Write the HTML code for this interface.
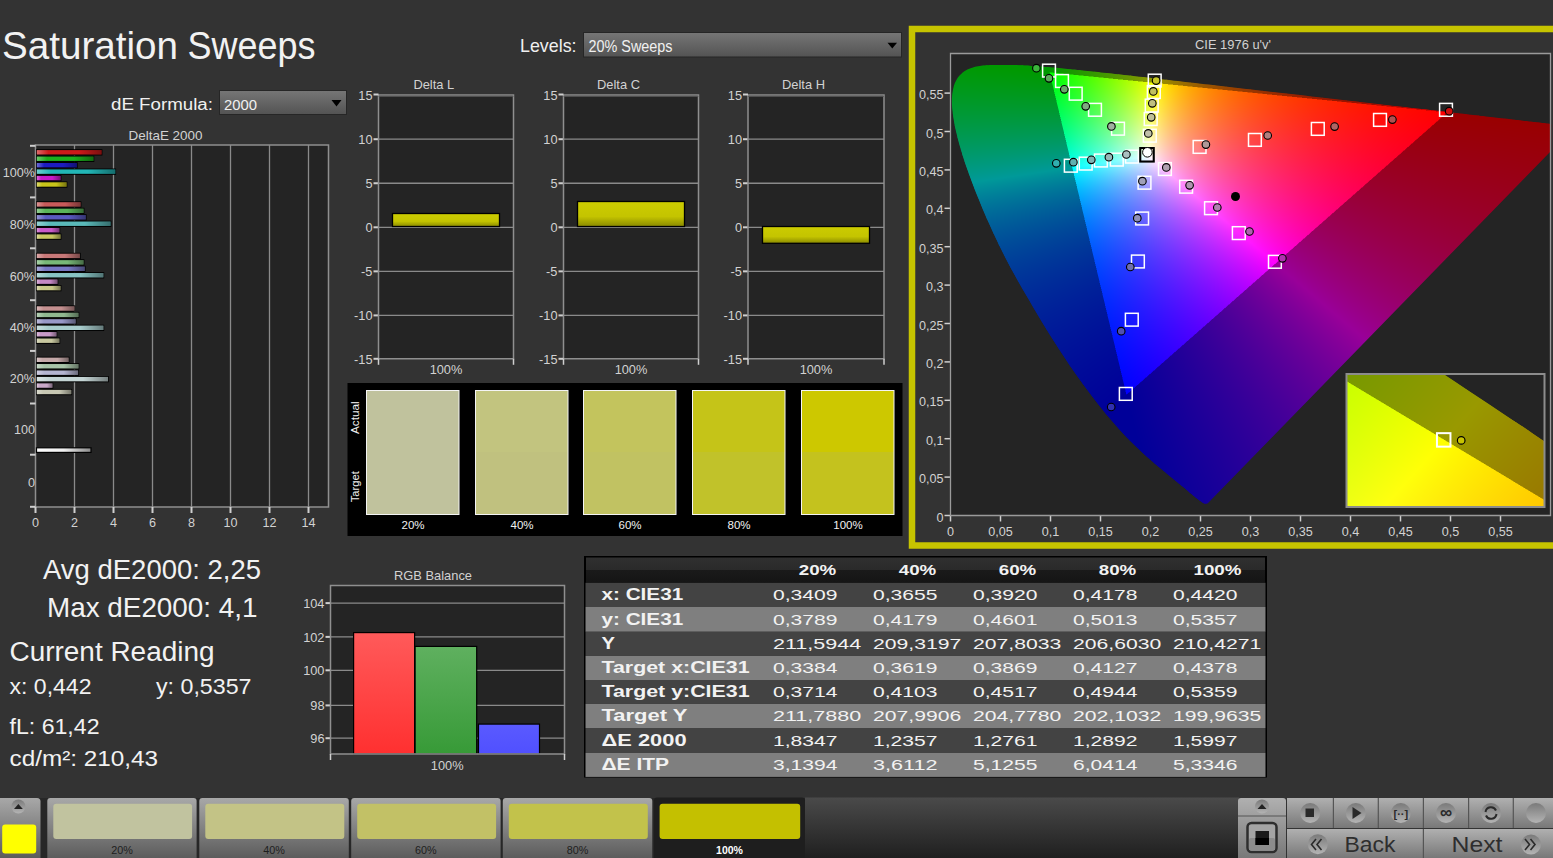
<!DOCTYPE html>
<html><head><meta charset="utf-8"><style>
html,body{margin:0;padding:0;background:#333333;width:1553px;height:858px;overflow:hidden;}
svg{position:absolute;left:0;top:0;}
text{font-family:"Liberation Sans",sans-serif;}
canvas{position:absolute;}
</style></head><body>
<svg width="1553" height="858" viewBox="0 0 1553 858"><defs>
<linearGradient id="barov" x1="0" y1="0" x2="1" y2="0"><stop offset="0" stop-color="#fff" stop-opacity="0.35"/><stop offset="0.18" stop-color="#fff" stop-opacity="0"/><stop offset="0.65" stop-color="#000" stop-opacity="0"/><stop offset="1" stop-color="#000" stop-opacity="0.4"/></linearGradient>
<linearGradient id="ddgrad" x1="0" y1="0" x2="0" y2="1"><stop offset="0" stop-color="#767676"/><stop offset="1" stop-color="#535353"/></linearGradient>
<linearGradient id="ybar" x1="0" y1="0" x2="0" y2="1"><stop offset="0" stop-color="#cccc00"/><stop offset="0.6" stop-color="#c4c400"/><stop offset="1" stop-color="#8a8a00"/></linearGradient>
<linearGradient id="rbar" x1="0" y1="0" x2="0" y2="1"><stop offset="0" stop-color="#ff5a5a"/><stop offset="1" stop-color="#ff3030"/></linearGradient>
<linearGradient id="gbar" x1="0" y1="0" x2="0" y2="1"><stop offset="0" stop-color="#5fb05f"/><stop offset="1" stop-color="#379a37"/></linearGradient>
<linearGradient id="bbar" x1="0" y1="0" x2="0" y2="1"><stop offset="0" stop-color="#5a5aff"/><stop offset="1" stop-color="#5050ff"/></linearGradient>
<linearGradient id="btn" x1="0" y1="0" x2="0" y2="1"><stop offset="0" stop-color="#a8a8a8"/><stop offset="1" stop-color="#5c5c5c"/></linearGradient>
<linearGradient id="btn2" x1="0" y1="0" x2="0" y2="1"><stop offset="0" stop-color="#b0b0b0"/><stop offset="1" stop-color="#787878"/></linearGradient>
<linearGradient id="tbar" x1="0" y1="0" x2="0" y2="1"><stop offset="0" stop-color="#4a4a4a"/><stop offset="1" stop-color="#1f1f1f"/></linearGradient>
<linearGradient id="circ" x1="0" y1="0" x2="0" y2="1"><stop offset="0" stop-color="#7a7a7a"/><stop offset="1" stop-color="#b4b4b4"/></linearGradient>
<linearGradient id="whitebar" x1="0" y1="0" x2="1" y2="0"><stop offset="0" stop-color="#ffffff"/><stop offset="0.5" stop-color="#f0f0f0"/><stop offset="1" stop-color="#8a8a8a"/></linearGradient>
<linearGradient id="thead" x1="0" y1="0" x2="0" y2="1"><stop offset="0" stop-color="#303030"/><stop offset="0.5" stop-color="#2a2a2a"/><stop offset="0.5" stop-color="#1a1a1a"/><stop offset="1" stop-color="#151515"/></linearGradient>
</defs>
<rect x="0" y="0" width="1553" height="858" fill="#333333"/>
<text x="2" y="58.7" font-size="38.5" fill="#f2f2f2" text-anchor="start" font-weight="normal" textLength="176" lengthAdjust="spacingAndGlyphs">Saturation</text>
<text x="187.5" y="58.7" font-size="38.5" fill="#f2f2f2" text-anchor="start" font-weight="normal" textLength="128" lengthAdjust="spacingAndGlyphs">Sweeps</text>
<text x="111" y="109.8" font-size="15.8" fill="#f0f0f0" text-anchor="start" font-weight="normal" textLength="102" lengthAdjust="spacingAndGlyphs">dE Formula:</text>
<rect x="219.5" y="90.5" width="127" height="24" fill="url(#ddgrad)" stroke="#262626" stroke-width="1" />
<text x="224" y="109.8" font-size="15.5" fill="#f0f0f0" text-anchor="start" font-weight="normal" textLength="33" lengthAdjust="spacingAndGlyphs">2000</text>
<polygon points="331.5,100 341.5,100 336.5,106.5" fill="#000"/>
<text x="520" y="51.7" font-size="19" fill="#f0f0f0" text-anchor="start" font-weight="normal" textLength="56.5" lengthAdjust="spacingAndGlyphs">Levels:</text>
<rect x="583.5" y="32.5" width="318" height="24.5" fill="url(#ddgrad)" stroke="#262626" stroke-width="1" />
<text x="588.5" y="51.7" font-size="15.6" fill="#f0f0f0" text-anchor="start" font-weight="normal" textLength="84" lengthAdjust="spacingAndGlyphs">20% Sweeps</text>
<polygon points="887.5,42.8 897,42.8 892.3,48.5" fill="#000"/>
<text x="128.5" y="139.9" font-size="12.6" fill="#d2d2d2" text-anchor="start" font-weight="normal" textLength="74" lengthAdjust="spacingAndGlyphs">DeltaE 2000</text>
<rect x="35.5" y="145" width="293.0" height="362" fill="#242424" />
<line x1="74.5" y1="145" x2="74.5" y2="507" stroke="#8a8a8a" stroke-width="1.3"/>
<line x1="113.5" y1="145" x2="113.5" y2="507" stroke="#8a8a8a" stroke-width="1.3"/>
<line x1="152.5" y1="145" x2="152.5" y2="507" stroke="#8a8a8a" stroke-width="1.3"/>
<line x1="191.5" y1="145" x2="191.5" y2="507" stroke="#8a8a8a" stroke-width="1.3"/>
<line x1="230.5" y1="145" x2="230.5" y2="507" stroke="#8a8a8a" stroke-width="1.3"/>
<line x1="269.5" y1="145" x2="269.5" y2="507" stroke="#8a8a8a" stroke-width="1.3"/>
<line x1="308.5" y1="145" x2="308.5" y2="507" stroke="#8a8a8a" stroke-width="1.3"/>
<path d="M35.5 145 H328.5 V507 H35.5 Z" fill="none" stroke="#8f8f8f" stroke-width="1.5"/>
<line x1="30" y1="145.8" x2="35.5" y2="145.8" stroke="#cfcfcf" stroke-width="2"/>
<line x1="30" y1="197.4" x2="35.5" y2="197.4" stroke="#cfcfcf" stroke-width="2"/>
<line x1="30" y1="248.3" x2="35.5" y2="248.3" stroke="#cfcfcf" stroke-width="2"/>
<line x1="30" y1="300.2" x2="35.5" y2="300.2" stroke="#cfcfcf" stroke-width="2"/>
<line x1="30" y1="350.9" x2="35.5" y2="350.9" stroke="#cfcfcf" stroke-width="2"/>
<line x1="30" y1="403.5" x2="35.5" y2="403.5" stroke="#cfcfcf" stroke-width="2"/>
<line x1="30" y1="454.7" x2="35.5" y2="454.7" stroke="#cfcfcf" stroke-width="2"/>
<line x1="30" y1="506.8" x2="35.5" y2="506.8" stroke="#cfcfcf" stroke-width="2"/>
<line x1="35.5" y1="507" x2="35.5" y2="513" stroke="#cfcfcf" stroke-width="2"/>
<line x1="74.5" y1="507" x2="74.5" y2="513" stroke="#cfcfcf" stroke-width="2"/>
<line x1="113.5" y1="507" x2="113.5" y2="513" stroke="#cfcfcf" stroke-width="2"/>
<line x1="152.5" y1="507" x2="152.5" y2="513" stroke="#cfcfcf" stroke-width="2"/>
<line x1="191.5" y1="507" x2="191.5" y2="513" stroke="#cfcfcf" stroke-width="2"/>
<line x1="230.5" y1="507" x2="230.5" y2="513" stroke="#cfcfcf" stroke-width="2"/>
<line x1="269.5" y1="507" x2="269.5" y2="513" stroke="#cfcfcf" stroke-width="2"/>
<line x1="308.5" y1="507" x2="308.5" y2="513" stroke="#cfcfcf" stroke-width="2"/>
<text x="35.5" y="527" font-size="12.6" fill="#d2d2d2" text-anchor="middle" font-weight="normal">0</text>
<text x="74.5" y="527" font-size="12.6" fill="#d2d2d2" text-anchor="middle" font-weight="normal">2</text>
<text x="113.5" y="527" font-size="12.6" fill="#d2d2d2" text-anchor="middle" font-weight="normal">4</text>
<text x="152.5" y="527" font-size="12.6" fill="#d2d2d2" text-anchor="middle" font-weight="normal">6</text>
<text x="191.5" y="527" font-size="12.6" fill="#d2d2d2" text-anchor="middle" font-weight="normal">8</text>
<text x="230.5" y="527" font-size="12.6" fill="#d2d2d2" text-anchor="middle" font-weight="normal">10</text>
<text x="269.5" y="527" font-size="12.6" fill="#d2d2d2" text-anchor="middle" font-weight="normal">12</text>
<text x="308.5" y="527" font-size="12.6" fill="#d2d2d2" text-anchor="middle" font-weight="normal">14</text>
<text x="35" y="176.7" font-size="12.6" fill="#d2d2d2" text-anchor="end" font-weight="normal">100%</text>
<text x="35" y="228.6" font-size="12.6" fill="#d2d2d2" text-anchor="end" font-weight="normal">80%</text>
<text x="35" y="280.5" font-size="12.6" fill="#d2d2d2" text-anchor="end" font-weight="normal">60%</text>
<text x="35" y="331.5" font-size="12.6" fill="#d2d2d2" text-anchor="end" font-weight="normal">40%</text>
<text x="35" y="383.0" font-size="12.6" fill="#d2d2d2" text-anchor="end" font-weight="normal">20%</text>
<text x="35" y="434.1" font-size="12.6" fill="#d2d2d2" text-anchor="end" font-weight="normal">100</text>
<text x="35" y="487.2" font-size="12.6" fill="#d2d2d2" text-anchor="end" font-weight="normal">0</text>
<rect x="36.1" y="149.2" width="66.29999999999998" height="6.3" fill="#000" />
<rect x="36.8" y="150.1" width="64.8" height="4.4" fill="#cc1a1a" />
<rect x="36.8" y="150.1" width="64.8" height="4.4" fill="url(#barov)" />
<rect x="36.1" y="155.64" width="58.199999999999996" height="6.3" fill="#000" />
<rect x="36.8" y="156.54" width="56.7" height="4.4" fill="#1cae1c" />
<rect x="36.8" y="156.54" width="56.7" height="4.4" fill="url(#barov)" />
<rect x="36.1" y="162.07999999999998" width="41.6" height="6.3" fill="#000" />
<rect x="36.8" y="162.98" width="40.10000000000001" height="4.4" fill="#1c1cc0" />
<rect x="36.8" y="162.98" width="40.10000000000001" height="4.4" fill="url(#barov)" />
<rect x="36.1" y="168.51999999999998" width="80.0" height="6.3" fill="#000" />
<rect x="36.8" y="169.42" width="78.5" height="4.4" fill="#22b6b6" />
<rect x="36.8" y="169.42" width="78.5" height="4.4" fill="url(#barov)" />
<rect x="36.1" y="174.95999999999998" width="25.299999999999997" height="6.3" fill="#000" />
<rect x="36.8" y="175.85999999999999" width="23.800000000000004" height="4.4" fill="#c81ac8" />
<rect x="36.8" y="175.85999999999999" width="23.800000000000004" height="4.4" fill="url(#barov)" />
<rect x="36.1" y="181.39999999999998" width="31.29999999999999" height="6.3" fill="#000" />
<rect x="36.8" y="182.29999999999998" width="29.799999999999997" height="4.4" fill="#c8c41a" />
<rect x="36.8" y="182.29999999999998" width="29.799999999999997" height="4.4" fill="url(#barov)" />
<rect x="36.1" y="201.3" width="45.29999999999999" height="6.3" fill="#000" />
<rect x="36.8" y="202.20000000000002" width="43.8" height="4.4" fill="#c85a5a" />
<rect x="36.8" y="202.20000000000002" width="43.8" height="4.4" fill="url(#barov)" />
<rect x="36.1" y="207.74" width="48.29999999999999" height="6.3" fill="#000" />
<rect x="36.8" y="208.64000000000001" width="46.8" height="4.4" fill="#5ab45a" />
<rect x="36.8" y="208.64000000000001" width="46.8" height="4.4" fill="url(#barov)" />
<rect x="36.1" y="214.18" width="50.49999999999999" height="6.3" fill="#000" />
<rect x="36.8" y="215.08" width="49.0" height="4.4" fill="#5a5ac0" />
<rect x="36.8" y="215.08" width="49.0" height="4.4" fill="url(#barov)" />
<rect x="36.1" y="220.62" width="75.29999999999998" height="6.3" fill="#000" />
<rect x="36.8" y="221.52" width="73.8" height="4.4" fill="#5ab9b9" />
<rect x="36.8" y="221.52" width="73.8" height="4.4" fill="url(#barov)" />
<rect x="36.1" y="227.06" width="24.099999999999994" height="6.3" fill="#000" />
<rect x="36.8" y="227.96" width="22.6" height="4.4" fill="#c85ac8" />
<rect x="36.8" y="227.96" width="22.6" height="4.4" fill="url(#barov)" />
<rect x="36.1" y="233.5" width="25.299999999999997" height="6.3" fill="#000" />
<rect x="36.8" y="234.4" width="23.800000000000004" height="4.4" fill="#c8c860" />
<rect x="36.8" y="234.4" width="23.800000000000004" height="4.4" fill="url(#barov)" />
<rect x="36.1" y="252.8" width="44.6" height="6.3" fill="#000" />
<rect x="36.8" y="253.70000000000002" width="43.10000000000001" height="4.4" fill="#c87878" />
<rect x="36.8" y="253.70000000000002" width="43.10000000000001" height="4.4" fill="url(#barov)" />
<rect x="36.1" y="259.24" width="48.29999999999999" height="6.3" fill="#000" />
<rect x="36.8" y="260.14" width="46.8" height="4.4" fill="#78b878" />
<rect x="36.8" y="260.14" width="46.8" height="4.4" fill="url(#barov)" />
<rect x="36.1" y="265.68" width="49.49999999999999" height="6.3" fill="#000" />
<rect x="36.8" y="266.58" width="48.0" height="4.4" fill="#7878c4" />
<rect x="36.8" y="266.58" width="48.0" height="4.4" fill="url(#barov)" />
<rect x="36.1" y="272.12" width="68.1" height="6.3" fill="#000" />
<rect x="36.8" y="273.02" width="66.60000000000001" height="4.4" fill="#88c4c4" />
<rect x="36.8" y="273.02" width="66.60000000000001" height="4.4" fill="url(#barov)" />
<rect x="36.1" y="278.56" width="22.199999999999996" height="6.3" fill="#000" />
<rect x="36.8" y="279.46" width="20.700000000000003" height="4.4" fill="#c488c4" />
<rect x="36.8" y="279.46" width="20.700000000000003" height="4.4" fill="url(#barov)" />
<rect x="36.1" y="285.0" width="25.299999999999997" height="6.3" fill="#000" />
<rect x="36.8" y="285.9" width="23.800000000000004" height="4.4" fill="#c8c888" />
<rect x="36.8" y="285.9" width="23.800000000000004" height="4.4" fill="url(#barov)" />
<rect x="36.1" y="305.4" width="39.199999999999996" height="6.3" fill="#000" />
<rect x="36.8" y="306.29999999999995" width="37.7" height="4.4" fill="#c49090" />
<rect x="36.8" y="306.29999999999995" width="37.7" height="4.4" fill="url(#barov)" />
<rect x="36.1" y="311.84" width="43.199999999999996" height="6.3" fill="#000" />
<rect x="36.8" y="312.73999999999995" width="41.7" height="4.4" fill="#90b890" />
<rect x="36.8" y="312.73999999999995" width="41.7" height="4.4" fill="url(#barov)" />
<rect x="36.1" y="318.28" width="40.4" height="6.3" fill="#000" />
<rect x="36.8" y="319.17999999999995" width="38.900000000000006" height="4.4" fill="#9898c8" />
<rect x="36.8" y="319.17999999999995" width="38.900000000000006" height="4.4" fill="url(#barov)" />
<rect x="36.1" y="324.71999999999997" width="68.1" height="6.3" fill="#000" />
<rect x="36.8" y="325.61999999999995" width="66.60000000000001" height="4.4" fill="#a8cccc" />
<rect x="36.8" y="325.61999999999995" width="66.60000000000001" height="4.4" fill="url(#barov)" />
<rect x="36.1" y="331.15999999999997" width="21.199999999999996" height="6.3" fill="#000" />
<rect x="36.8" y="332.05999999999995" width="19.700000000000003" height="4.4" fill="#c89ac8" />
<rect x="36.8" y="332.05999999999995" width="19.700000000000003" height="4.4" fill="url(#barov)" />
<rect x="36.1" y="337.59999999999997" width="24.099999999999994" height="6.3" fill="#000" />
<rect x="36.8" y="338.49999999999994" width="22.6" height="4.4" fill="#c8c8a0" />
<rect x="36.8" y="338.49999999999994" width="22.6" height="4.4" fill="url(#barov)" />
<rect x="36.1" y="356.7" width="33.29999999999999" height="6.3" fill="#000" />
<rect x="36.8" y="357.59999999999997" width="31.799999999999997" height="4.4" fill="#c4a8a8" />
<rect x="36.8" y="357.59999999999997" width="31.799999999999997" height="4.4" fill="url(#barov)" />
<rect x="36.1" y="363.14" width="43.199999999999996" height="6.3" fill="#000" />
<rect x="36.8" y="364.03999999999996" width="41.7" height="4.4" fill="#a8c4a8" />
<rect x="36.8" y="364.03999999999996" width="41.7" height="4.4" fill="url(#barov)" />
<rect x="36.1" y="369.58" width="42.79999999999999" height="6.3" fill="#000" />
<rect x="36.8" y="370.47999999999996" width="41.3" height="4.4" fill="#b4b4d0" />
<rect x="36.8" y="370.47999999999996" width="41.3" height="4.4" fill="url(#barov)" />
<rect x="36.1" y="376.02" width="72.69999999999999" height="6.3" fill="#000" />
<rect x="36.8" y="376.91999999999996" width="71.2" height="4.4" fill="#c4d4d4" />
<rect x="36.8" y="376.91999999999996" width="71.2" height="4.4" fill="url(#barov)" />
<rect x="36.1" y="382.46" width="17.199999999999996" height="6.3" fill="#000" />
<rect x="36.8" y="383.35999999999996" width="15.700000000000003" height="4.4" fill="#c8a8c8" />
<rect x="36.8" y="383.35999999999996" width="15.700000000000003" height="4.4" fill="url(#barov)" />
<rect x="36.1" y="388.9" width="35.99999999999999" height="6.3" fill="#000" />
<rect x="36.8" y="389.79999999999995" width="34.5" height="4.4" fill="#c8c8b4" />
<rect x="36.8" y="389.79999999999995" width="34.5" height="4.4" fill="url(#barov)" />
<rect x="36.5" y="447.8" width="54.5" height="4.6" fill="url(#whitebar)" stroke="#000" stroke-width="1.2" />
<text x="433.8" y="88.9" font-size="12.9" fill="#d2d2d2" text-anchor="middle" font-weight="normal">Delta L</text>
<rect x="378.5" y="94.5" width="135.0" height="264.3" fill="#242424" />
<line x1="378.5" y1="139.2" x2="513.5" y2="139.2" stroke="#8a8a8a" stroke-width="1.3"/>
<line x1="373.5" y1="139.2" x2="378.5" y2="139.2" stroke="#cfcfcf" stroke-width="2"/>
<line x1="378.5" y1="183.25" x2="513.5" y2="183.25" stroke="#8a8a8a" stroke-width="1.3"/>
<line x1="373.5" y1="183.25" x2="378.5" y2="183.25" stroke="#cfcfcf" stroke-width="2"/>
<line x1="378.5" y1="227.3" x2="513.5" y2="227.3" stroke="#8a8a8a" stroke-width="1.3"/>
<line x1="373.5" y1="227.3" x2="378.5" y2="227.3" stroke="#cfcfcf" stroke-width="2"/>
<line x1="378.5" y1="271.35" x2="513.5" y2="271.35" stroke="#8a8a8a" stroke-width="1.3"/>
<line x1="373.5" y1="271.35" x2="378.5" y2="271.35" stroke="#cfcfcf" stroke-width="2"/>
<line x1="378.5" y1="315.40000000000003" x2="513.5" y2="315.40000000000003" stroke="#8a8a8a" stroke-width="1.3"/>
<line x1="373.5" y1="315.40000000000003" x2="378.5" y2="315.40000000000003" stroke="#cfcfcf" stroke-width="2"/>
<path d="M378.5 95.0 H513.5 V358.8 H378.5 Z" fill="none" stroke="#8f8f8f" stroke-width="1.5"/>
<line x1="378.5" y1="96.3" x2="513.5" y2="96.3" stroke="#5a5a5a" stroke-width="1"/>
<line x1="373.5" y1="94.5" x2="378.5" y2="94.5" stroke="#cfcfcf" stroke-width="2"/>
<line x1="373.5" y1="358.8" x2="378.5" y2="358.8" stroke="#cfcfcf" stroke-width="2"/>
<line x1="378.5" y1="358.8" x2="378.5" y2="364.8" stroke="#cfcfcf" stroke-width="1.5"/>
<line x1="513.5" y1="358.8" x2="513.5" y2="364.8" stroke="#cfcfcf" stroke-width="1.5"/>
<text x="372.5" y="99.75" font-size="12.8" fill="#d2d2d2" text-anchor="end" font-weight="normal">15</text>
<text x="372.5" y="143.79999999999998" font-size="12.8" fill="#d2d2d2" text-anchor="end" font-weight="normal">10</text>
<text x="372.5" y="187.85" font-size="12.8" fill="#d2d2d2" text-anchor="end" font-weight="normal">5</text>
<text x="372.5" y="231.9" font-size="12.8" fill="#d2d2d2" text-anchor="end" font-weight="normal">0</text>
<text x="372.5" y="275.95000000000005" font-size="12.8" fill="#d2d2d2" text-anchor="end" font-weight="normal">-5</text>
<text x="372.5" y="320.00000000000006" font-size="12.8" fill="#d2d2d2" text-anchor="end" font-weight="normal">-10</text>
<text x="372.5" y="364.05000000000007" font-size="12.8" fill="#d2d2d2" text-anchor="end" font-weight="normal">-15</text>
<text x="446.0" y="374" font-size="12.8" fill="#d2d2d2" text-anchor="middle" font-weight="normal">100%</text>
<rect x="392.5" y="213.5" width="107.0" height="13.0" fill="url(#ybar)" stroke="#000" stroke-width="1.3" />
<text x="618.5" y="88.9" font-size="12.9" fill="#d2d2d2" text-anchor="middle" font-weight="normal">Delta C</text>
<rect x="563.5" y="94.5" width="135.0" height="264.3" fill="#242424" />
<line x1="563.5" y1="139.2" x2="698.5" y2="139.2" stroke="#8a8a8a" stroke-width="1.3"/>
<line x1="558.5" y1="139.2" x2="563.5" y2="139.2" stroke="#cfcfcf" stroke-width="2"/>
<line x1="563.5" y1="183.25" x2="698.5" y2="183.25" stroke="#8a8a8a" stroke-width="1.3"/>
<line x1="558.5" y1="183.25" x2="563.5" y2="183.25" stroke="#cfcfcf" stroke-width="2"/>
<line x1="563.5" y1="227.3" x2="698.5" y2="227.3" stroke="#8a8a8a" stroke-width="1.3"/>
<line x1="558.5" y1="227.3" x2="563.5" y2="227.3" stroke="#cfcfcf" stroke-width="2"/>
<line x1="563.5" y1="271.35" x2="698.5" y2="271.35" stroke="#8a8a8a" stroke-width="1.3"/>
<line x1="558.5" y1="271.35" x2="563.5" y2="271.35" stroke="#cfcfcf" stroke-width="2"/>
<line x1="563.5" y1="315.40000000000003" x2="698.5" y2="315.40000000000003" stroke="#8a8a8a" stroke-width="1.3"/>
<line x1="558.5" y1="315.40000000000003" x2="563.5" y2="315.40000000000003" stroke="#cfcfcf" stroke-width="2"/>
<path d="M563.5 95.0 H698.5 V358.8 H563.5 Z" fill="none" stroke="#8f8f8f" stroke-width="1.5"/>
<line x1="563.5" y1="96.3" x2="698.5" y2="96.3" stroke="#5a5a5a" stroke-width="1"/>
<line x1="558.5" y1="94.5" x2="563.5" y2="94.5" stroke="#cfcfcf" stroke-width="2"/>
<line x1="558.5" y1="358.8" x2="563.5" y2="358.8" stroke="#cfcfcf" stroke-width="2"/>
<line x1="563.5" y1="358.8" x2="563.5" y2="364.8" stroke="#cfcfcf" stroke-width="1.5"/>
<line x1="698.5" y1="358.8" x2="698.5" y2="364.8" stroke="#cfcfcf" stroke-width="1.5"/>
<text x="557.5" y="99.75" font-size="12.8" fill="#d2d2d2" text-anchor="end" font-weight="normal">15</text>
<text x="557.5" y="143.79999999999998" font-size="12.8" fill="#d2d2d2" text-anchor="end" font-weight="normal">10</text>
<text x="557.5" y="187.85" font-size="12.8" fill="#d2d2d2" text-anchor="end" font-weight="normal">5</text>
<text x="557.5" y="231.9" font-size="12.8" fill="#d2d2d2" text-anchor="end" font-weight="normal">0</text>
<text x="557.5" y="275.95000000000005" font-size="12.8" fill="#d2d2d2" text-anchor="end" font-weight="normal">-5</text>
<text x="557.5" y="320.00000000000006" font-size="12.8" fill="#d2d2d2" text-anchor="end" font-weight="normal">-10</text>
<text x="557.5" y="364.05000000000007" font-size="12.8" fill="#d2d2d2" text-anchor="end" font-weight="normal">-15</text>
<text x="631.0" y="374" font-size="12.8" fill="#d2d2d2" text-anchor="middle" font-weight="normal">100%</text>
<rect x="577.5" y="201.5" width="107.0" height="25.0" fill="url(#ybar)" stroke="#000" stroke-width="1.3" />
<text x="803.5" y="88.9" font-size="12.9" fill="#d2d2d2" text-anchor="middle" font-weight="normal">Delta H</text>
<rect x="748" y="94.5" width="136" height="264.3" fill="#242424" />
<line x1="748" y1="139.2" x2="884" y2="139.2" stroke="#8a8a8a" stroke-width="1.3"/>
<line x1="743" y1="139.2" x2="748" y2="139.2" stroke="#cfcfcf" stroke-width="2"/>
<line x1="748" y1="183.25" x2="884" y2="183.25" stroke="#8a8a8a" stroke-width="1.3"/>
<line x1="743" y1="183.25" x2="748" y2="183.25" stroke="#cfcfcf" stroke-width="2"/>
<line x1="748" y1="227.3" x2="884" y2="227.3" stroke="#8a8a8a" stroke-width="1.3"/>
<line x1="743" y1="227.3" x2="748" y2="227.3" stroke="#cfcfcf" stroke-width="2"/>
<line x1="748" y1="271.35" x2="884" y2="271.35" stroke="#8a8a8a" stroke-width="1.3"/>
<line x1="743" y1="271.35" x2="748" y2="271.35" stroke="#cfcfcf" stroke-width="2"/>
<line x1="748" y1="315.40000000000003" x2="884" y2="315.40000000000003" stroke="#8a8a8a" stroke-width="1.3"/>
<line x1="743" y1="315.40000000000003" x2="748" y2="315.40000000000003" stroke="#cfcfcf" stroke-width="2"/>
<path d="M748 95.0 H884 V358.8 H748 Z" fill="none" stroke="#8f8f8f" stroke-width="1.5"/>
<line x1="748" y1="96.3" x2="884" y2="96.3" stroke="#5a5a5a" stroke-width="1"/>
<line x1="743" y1="94.5" x2="748" y2="94.5" stroke="#cfcfcf" stroke-width="2"/>
<line x1="743" y1="358.8" x2="748" y2="358.8" stroke="#cfcfcf" stroke-width="2"/>
<line x1="748" y1="358.8" x2="748" y2="364.8" stroke="#cfcfcf" stroke-width="1.5"/>
<line x1="884" y1="358.8" x2="884" y2="364.8" stroke="#cfcfcf" stroke-width="1.5"/>
<text x="742" y="99.75" font-size="12.8" fill="#d2d2d2" text-anchor="end" font-weight="normal">15</text>
<text x="742" y="143.79999999999998" font-size="12.8" fill="#d2d2d2" text-anchor="end" font-weight="normal">10</text>
<text x="742" y="187.85" font-size="12.8" fill="#d2d2d2" text-anchor="end" font-weight="normal">5</text>
<text x="742" y="231.9" font-size="12.8" fill="#d2d2d2" text-anchor="end" font-weight="normal">0</text>
<text x="742" y="275.95000000000005" font-size="12.8" fill="#d2d2d2" text-anchor="end" font-weight="normal">-5</text>
<text x="742" y="320.00000000000006" font-size="12.8" fill="#d2d2d2" text-anchor="end" font-weight="normal">-10</text>
<text x="742" y="364.05000000000007" font-size="12.8" fill="#d2d2d2" text-anchor="end" font-weight="normal">-15</text>
<text x="816.0" y="374" font-size="12.8" fill="#d2d2d2" text-anchor="middle" font-weight="normal">100%</text>
<rect x="762.5" y="226.5" width="107.0" height="16.80000000000001" fill="url(#ybar)" stroke="#000" stroke-width="1.3" />
<rect x="347.5" y="383" width="555" height="153" fill="#000000" />
<text transform="rotate(-90 359.5 417.7)" x="359.5" y="417.7" font-size="11.8" fill="#f0f0f0" text-anchor="middle" font-weight="normal" textLength="32.8" lengthAdjust="spacingAndGlyphs">Actual</text>
<text transform="rotate(-90 359.5 486.7)" x="359.5" y="486.7" font-size="11.8" fill="#f0f0f0" text-anchor="middle" font-weight="normal" textLength="31" lengthAdjust="spacingAndGlyphs">Target</text>
<rect x="366.5" y="390.5" width="92.5" height="124" fill="#c0c29d" />
<rect x="366.5" y="390.5" width="92.5" height="61.5" fill="#c0c29d" />
<rect x="366.5" y="390.5" width="92.5" height="124" fill="none" stroke="#f4f4f4" stroke-width="1" />
<text x="413.0" y="529" font-size="11.5" fill="#f0f0f0" text-anchor="middle" font-weight="normal">20%</text>
<rect x="475.5" y="390.5" width="92.5" height="124" fill="#c0c17f" />
<rect x="475.5" y="390.5" width="92.5" height="61.5" fill="#c2c47f" />
<rect x="475.5" y="390.5" width="92.5" height="124" fill="none" stroke="#f4f4f4" stroke-width="1" />
<text x="522.0" y="529" font-size="11.5" fill="#f0f0f0" text-anchor="middle" font-weight="normal">40%</text>
<rect x="583.5" y="390.5" width="92.5" height="124" fill="#c1c262" />
<rect x="583.5" y="390.5" width="92.5" height="61.5" fill="#c3c45d" />
<rect x="583.5" y="390.5" width="92.5" height="124" fill="none" stroke="#f4f4f4" stroke-width="1" />
<text x="630.0" y="529" font-size="11.5" fill="#f0f0f0" text-anchor="middle" font-weight="normal">60%</text>
<rect x="692.5" y="390.5" width="92.5" height="124" fill="#c1c22a" />
<rect x="692.5" y="390.5" width="92.5" height="61.5" fill="#c5c418" />
<rect x="692.5" y="390.5" width="92.5" height="124" fill="none" stroke="#f4f4f4" stroke-width="1" />
<text x="739.0" y="529" font-size="11.5" fill="#f0f0f0" text-anchor="middle" font-weight="normal">80%</text>
<rect x="801.5" y="390.5" width="92.5" height="124" fill="#c4c21e" />
<rect x="801.5" y="390.5" width="92.5" height="61.5" fill="#cdc800" />
<rect x="801.5" y="390.5" width="92.5" height="124" fill="none" stroke="#f4f4f4" stroke-width="1" />
<text x="848.0" y="529" font-size="11.5" fill="#f0f0f0" text-anchor="middle" font-weight="normal">100%</text>
<rect x="912" y="29" width="660" height="516.5" fill="none" stroke="#c6c400" stroke-width="6.5" />
<text x="1233" y="48.5" font-size="12.6" fill="#d2d2d2" text-anchor="middle" font-weight="normal" textLength="76" lengthAdjust="spacingAndGlyphs">CIE 1976 u'v'</text>
<rect x="950.5" y="53.5" width="600.0" height="462.0" fill="#242424" />
<line x1="950.5" y1="515.5" x2="950.5" y2="521.5" stroke="#cfcfcf" stroke-width="1.5"/>
<text x="950.5" y="536" font-size="12.6" fill="#d2d2d2" text-anchor="middle" font-weight="normal">0</text>
<line x1="1000.5" y1="515.5" x2="1000.5" y2="521.5" stroke="#cfcfcf" stroke-width="1.5"/>
<text x="1000.5" y="536" font-size="12.6" fill="#d2d2d2" text-anchor="middle" font-weight="normal">0,05</text>
<line x1="1050.5" y1="515.5" x2="1050.5" y2="521.5" stroke="#cfcfcf" stroke-width="1.5"/>
<text x="1050.5" y="536" font-size="12.6" fill="#d2d2d2" text-anchor="middle" font-weight="normal">0,1</text>
<line x1="1100.5" y1="515.5" x2="1100.5" y2="521.5" stroke="#cfcfcf" stroke-width="1.5"/>
<text x="1100.5" y="536" font-size="12.6" fill="#d2d2d2" text-anchor="middle" font-weight="normal">0,15</text>
<line x1="1150.5" y1="515.5" x2="1150.5" y2="521.5" stroke="#cfcfcf" stroke-width="1.5"/>
<text x="1150.5" y="536" font-size="12.6" fill="#d2d2d2" text-anchor="middle" font-weight="normal">0,2</text>
<line x1="1200.5" y1="515.5" x2="1200.5" y2="521.5" stroke="#cfcfcf" stroke-width="1.5"/>
<text x="1200.5" y="536" font-size="12.6" fill="#d2d2d2" text-anchor="middle" font-weight="normal">0,25</text>
<line x1="1250.5" y1="515.5" x2="1250.5" y2="521.5" stroke="#cfcfcf" stroke-width="1.5"/>
<text x="1250.5" y="536" font-size="12.6" fill="#d2d2d2" text-anchor="middle" font-weight="normal">0,3</text>
<line x1="1300.5" y1="515.5" x2="1300.5" y2="521.5" stroke="#cfcfcf" stroke-width="1.5"/>
<text x="1300.5" y="536" font-size="12.6" fill="#d2d2d2" text-anchor="middle" font-weight="normal">0,35</text>
<line x1="1350.5" y1="515.5" x2="1350.5" y2="521.5" stroke="#cfcfcf" stroke-width="1.5"/>
<text x="1350.5" y="536" font-size="12.6" fill="#d2d2d2" text-anchor="middle" font-weight="normal">0,4</text>
<line x1="1400.5" y1="515.5" x2="1400.5" y2="521.5" stroke="#cfcfcf" stroke-width="1.5"/>
<text x="1400.5" y="536" font-size="12.6" fill="#d2d2d2" text-anchor="middle" font-weight="normal">0,45</text>
<line x1="1450.5" y1="515.5" x2="1450.5" y2="521.5" stroke="#cfcfcf" stroke-width="1.5"/>
<text x="1450.5" y="536" font-size="12.6" fill="#d2d2d2" text-anchor="middle" font-weight="normal">0,5</text>
<line x1="1500.5" y1="515.5" x2="1500.5" y2="521.5" stroke="#cfcfcf" stroke-width="1.5"/>
<text x="1500.5" y="536" font-size="12.6" fill="#d2d2d2" text-anchor="middle" font-weight="normal">0,55</text>
<line x1="944.5" y1="515.5" x2="950.5" y2="515.5" stroke="#cfcfcf" stroke-width="1.5"/>
<text x="943.5" y="521.5" font-size="12.6" fill="#d2d2d2" text-anchor="end" font-weight="normal">0</text>
<line x1="944.5" y1="477.1" x2="950.5" y2="477.1" stroke="#cfcfcf" stroke-width="1.5"/>
<text x="943.5" y="483.1" font-size="12.6" fill="#d2d2d2" text-anchor="end" font-weight="normal">0,05</text>
<line x1="944.5" y1="438.7" x2="950.5" y2="438.7" stroke="#cfcfcf" stroke-width="1.5"/>
<text x="943.5" y="444.7" font-size="12.6" fill="#d2d2d2" text-anchor="end" font-weight="normal">0,1</text>
<line x1="944.5" y1="400.29999999999995" x2="950.5" y2="400.29999999999995" stroke="#cfcfcf" stroke-width="1.5"/>
<text x="943.5" y="406.29999999999995" font-size="12.6" fill="#d2d2d2" text-anchor="end" font-weight="normal">0,15</text>
<line x1="944.5" y1="361.9" x2="950.5" y2="361.9" stroke="#cfcfcf" stroke-width="1.5"/>
<text x="943.5" y="367.9" font-size="12.6" fill="#d2d2d2" text-anchor="end" font-weight="normal">0,2</text>
<line x1="944.5" y1="323.5" x2="950.5" y2="323.5" stroke="#cfcfcf" stroke-width="1.5"/>
<text x="943.5" y="329.5" font-size="12.6" fill="#d2d2d2" text-anchor="end" font-weight="normal">0,25</text>
<line x1="944.5" y1="285.09999999999997" x2="950.5" y2="285.09999999999997" stroke="#cfcfcf" stroke-width="1.5"/>
<text x="943.5" y="291.09999999999997" font-size="12.6" fill="#d2d2d2" text-anchor="end" font-weight="normal">0,3</text>
<line x1="944.5" y1="246.7" x2="950.5" y2="246.7" stroke="#cfcfcf" stroke-width="1.5"/>
<text x="943.5" y="252.7" font-size="12.6" fill="#d2d2d2" text-anchor="end" font-weight="normal">0,35</text>
<line x1="944.5" y1="208.29999999999995" x2="950.5" y2="208.29999999999995" stroke="#cfcfcf" stroke-width="1.5"/>
<text x="943.5" y="214.29999999999995" font-size="12.6" fill="#d2d2d2" text-anchor="end" font-weight="normal">0,4</text>
<line x1="944.5" y1="169.89999999999998" x2="950.5" y2="169.89999999999998" stroke="#cfcfcf" stroke-width="1.5"/>
<text x="943.5" y="175.89999999999998" font-size="12.6" fill="#d2d2d2" text-anchor="end" font-weight="normal">0,45</text>
<line x1="944.5" y1="131.5" x2="950.5" y2="131.5" stroke="#cfcfcf" stroke-width="1.5"/>
<text x="943.5" y="137.5" font-size="12.6" fill="#d2d2d2" text-anchor="end" font-weight="normal">0,5</text>
<line x1="944.5" y1="93.09999999999997" x2="950.5" y2="93.09999999999997" stroke="#cfcfcf" stroke-width="1.5"/>
<text x="943.5" y="99.09999999999997" font-size="12.6" fill="#d2d2d2" text-anchor="end" font-weight="normal">0,55</text>
<text x="43" y="578.7" font-size="27.5" fill="#f2f2f2" text-anchor="start" font-weight="normal" textLength="218" lengthAdjust="spacingAndGlyphs">Avg dE2000: 2,25</text>
<text x="47" y="616.6" font-size="27.5" fill="#f2f2f2" text-anchor="start" font-weight="normal" textLength="210.5" lengthAdjust="spacingAndGlyphs">Max dE2000: 4,1</text>
<text x="9.5" y="660.9" font-size="26.8" fill="#f2f2f2" text-anchor="start" font-weight="normal" textLength="205" lengthAdjust="spacingAndGlyphs">Current Reading</text>
<text x="9.5" y="693.8" font-size="21.2" fill="#f2f2f2" text-anchor="start" font-weight="normal" textLength="82" lengthAdjust="spacingAndGlyphs">x: 0,442</text>
<text x="156" y="693.8" font-size="21.2" fill="#f2f2f2" text-anchor="start" font-weight="normal" textLength="95.5" lengthAdjust="spacingAndGlyphs">y: 0,5357</text>
<text x="9.5" y="733.7" font-size="21.2" fill="#f2f2f2" text-anchor="start" font-weight="normal" textLength="90" lengthAdjust="spacingAndGlyphs">fL: 61,42</text>
<text x="9.5" y="765.7" font-size="21.2" fill="#f2f2f2" text-anchor="start" font-weight="normal" textLength="148.5" lengthAdjust="spacingAndGlyphs">cd/m²: 210,43</text>
<text x="433" y="579.5" font-size="12.6" fill="#d2d2d2" text-anchor="middle" font-weight="normal" textLength="78" lengthAdjust="spacingAndGlyphs">RGB Balance</text>
<rect x="330.5" y="585.5" width="234.0" height="168.5" fill="#242424" />
<line x1="330.5" y1="603.1" x2="564.5" y2="603.1" stroke="#8a8a8a" stroke-width="1.3"/>
<line x1="325.5" y1="603.1" x2="330.5" y2="603.1" stroke="#cfcfcf" stroke-width="2"/>
<text x="324.5" y="607.7" font-size="12.8" fill="#d2d2d2" text-anchor="end" font-weight="normal">104</text>
<line x1="330.5" y1="636.9" x2="564.5" y2="636.9" stroke="#8a8a8a" stroke-width="1.3"/>
<line x1="325.5" y1="636.9" x2="330.5" y2="636.9" stroke="#cfcfcf" stroke-width="2"/>
<text x="324.5" y="641.5" font-size="12.8" fill="#d2d2d2" text-anchor="end" font-weight="normal">102</text>
<line x1="330.5" y1="670.3" x2="564.5" y2="670.3" stroke="#8a8a8a" stroke-width="1.3"/>
<line x1="325.5" y1="670.3" x2="330.5" y2="670.3" stroke="#cfcfcf" stroke-width="2"/>
<text x="324.5" y="674.9" font-size="12.8" fill="#d2d2d2" text-anchor="end" font-weight="normal">100</text>
<line x1="330.5" y1="705.4" x2="564.5" y2="705.4" stroke="#8a8a8a" stroke-width="1.3"/>
<line x1="325.5" y1="705.4" x2="330.5" y2="705.4" stroke="#cfcfcf" stroke-width="2"/>
<text x="324.5" y="710.0" font-size="12.8" fill="#d2d2d2" text-anchor="end" font-weight="normal">98</text>
<line x1="330.5" y1="738.2" x2="564.5" y2="738.2" stroke="#8a8a8a" stroke-width="1.3"/>
<line x1="325.5" y1="738.2" x2="330.5" y2="738.2" stroke="#cfcfcf" stroke-width="2"/>
<text x="324.5" y="742.8000000000001" font-size="12.8" fill="#d2d2d2" text-anchor="end" font-weight="normal">96</text>
<rect x="353.6" y="632.6" width="61" height="121.39999999999998" fill="url(#rbar)" stroke="#000" stroke-width="1.2" />
<rect x="415.1" y="646.4" width="61.6" height="107.60000000000002" fill="url(#gbar)" stroke="#000" stroke-width="1.2" />
<rect x="478.5" y="724.1" width="61" height="29.899999999999977" fill="url(#bbar)" stroke="#000" stroke-width="1.2" />
<path d="M330.5 585.5 H564.5 V754 H330.5 Z" fill="none" stroke="#8f8f8f" stroke-width="1.5"/>
<line x1="330.5" y1="754" x2="330.5" y2="760" stroke="#cfcfcf" stroke-width="1.5"/>
<line x1="564.5" y1="754" x2="564.5" y2="760" stroke="#cfcfcf" stroke-width="1.5"/>
<text x="447.2" y="769.5" font-size="12.8" fill="#d2d2d2" text-anchor="middle" font-weight="normal">100%</text>
<rect x="584" y="556" width="683" height="221.5" fill="#000" />
<rect x="586" y="557.5" width="679" height="25.200000000000045" fill="url(#thead)" />
<rect x="585.5" y="582.8" width="680" height="24.200000000000045" fill="#434343" />
<text x="601.5" y="600.4" font-size="15.8" fill="#f2f2f2" text-anchor="start" font-weight="bold" textLength="81.7" lengthAdjust="spacingAndGlyphs">x: CIE31</text>
<text x="773" y="600.4" font-size="15.3" fill="#f2f2f2" text-anchor="start" font-weight="normal" textLength="64.5" lengthAdjust="spacingAndGlyphs">0,3409</text>
<text x="873" y="600.4" font-size="15.3" fill="#f2f2f2" text-anchor="start" font-weight="normal" textLength="64.5" lengthAdjust="spacingAndGlyphs">0,3655</text>
<text x="973" y="600.4" font-size="15.3" fill="#f2f2f2" text-anchor="start" font-weight="normal" textLength="64.5" lengthAdjust="spacingAndGlyphs">0,3920</text>
<text x="1073" y="600.4" font-size="15.3" fill="#f2f2f2" text-anchor="start" font-weight="normal" textLength="64.5" lengthAdjust="spacingAndGlyphs">0,4178</text>
<text x="1173" y="600.4" font-size="15.3" fill="#f2f2f2" text-anchor="start" font-weight="normal" textLength="64.5" lengthAdjust="spacingAndGlyphs">0,4420</text>
<rect x="585.5" y="607.0" width="680" height="24.799999999999955" fill="#7f7f7f" />
<text x="601.5" y="624.9" font-size="15.8" fill="#f2f2f2" text-anchor="start" font-weight="bold" textLength="81.7" lengthAdjust="spacingAndGlyphs">y: CIE31</text>
<text x="773" y="624.9" font-size="15.3" fill="#f2f2f2" text-anchor="start" font-weight="normal" textLength="64.5" lengthAdjust="spacingAndGlyphs">0,3789</text>
<text x="873" y="624.9" font-size="15.3" fill="#f2f2f2" text-anchor="start" font-weight="normal" textLength="64.5" lengthAdjust="spacingAndGlyphs">0,4179</text>
<text x="973" y="624.9" font-size="15.3" fill="#f2f2f2" text-anchor="start" font-weight="normal" textLength="64.5" lengthAdjust="spacingAndGlyphs">0,4601</text>
<text x="1073" y="624.9" font-size="15.3" fill="#f2f2f2" text-anchor="start" font-weight="normal" textLength="64.5" lengthAdjust="spacingAndGlyphs">0,5013</text>
<text x="1173" y="624.9" font-size="15.3" fill="#f2f2f2" text-anchor="start" font-weight="normal" textLength="64.5" lengthAdjust="spacingAndGlyphs">0,5357</text>
<rect x="585.5" y="631.8" width="680" height="24.100000000000023" fill="#434343" />
<text x="601.5" y="649.3499999999999" font-size="15.8" fill="#f2f2f2" text-anchor="start" font-weight="bold" textLength="13.5" lengthAdjust="spacingAndGlyphs">Y</text>
<text x="773" y="649.3499999999999" font-size="15.3" fill="#f2f2f2" text-anchor="start" font-weight="normal" textLength="88.3" lengthAdjust="spacingAndGlyphs">211,5944</text>
<text x="873" y="649.3499999999999" font-size="15.3" fill="#f2f2f2" text-anchor="start" font-weight="normal" textLength="88.3" lengthAdjust="spacingAndGlyphs">209,3197</text>
<text x="973" y="649.3499999999999" font-size="15.3" fill="#f2f2f2" text-anchor="start" font-weight="normal" textLength="88.3" lengthAdjust="spacingAndGlyphs">207,8033</text>
<text x="1073" y="649.3499999999999" font-size="15.3" fill="#f2f2f2" text-anchor="start" font-weight="normal" textLength="88.3" lengthAdjust="spacingAndGlyphs">206,6030</text>
<text x="1173" y="649.3499999999999" font-size="15.3" fill="#f2f2f2" text-anchor="start" font-weight="normal" textLength="88.3" lengthAdjust="spacingAndGlyphs">210,4271</text>
<rect x="585.5" y="655.9" width="680" height="24.100000000000023" fill="#7f7f7f" />
<text x="601.5" y="673.45" font-size="15.8" fill="#f2f2f2" text-anchor="start" font-weight="bold" textLength="148.1" lengthAdjust="spacingAndGlyphs">Target x:CIE31</text>
<text x="773" y="673.45" font-size="15.3" fill="#f2f2f2" text-anchor="start" font-weight="normal" textLength="64.5" lengthAdjust="spacingAndGlyphs">0,3384</text>
<text x="873" y="673.45" font-size="15.3" fill="#f2f2f2" text-anchor="start" font-weight="normal" textLength="64.5" lengthAdjust="spacingAndGlyphs">0,3619</text>
<text x="973" y="673.45" font-size="15.3" fill="#f2f2f2" text-anchor="start" font-weight="normal" textLength="64.5" lengthAdjust="spacingAndGlyphs">0,3869</text>
<text x="1073" y="673.45" font-size="15.3" fill="#f2f2f2" text-anchor="start" font-weight="normal" textLength="64.5" lengthAdjust="spacingAndGlyphs">0,4127</text>
<text x="1173" y="673.45" font-size="15.3" fill="#f2f2f2" text-anchor="start" font-weight="normal" textLength="64.5" lengthAdjust="spacingAndGlyphs">0,4378</text>
<rect x="585.5" y="680.0" width="680" height="23.899999999999977" fill="#434343" />
<text x="601.5" y="697.45" font-size="15.8" fill="#f2f2f2" text-anchor="start" font-weight="bold" textLength="148.1" lengthAdjust="spacingAndGlyphs">Target y:CIE31</text>
<text x="773" y="697.45" font-size="15.3" fill="#f2f2f2" text-anchor="start" font-weight="normal" textLength="64.5" lengthAdjust="spacingAndGlyphs">0,3714</text>
<text x="873" y="697.45" font-size="15.3" fill="#f2f2f2" text-anchor="start" font-weight="normal" textLength="64.5" lengthAdjust="spacingAndGlyphs">0,4103</text>
<text x="973" y="697.45" font-size="15.3" fill="#f2f2f2" text-anchor="start" font-weight="normal" textLength="64.5" lengthAdjust="spacingAndGlyphs">0,4517</text>
<text x="1073" y="697.45" font-size="15.3" fill="#f2f2f2" text-anchor="start" font-weight="normal" textLength="64.5" lengthAdjust="spacingAndGlyphs">0,4944</text>
<text x="1173" y="697.45" font-size="15.3" fill="#f2f2f2" text-anchor="start" font-weight="normal" textLength="64.5" lengthAdjust="spacingAndGlyphs">0,5359</text>
<rect x="585.5" y="703.9" width="680" height="24.100000000000023" fill="#7f7f7f" />
<text x="601.5" y="721.45" font-size="15.8" fill="#f2f2f2" text-anchor="start" font-weight="bold" textLength="85.9" lengthAdjust="spacingAndGlyphs">Target Y</text>
<text x="773" y="721.45" font-size="15.3" fill="#f2f2f2" text-anchor="start" font-weight="normal" textLength="88.3" lengthAdjust="spacingAndGlyphs">211,7880</text>
<text x="873" y="721.45" font-size="15.3" fill="#f2f2f2" text-anchor="start" font-weight="normal" textLength="88.3" lengthAdjust="spacingAndGlyphs">207,9906</text>
<text x="973" y="721.45" font-size="15.3" fill="#f2f2f2" text-anchor="start" font-weight="normal" textLength="88.3" lengthAdjust="spacingAndGlyphs">204,7780</text>
<text x="1073" y="721.45" font-size="15.3" fill="#f2f2f2" text-anchor="start" font-weight="normal" textLength="88.3" lengthAdjust="spacingAndGlyphs">202,1032</text>
<text x="1173" y="721.45" font-size="15.3" fill="#f2f2f2" text-anchor="start" font-weight="normal" textLength="88.3" lengthAdjust="spacingAndGlyphs">199,9635</text>
<rect x="585.5" y="728.0" width="680" height="24.799999999999955" fill="#434343" />
<text x="601.5" y="745.9" font-size="15.8" fill="#f2f2f2" text-anchor="start" font-weight="bold" textLength="85.10000000000001" lengthAdjust="spacingAndGlyphs">ΔE 2000</text>
<text x="773" y="745.9" font-size="15.3" fill="#f2f2f2" text-anchor="start" font-weight="normal" textLength="64.5" lengthAdjust="spacingAndGlyphs">1,8347</text>
<text x="873" y="745.9" font-size="15.3" fill="#f2f2f2" text-anchor="start" font-weight="normal" textLength="64.5" lengthAdjust="spacingAndGlyphs">1,2357</text>
<text x="973" y="745.9" font-size="15.3" fill="#f2f2f2" text-anchor="start" font-weight="normal" textLength="64.5" lengthAdjust="spacingAndGlyphs">1,2761</text>
<text x="1073" y="745.9" font-size="15.3" fill="#f2f2f2" text-anchor="start" font-weight="normal" textLength="64.5" lengthAdjust="spacingAndGlyphs">1,2892</text>
<text x="1173" y="745.9" font-size="15.3" fill="#f2f2f2" text-anchor="start" font-weight="normal" textLength="64.5" lengthAdjust="spacingAndGlyphs">1,5997</text>
<rect x="585.5" y="752.8" width="680" height="24.100000000000023" fill="#7f7f7f" />
<text x="601.5" y="770.3499999999999" font-size="15.8" fill="#f2f2f2" text-anchor="start" font-weight="bold" textLength="67.60000000000001" lengthAdjust="spacingAndGlyphs">ΔE ITP</text>
<text x="773" y="770.3499999999999" font-size="15.3" fill="#f2f2f2" text-anchor="start" font-weight="normal" textLength="64.5" lengthAdjust="spacingAndGlyphs">3,1394</text>
<text x="873" y="770.3499999999999" font-size="15.3" fill="#f2f2f2" text-anchor="start" font-weight="normal" textLength="64.5" lengthAdjust="spacingAndGlyphs">3,6112</text>
<text x="973" y="770.3499999999999" font-size="15.3" fill="#f2f2f2" text-anchor="start" font-weight="normal" textLength="64.5" lengthAdjust="spacingAndGlyphs">5,1255</text>
<text x="1073" y="770.3499999999999" font-size="15.3" fill="#f2f2f2" text-anchor="start" font-weight="normal" textLength="64.5" lengthAdjust="spacingAndGlyphs">6,0414</text>
<text x="1173" y="770.3499999999999" font-size="15.3" fill="#f2f2f2" text-anchor="start" font-weight="normal" textLength="64.5" lengthAdjust="spacingAndGlyphs">5,3346</text>
<text x="817.5" y="575" font-size="15" fill="#f2f2f2" text-anchor="middle" font-weight="bold" textLength="37.5" lengthAdjust="spacingAndGlyphs">20%</text>
<text x="917.5" y="575" font-size="15" fill="#f2f2f2" text-anchor="middle" font-weight="bold" textLength="37.5" lengthAdjust="spacingAndGlyphs">40%</text>
<text x="1017.5" y="575" font-size="15" fill="#f2f2f2" text-anchor="middle" font-weight="bold" textLength="37.5" lengthAdjust="spacingAndGlyphs">60%</text>
<text x="1117.5" y="575" font-size="15" fill="#f2f2f2" text-anchor="middle" font-weight="bold" textLength="37.5" lengthAdjust="spacingAndGlyphs">80%</text>
<text x="1217.5" y="575" font-size="15" fill="#f2f2f2" text-anchor="middle" font-weight="bold" textLength="48" lengthAdjust="spacingAndGlyphs">100%</text>
<rect x="0" y="798" width="805" height="60" fill="#272727" />
<rect x="805" y="797.5" width="434" height="61" fill="url(#tbar)" />
<path d="M0 798 H37 Q40.5 798 40.5 801.5 V858 H0 Z" fill="url(#btn)"/>
<circle cx="18.4" cy="806.5" r="7" fill="url(#circ)"/>
<polygon points="14,809 22.8,809 18.4,804" fill="#222"/>
<rect x="2.2" y="824.6" width="34" height="29" rx="3" fill="#ffff00"/>
<path d="M50.3 798 H193.6 Q196.6 798 196.6 801 V858 H47.3 V801 Q47.3 798 50.3 798 Z" fill="url(#btn)"/>
<rect x="53.3" y="803.8" width="138.8" height="35.2" rx="3" fill="#c1c39f"/>
<text x="121.94999999999999" y="853.5" font-size="10.8" fill="#1e1e1e" text-anchor="middle" font-weight="normal">20%</text>
<path d="M202.3 798 H345.8 Q348.8 798 348.8 801 V858 H199.3 V801 Q199.3 798 202.3 798 Z" fill="url(#btn)"/>
<rect x="205.3" y="803.8" width="139.0" height="35.2" rx="3" fill="#c3c386"/>
<text x="274.05" y="853.5" font-size="10.8" fill="#1e1e1e" text-anchor="middle" font-weight="normal">40%</text>
<path d="M354.2 798 H497.6 Q500.6 798 500.6 801 V858 H351.2 V801 Q351.2 798 354.2 798 Z" fill="url(#btn)"/>
<rect x="357.2" y="803.8" width="138.90000000000003" height="35.2" rx="3" fill="#c2c166"/>
<text x="425.9" y="853.5" font-size="10.8" fill="#1e1e1e" text-anchor="middle" font-weight="normal">60%</text>
<path d="M505.8 798 H649.3 Q652.3 798 652.3 801 V858 H502.8 V801 Q502.8 798 505.8 798 Z" fill="url(#btn)"/>
<rect x="508.8" y="803.8" width="138.99999999999994" height="35.2" rx="3" fill="#c2c24b"/>
<text x="577.55" y="853.5" font-size="10.8" fill="#1e1e1e" text-anchor="middle" font-weight="normal">80%</text>
<path d="M657 797.5 H802 Q805 797.5 805 800.5 V858 H654 V800.5 Q654 797.5 657 797.5 Z" fill="#1e1e1e"/>
<rect x="659.6" y="803.8" width="140.6" height="35.2" rx="3" fill="#c4c000"/>
<text x="729.5" y="853.5" font-size="10.5" fill="#ffffff" text-anchor="middle" font-weight="bold">100%</text>
<path d="M1241 798 H1283 Q1286 798 1286 801 V858 H1238 V801 Q1238 798 1241 798 Z" fill="url(#btn2)"/>
<line x1="1238" y1="816" x2="1286" y2="816" stroke="#555" stroke-width="1"/>
<circle cx="1262" cy="806.5" r="7" fill="url(#circ)"/>
<polygon points="1257.5,809 1266.5,809 1262,804" fill="#222"/>
<rect x="1247.5" y="823" width="29" height="29" rx="4" fill="#a4a4a4" stroke="#2e2e2e" stroke-width="2.5"/>
<rect x="1249" y="838" width="26" height="12.5" rx="2" fill="#8c8c8c"/>
<rect x="1255.5" y="831" width="13.5" height="14" fill="#1a1a1a"/>
<rect x="1255.5" y="838" width="13.5" height="7" fill="#000"/>
<rect x="1287" y="798" width="266" height="30" fill="url(#btn2)"/>
<line x1="1333.4" y1="798" x2="1333.4" y2="828" stroke="#555" stroke-width="1.2"/>
<line x1="1378.3" y1="798" x2="1378.3" y2="828" stroke="#555" stroke-width="1.2"/>
<line x1="1423.4" y1="798" x2="1423.4" y2="828" stroke="#555" stroke-width="1.2"/>
<line x1="1468.6" y1="798" x2="1468.6" y2="828" stroke="#555" stroke-width="1.2"/>
<line x1="1513.3" y1="798" x2="1513.3" y2="828" stroke="#555" stroke-width="1.2"/>
<circle cx="1310.2" cy="813" r="10" fill="url(#circ)"/>
<circle cx="1355.8" cy="813" r="10" fill="url(#circ)"/>
<circle cx="1400.8" cy="813" r="10" fill="url(#circ)"/>
<circle cx="1446" cy="813" r="10" fill="url(#circ)"/>
<circle cx="1491" cy="813" r="10" fill="url(#circ)"/>
<circle cx="1536" cy="813" r="10" fill="url(#circ)"/>
<rect x="1305.5" y="808.5" width="8.5" height="8.5" fill="#2a2a2a"/>
<polygon points="1352.5,807 1352.5,819 1361.5,813" fill="#2a2a2a"/>
<text x="1400.8" y="817.5" font-size="11" fill="#2a2a2a" text-anchor="middle" font-weight="bold">[··]</text>
<text x="1446" y="818" font-size="17" fill="#2a2a2a" text-anchor="middle" font-weight="bold">∞</text>
<path d="M1485.5 812 A5.5 5.5 0 0 1 1496 810.5 M1496.5 814 A5.5 5.5 0 0 1 1486 815.5" fill="none" stroke="#2a2a2a" stroke-width="2"/>
<rect x="1287" y="829" width="266" height="29" fill="url(#btn2)"/>
<line x1="1423.4" y1="829" x2="1423.4" y2="858" stroke="#555" stroke-width="1.2"/>
<circle cx="1317.8" cy="844.2" r="10" fill="url(#circ)"/>
<circle cx="1531" cy="844.5" r="10" fill="url(#circ)"/>
<path d="M1316 839 L1311.5 844.5 L1316 850 M1321.5 839 L1317 844.5 L1321.5 850" fill="none" stroke="#2a2a2a" stroke-width="1.6"/>
<path d="M1530.5 839 L1535 844.5 L1530.5 850 M1525 839 L1529.5 844.5 L1525 850" fill="none" stroke="#2a2a2a" stroke-width="1.6"/>
<text x="1344.5" y="851.8" font-size="22.5" fill="#2e2e2e" text-anchor="start" font-weight="normal" textLength="51" lengthAdjust="spacingAndGlyphs">Back</text>
<text x="1451.5" y="851.8" font-size="22.5" fill="#2e2e2e" text-anchor="start" font-weight="normal" textLength="51" lengthAdjust="spacingAndGlyphs">Next</text>
<clipPath id="locclip"><path d="M1207.3 502.8 L1207.3 502.8 L1207.3 502.8 L1207.3 502.8 L1207.2 502.7 L1207.2 502.7 L1207.2 502.7 L1207.2 502.8 L1207.1 502.8 L1207.1 502.8 L1207.1 502.8 L1207.1 502.8 L1207.0 502.9 L1207.0 502.9 L1207.0 503.0 L1207.0 503.0 L1206.9 503.0 L1206.9 503.0 L1206.8 503.0 L1206.8 503.0 L1206.8 503.0 L1206.7 503.0 L1206.7 503.0 L1206.6 503.0 L1206.6 503.0 L1206.5 503.0 L1206.5 503.1 L1206.4 503.1 L1206.4 503.1 L1206.4 503.2 L1206.3 503.2 L1206.3 503.2 L1206.2 503.3 L1206.1 503.3 L1206.1 503.3 L1206.0 503.3 L1206.0 503.3 L1205.9 503.3 L1205.8 503.3 L1205.8 503.3 L1205.7 503.3 L1205.6 503.3 L1205.6 503.3 L1205.5 503.3 L1205.4 503.3 L1205.3 503.3 L1205.2 503.3 L1205.1 503.3 L1205.0 503.3 L1204.9 503.3 L1204.9 503.3 L1204.8 503.3 L1204.7 503.3 L1204.6 503.3 L1204.5 503.3 L1204.3 503.3 L1204.2 503.3 L1204.0 503.2 L1203.9 503.2 L1203.7 503.1 L1203.6 503.0 L1203.4 502.9 L1203.2 502.8 L1203.0 502.7 L1202.7 502.5 L1202.4 502.4 L1202.2 502.2 L1201.9 502.0 L1201.5 501.8 L1201.2 501.6 L1200.9 501.3 L1200.5 501.1 L1200.1 500.8 L1199.7 500.5 L1199.4 500.2 L1198.9 499.9 L1198.5 499.6 L1198.1 499.3 L1197.6 498.9 L1197.1 498.5 L1196.6 498.1 L1196.1 497.7 L1195.5 497.2 L1194.9 496.7 L1194.3 496.3 L1193.6 495.7 L1193.0 495.2 L1192.3 494.6 L1191.6 494.0 L1190.8 493.4 L1190.1 492.8 L1189.3 492.2 L1188.6 491.5 L1187.8 490.8 L1186.9 490.1 L1186.1 489.4 L1185.2 488.6 L1184.3 487.8 L1183.4 487.1 L1182.4 486.3 L1181.4 485.5 L1180.4 484.7 L1179.4 483.8 L1178.3 482.9 L1177.1 482.0 L1175.9 481.0 L1174.7 480.0 L1173.4 478.9 L1172.1 477.9 L1170.8 476.8 L1169.4 475.7 L1168.0 474.5 L1166.6 473.3 L1165.1 472.1 L1163.6 470.9 L1162.1 469.6 L1160.5 468.3 L1158.9 467.0 L1157.3 465.6 L1155.6 464.2 L1153.8 462.7 L1152.0 461.1 L1150.2 459.5 L1148.3 457.9 L1146.4 456.2 L1144.5 454.4 L1142.4 452.6 L1140.4 450.6 L1138.2 448.6 L1136.1 446.5 L1133.9 444.5 L1131.7 442.3 L1129.5 440.1 L1127.2 437.8 L1124.7 435.3 L1122.2 432.5 L1119.5 429.5 L1116.6 426.3 L1113.8 423.0 L1110.8 419.6 L1107.7 416.0 L1104.6 412.2 L1101.4 408.2 L1098.0 404.0 L1094.6 399.5 L1091.1 394.9 L1087.6 390.3 L1084.0 385.4 L1080.4 380.5 L1076.7 375.4 L1072.9 370.0 L1069.1 364.4 L1065.2 358.5 L1061.2 352.5 L1057.3 346.4 L1053.3 340.3 L1049.3 334.0 L1045.3 327.5 L1041.3 321.0 L1037.3 314.3 L1033.3 307.5 L1029.3 300.6 L1025.3 293.7 L1021.3 286.9 L1017.4 280.0 L1013.5 273.1 L1009.8 266.2 L1006.1 259.2 L1002.6 252.3 L999.2 245.4 L995.9 238.5 L992.7 231.7 L989.7 225.0 L986.7 218.4 L983.9 211.9 L981.2 205.5 L978.7 199.3 L976.2 193.2 L973.9 187.2 L971.6 181.3 L969.5 175.6 L967.5 170.0 L965.6 164.7 L963.9 159.5 L962.4 154.7 L961.0 150.0 L959.6 145.4 L958.4 140.9 L957.3 136.7 L956.3 132.6 L955.4 128.7 L954.6 125.0 L954.0 121.5 L953.4 118.1 L953.0 114.9 L952.6 111.8 L952.3 108.9 L952.0 106.0 L951.9 103.3 L951.9 100.8 L951.9 98.4 L952.1 96.0 L952.3 93.8 L952.6 91.7 L953.0 89.6 L953.4 87.7 L953.9 85.8 L954.5 84.1 L955.1 82.5 L955.9 80.9 L956.7 79.5 L957.6 78.1 L958.5 76.8 L959.5 75.6 L960.6 74.4 L961.7 73.4 L962.8 72.4 L964.0 71.5 L965.2 70.7 L966.5 70.0 L967.9 69.3 L969.3 68.7 L970.7 68.2 L972.2 67.7 L973.6 67.2 L975.1 66.8 L976.6 66.5 L978.2 66.2 L979.8 66.0 L981.5 65.8 L983.2 65.6 L984.8 65.5 L986.5 65.3 L988.2 65.2 L989.9 65.1 L991.7 65.0 L993.4 65.0 L995.2 64.9 L997.0 64.9 L998.8 64.9 L1000.6 64.9 L1002.3 64.9 L1004.1 64.9 L1005.9 64.9 L1007.6 64.9 L1009.4 64.9 L1011.2 65.0 L1013.0 65.0 L1014.8 65.1 L1016.7 65.1 L1018.5 65.2 L1020.3 65.3 L1022.2 65.3 L1024.0 65.4 L1025.9 65.5 L1027.8 65.6 L1029.7 65.7 L1031.7 65.9 L1033.6 66.0 L1035.6 66.1 L1037.6 66.3 L1039.6 66.4 L1041.6 66.6 L1043.7 66.7 L1045.8 66.9 L1047.9 67.1 L1050.0 67.3 L1052.1 67.4 L1054.3 67.6 L1056.5 67.8 L1058.7 68.0 L1060.9 68.3 L1063.2 68.5 L1065.5 68.7 L1067.8 68.9 L1070.2 69.2 L1072.5 69.4 L1075.0 69.6 L1077.4 69.9 L1079.9 70.1 L1082.4 70.4 L1084.9 70.7 L1087.5 70.9 L1090.1 71.2 L1092.7 71.5 L1095.4 71.8 L1098.1 72.1 L1100.8 72.4 L1103.6 72.7 L1106.4 73.0 L1109.3 73.3 L1112.1 73.6 L1115.0 73.9 L1118.0 74.3 L1121.0 74.6 L1124.0 75.0 L1127.1 75.3 L1130.2 75.6 L1133.3 76.0 L1136.5 76.4 L1139.8 76.7 L1143.0 77.1 L1146.4 77.5 L1149.7 77.8 L1153.1 78.2 L1156.5 78.6 L1160.0 79.0 L1163.5 79.4 L1167.1 79.8 L1170.7 80.2 L1174.3 80.7 L1178.0 81.1 L1181.7 81.5 L1185.4 81.9 L1189.2 82.4 L1193.1 82.8 L1196.9 83.3 L1200.9 83.7 L1204.8 84.2 L1208.8 84.6 L1212.8 85.1 L1216.9 85.5 L1221.0 86.0 L1225.2 86.5 L1229.4 87.0 L1233.6 87.5 L1237.9 88.0 L1242.1 88.5 L1246.5 88.9 L1250.8 89.4 L1255.2 89.9 L1259.6 90.4 L1264.1 91.0 L1268.5 91.5 L1273.0 92.0 L1277.5 92.5 L1282.0 93.0 L1286.6 93.5 L1291.1 94.1 L1295.7 94.6 L1300.3 95.1 L1304.9 95.6 L1309.5 96.2 L1314.0 96.7 L1318.6 97.2 L1323.1 97.7 L1327.5 98.3 L1332.0 98.8 L1336.4 99.3 L1340.8 99.8 L1345.2 100.3 L1349.6 100.8 L1354.0 101.3 L1358.4 101.8 L1362.7 102.3 L1367.1 102.8 L1371.5 103.3 L1375.8 103.8 L1380.0 104.3 L1384.3 104.8 L1388.4 105.2 L1392.5 105.7 L1396.6 106.2 L1400.6 106.6 L1404.5 107.1 L1408.4 107.5 L1412.2 107.9 L1415.9 108.4 L1419.7 108.8 L1423.3 109.2 L1426.9 109.6 L1430.5 110.0 L1434.0 110.4 L1437.4 110.8 L1440.7 111.2 L1444.0 111.6 L1447.3 112.0 L1450.4 112.3 L1453.5 112.7 L1456.6 113.0 L1459.5 113.4 L1462.4 113.7 L1465.2 114.1 L1468.0 114.4 L1470.8 114.7 L1473.4 115.0 L1476.0 115.3 L1478.6 115.6 L1481.0 115.9 L1483.4 116.1 L1485.8 116.4 L1488.1 116.7 L1490.4 116.9 L1492.7 117.2 L1494.8 117.4 L1497.0 117.7 L1499.0 117.9 L1501.1 118.2 L1503.1 118.4 L1505.1 118.6 L1507.0 118.8 L1508.9 119.1 L1510.8 119.3 L1512.6 119.5 L1514.5 119.7 L1516.3 119.9 L1518.0 120.1 L1519.7 120.3 L1521.4 120.5 L1523.0 120.7 L1524.6 120.9 L1526.2 121.0 L1527.7 121.2 L1529.2 121.4 L1530.7 121.6 L1532.1 121.7 L1533.5 121.9 L1534.9 122.1 L1536.2 122.2 L1537.5 122.3 L1538.7 122.5 L1539.9 122.6 L1541.1 122.7 L1542.2 122.9 L1543.4 123.0 L1544.4 123.1 L1545.5 123.2 L1546.5 123.4 L1547.4 123.5 L1548.4 123.6 L1549.3 123.7 L1550.1 123.8 L1551.0 123.9 L1551.8 124.0 L1552.6 124.1 L1553.4 124.2 L1554.2 124.2 L1554.9 124.3 L1555.6 124.4 L1556.3 124.5 L1556.9 124.6 L1557.6 124.6 L1558.1 124.7 L1558.7 124.8 L1559.2 124.8 L1559.7 124.9 L1560.3 124.9 L1560.8 125.0 L1561.4 125.1 L1562.0 125.1 L1562.7 125.2 L1563.4 125.3 L1564.1 125.4 L1564.8 125.5 L1565.4 125.5 L1566.1 125.6 L1566.7 125.7 L1567.2 125.7 L1567.7 125.8 L1568.2 125.9 L1568.6 125.9 L1569.1 126.0 L1569.5 126.0 L1569.9 126.1 L1570.4 126.1 L1570.9 126.2 L1571.4 126.2 L1571.9 126.3 L1572.4 126.3 L1572.8 126.4 L1573.3 126.4 L1573.6 126.5 L1573.9 126.5 Z"/></clipPath>
<g clip-path="url(#locclip)">
<rect x="974.5" y="53.5" width="12.6" height="12.6" fill="#009900"/>
<rect x="986.5" y="53.5" width="12.6" height="12.6" fill="#009900"/>
<rect x="998.5" y="53.5" width="12.6" height="12.6" fill="#009900"/>
<rect x="1010.5" y="53.5" width="12.6" height="12.6" fill="#009900"/>
<rect x="1022.5" y="53.5" width="12.6" height="12.6" fill="#009900"/>
<rect x="950.5" y="65.5" width="12.6" height="12.6" fill="#009909"/>
<rect x="962.5" y="65.5" width="12.6" height="12.6" fill="#009908"/>
<rect x="974.5" y="65.5" width="12.6" height="12.6" fill="#009907"/>
<rect x="986.5" y="65.5" width="12.6" height="12.6" fill="#009905"/>
<rect x="998.5" y="65.5" width="12.6" height="12.6" fill="#009904"/>
<rect x="1010.5" y="65.5" width="12.6" height="12.6" fill="#009903"/>
<rect x="1022.5" y="65.5" width="12.6" height="12.6" fill="#009902"/>
<rect x="1034.5" y="65.5" width="12.6" height="12.6" fill="#009901"/>
<rect x="1046.5" y="65.5" width="12.6" height="12.6" fill="#049900"/>
<rect x="1058.5" y="65.5" width="12.6" height="12.6" fill="#119900"/>
<rect x="1070.5" y="65.5" width="12.6" height="12.6" fill="#209900"/>
<rect x="1082.5" y="65.5" width="12.6" height="12.6" fill="#2f9900"/>
<rect x="1094.5" y="65.5" width="12.6" height="12.6" fill="#3f9900"/>
<rect x="1106.5" y="65.5" width="12.6" height="12.6" fill="#509900"/>
<rect x="1118.5" y="65.5" width="12.6" height="12.6" fill="#629900"/>
<rect x="1130.5" y="65.5" width="12.6" height="12.6" fill="#769900"/>
<rect x="1142.5" y="65.5" width="12.6" height="12.6" fill="#8b9900"/>
<rect x="950.5" y="77.5" width="12.6" height="12.6" fill="#009915"/>
<rect x="962.5" y="77.5" width="12.6" height="12.6" fill="#009914"/>
<rect x="974.5" y="77.5" width="12.6" height="12.6" fill="#009913"/>
<rect x="986.5" y="77.5" width="12.6" height="12.6" fill="#009912"/>
<rect x="998.5" y="77.5" width="12.6" height="12.6" fill="#009911"/>
<rect x="1010.5" y="77.5" width="12.6" height="12.6" fill="#009911"/>
<rect x="1022.5" y="77.5" width="12.6" height="12.6" fill="#009910"/>
<rect x="1034.5" y="77.5" width="12.6" height="12.6" fill="#00990f"/>
<rect x="1046.5" y="77.5" width="12.6" height="12.6" fill="#01990e"/>
<rect x="1058.5" y="77.5" width="12.6" height="12.6" fill="#0f990d"/>
<rect x="1070.5" y="77.5" width="12.6" height="12.6" fill="#1d990b"/>
<rect x="1082.5" y="77.5" width="12.6" height="12.6" fill="#2d990a"/>
<rect x="1094.5" y="77.5" width="12.6" height="12.6" fill="#3e9909"/>
<rect x="1106.5" y="77.5" width="12.6" height="12.6" fill="#4f9907"/>
<rect x="1118.5" y="77.5" width="12.6" height="12.6" fill="#629906"/>
<rect x="1130.5" y="77.5" width="12.6" height="12.6" fill="#779904"/>
<rect x="1142.5" y="77.5" width="12.6" height="12.6" fill="#8c9903"/>
<rect x="1154.5" y="77.5" width="12.6" height="12.6" fill="#998f01"/>
<rect x="1166.5" y="77.5" width="12.6" height="12.6" fill="#997c00"/>
<rect x="1178.5" y="77.5" width="12.6" height="12.6" fill="#996c00"/>
<rect x="1190.5" y="77.5" width="12.6" height="12.6" fill="#995f00"/>
<rect x="1202.5" y="77.5" width="12.6" height="12.6" fill="#995400"/>
<rect x="1214.5" y="77.5" width="12.6" height="12.6" fill="#994b00"/>
<rect x="1226.5" y="77.5" width="12.6" height="12.6" fill="#994300"/>
<rect x="1238.5" y="77.5" width="12.6" height="12.6" fill="#993b00"/>
<rect x="1250.5" y="77.5" width="12.6" height="12.6" fill="#993500"/>
<rect x="950.5" y="89.5" width="12.6" height="12.6" fill="#009921"/>
<rect x="962.5" y="89.5" width="12.6" height="12.6" fill="#009921"/>
<rect x="974.5" y="89.5" width="12.6" height="12.6" fill="#009920"/>
<rect x="986.5" y="89.5" width="12.6" height="12.6" fill="#009920"/>
<rect x="998.5" y="89.5" width="12.6" height="12.6" fill="#00991f"/>
<rect x="1010.5" y="89.5" width="12.6" height="12.6" fill="#00991f"/>
<rect x="1022.5" y="89.5" width="12.6" height="12.6" fill="#00991e"/>
<rect x="1034.5" y="89.5" width="12.6" height="12.6" fill="#00991e"/>
<rect x="1046.5" y="89.5" width="12.6" height="12.6" fill="#00991d"/>
<rect x="1058.5" y="89.5" width="12.6" height="12.6" fill="#0c991c"/>
<rect x="1070.5" y="89.5" width="12.6" height="12.6" fill="#1b991c"/>
<rect x="1082.5" y="89.5" width="12.6" height="12.6" fill="#2b991b"/>
<rect x="1094.5" y="89.5" width="12.6" height="12.6" fill="#3c991a"/>
<rect x="1106.5" y="89.5" width="12.6" height="12.6" fill="#4f9919"/>
<rect x="1118.5" y="89.5" width="12.6" height="12.6" fill="#629918"/>
<rect x="1130.5" y="89.5" width="12.6" height="12.6" fill="#779917"/>
<rect x="1142.5" y="89.5" width="12.6" height="12.6" fill="#8e9916"/>
<rect x="1154.5" y="89.5" width="12.6" height="12.6" fill="#998d13"/>
<rect x="1166.5" y="89.5" width="12.6" height="12.6" fill="#997910"/>
<rect x="1178.5" y="89.5" width="12.6" height="12.6" fill="#996a0d"/>
<rect x="1190.5" y="89.5" width="12.6" height="12.6" fill="#995d0a"/>
<rect x="1202.5" y="89.5" width="12.6" height="12.6" fill="#995108"/>
<rect x="1214.5" y="89.5" width="12.6" height="12.6" fill="#994806"/>
<rect x="1226.5" y="89.5" width="12.6" height="12.6" fill="#994005"/>
<rect x="1238.5" y="89.5" width="12.6" height="12.6" fill="#993903"/>
<rect x="1250.5" y="89.5" width="12.6" height="12.6" fill="#993202"/>
<rect x="1262.5" y="89.5" width="12.6" height="12.6" fill="#992d01"/>
<rect x="1274.5" y="89.5" width="12.6" height="12.6" fill="#992800"/>
<rect x="1286.5" y="89.5" width="12.6" height="12.6" fill="#992300"/>
<rect x="1298.5" y="89.5" width="12.6" height="12.6" fill="#991f00"/>
<rect x="1310.5" y="89.5" width="12.6" height="12.6" fill="#991c00"/>
<rect x="1322.5" y="89.5" width="12.6" height="12.6" fill="#991800"/>
<rect x="1334.5" y="89.5" width="12.6" height="12.6" fill="#991500"/>
<rect x="1346.5" y="89.5" width="12.6" height="12.6" fill="#991200"/>
<rect x="950.5" y="101.5" width="12.6" height="12.6" fill="#00992f"/>
<rect x="962.5" y="101.5" width="12.6" height="12.6" fill="#00992f"/>
<rect x="974.5" y="101.5" width="12.6" height="12.6" fill="#00992e"/>
<rect x="986.5" y="101.5" width="12.6" height="12.6" fill="#00992e"/>
<rect x="998.5" y="101.5" width="12.6" height="12.6" fill="#00992e"/>
<rect x="1010.5" y="101.5" width="12.6" height="12.6" fill="#00992e"/>
<rect x="1022.5" y="101.5" width="12.6" height="12.6" fill="#00992e"/>
<rect x="1034.5" y="101.5" width="12.6" height="12.6" fill="#00992e"/>
<rect x="1046.5" y="101.5" width="12.6" height="12.6" fill="#00992d"/>
<rect x="1058.5" y="101.5" width="12.6" height="12.6" fill="#09992d"/>
<rect x="1070.5" y="101.5" width="12.6" height="12.6" fill="#18992d"/>
<rect x="1082.5" y="101.5" width="12.6" height="12.6" fill="#29992d"/>
<rect x="1094.5" y="101.5" width="12.6" height="12.6" fill="#3b992d"/>
<rect x="1106.5" y="101.5" width="12.6" height="12.6" fill="#4e992c"/>
<rect x="1118.5" y="101.5" width="12.6" height="12.6" fill="#62992c"/>
<rect x="1130.5" y="101.5" width="12.6" height="12.6" fill="#78992c"/>
<rect x="1142.5" y="101.5" width="12.6" height="12.6" fill="#90992b"/>
<rect x="1154.5" y="101.5" width="12.6" height="12.6" fill="#998a27"/>
<rect x="1166.5" y="101.5" width="12.6" height="12.6" fill="#997721"/>
<rect x="1178.5" y="101.5" width="12.6" height="12.6" fill="#99671c"/>
<rect x="1190.5" y="101.5" width="12.6" height="12.6" fill="#995a19"/>
<rect x="1202.5" y="101.5" width="12.6" height="12.6" fill="#994f15"/>
<rect x="1214.5" y="101.5" width="12.6" height="12.6" fill="#994513"/>
<rect x="1226.5" y="101.5" width="12.6" height="12.6" fill="#993d10"/>
<rect x="1238.5" y="101.5" width="12.6" height="12.6" fill="#99360e"/>
<rect x="1250.5" y="101.5" width="12.6" height="12.6" fill="#99300c"/>
<rect x="1262.5" y="101.5" width="12.6" height="12.6" fill="#992a0b"/>
<rect x="1274.5" y="101.5" width="12.6" height="12.6" fill="#992509"/>
<rect x="1286.5" y="101.5" width="12.6" height="12.6" fill="#992108"/>
<rect x="1298.5" y="101.5" width="12.6" height="12.6" fill="#991d07"/>
<rect x="1310.5" y="101.5" width="12.6" height="12.6" fill="#991906"/>
<rect x="1322.5" y="101.5" width="12.6" height="12.6" fill="#991605"/>
<rect x="1334.5" y="101.5" width="12.6" height="12.6" fill="#991304"/>
<rect x="1346.5" y="101.5" width="12.6" height="12.6" fill="#991003"/>
<rect x="1358.5" y="101.5" width="12.6" height="12.6" fill="#990e02"/>
<rect x="1370.5" y="101.5" width="12.6" height="12.6" fill="#990c01"/>
<rect x="1382.5" y="101.5" width="12.6" height="12.6" fill="#990901"/>
<rect x="1394.5" y="101.5" width="12.6" height="12.6" fill="#990700"/>
<rect x="1406.5" y="101.5" width="12.6" height="12.6" fill="#990500"/>
<rect x="1418.5" y="101.5" width="12.6" height="12.6" fill="#990400"/>
<rect x="1430.5" y="101.5" width="12.6" height="12.6" fill="#990200"/>
<rect x="1442.5" y="101.5" width="12.6" height="12.6" fill="#990000"/>
<rect x="1454.5" y="101.5" width="12.6" height="12.6" fill="#990000"/>
<rect x="950.5" y="113.5" width="12.6" height="12.6" fill="#00993d"/>
<rect x="962.5" y="113.5" width="12.6" height="12.6" fill="#00993d"/>
<rect x="974.5" y="113.5" width="12.6" height="12.6" fill="#00993d"/>
<rect x="986.5" y="113.5" width="12.6" height="12.6" fill="#00993e"/>
<rect x="998.5" y="113.5" width="12.6" height="12.6" fill="#00993e"/>
<rect x="1010.5" y="113.5" width="12.6" height="12.6" fill="#00993e"/>
<rect x="1022.5" y="113.5" width="12.6" height="12.6" fill="#00993e"/>
<rect x="1034.5" y="113.5" width="12.6" height="12.6" fill="#00993f"/>
<rect x="1046.5" y="113.5" width="12.6" height="12.6" fill="#00993f"/>
<rect x="1058.5" y="113.5" width="12.6" height="12.6" fill="#05993f"/>
<rect x="1070.5" y="113.5" width="12.6" height="12.6" fill="#159940"/>
<rect x="1082.5" y="113.5" width="12.6" height="12.6" fill="#269940"/>
<rect x="1094.5" y="113.5" width="12.6" height="12.6" fill="#399941"/>
<rect x="1106.5" y="113.5" width="12.6" height="12.6" fill="#4d9941"/>
<rect x="1118.5" y="113.5" width="12.6" height="12.6" fill="#629942"/>
<rect x="1130.5" y="113.5" width="12.6" height="12.6" fill="#799942"/>
<rect x="1142.5" y="113.5" width="12.6" height="12.6" fill="#929943"/>
<rect x="1154.5" y="113.5" width="12.6" height="12.6" fill="#99873c"/>
<rect x="1166.5" y="113.5" width="12.6" height="12.6" fill="#997434"/>
<rect x="1178.5" y="113.5" width="12.6" height="12.6" fill="#99642d"/>
<rect x="1190.5" y="113.5" width="12.6" height="12.6" fill="#995728"/>
<rect x="1202.5" y="113.5" width="12.6" height="12.6" fill="#994c23"/>
<rect x="1214.5" y="113.5" width="12.6" height="12.6" fill="#99421f"/>
<rect x="1226.5" y="113.5" width="12.6" height="12.6" fill="#993a1c"/>
<rect x="1238.5" y="113.5" width="12.6" height="12.6" fill="#993319"/>
<rect x="1250.5" y="113.5" width="12.6" height="12.6" fill="#992d16"/>
<rect x="1262.5" y="113.5" width="12.6" height="12.6" fill="#992814"/>
<rect x="1274.5" y="113.5" width="12.6" height="12.6" fill="#992312"/>
<rect x="1286.5" y="113.5" width="12.6" height="12.6" fill="#991f10"/>
<rect x="1298.5" y="113.5" width="12.6" height="12.6" fill="#991b0f"/>
<rect x="1310.5" y="113.5" width="12.6" height="12.6" fill="#99170d"/>
<rect x="1322.5" y="113.5" width="12.6" height="12.6" fill="#99140c"/>
<rect x="1334.5" y="113.5" width="12.6" height="12.6" fill="#99110b"/>
<rect x="1346.5" y="113.5" width="12.6" height="12.6" fill="#990e0a"/>
<rect x="1358.5" y="113.5" width="12.6" height="12.6" fill="#990c09"/>
<rect x="1370.5" y="113.5" width="12.6" height="12.6" fill="#990a08"/>
<rect x="1382.5" y="113.5" width="12.6" height="12.6" fill="#990707"/>
<rect x="1394.5" y="113.5" width="12.6" height="12.6" fill="#990506"/>
<rect x="1406.5" y="113.5" width="12.6" height="12.6" fill="#990405"/>
<rect x="1418.5" y="113.5" width="12.6" height="12.6" fill="#990204"/>
<rect x="1430.5" y="113.5" width="12.6" height="12.6" fill="#990004"/>
<rect x="1442.5" y="113.5" width="12.6" height="12.6" fill="#990003"/>
<rect x="1454.5" y="113.5" width="12.6" height="12.6" fill="#990003"/>
<rect x="1466.5" y="113.5" width="12.6" height="12.6" fill="#990002"/>
<rect x="1478.5" y="113.5" width="12.6" height="12.6" fill="#990001"/>
<rect x="1490.5" y="113.5" width="12.6" height="12.6" fill="#990001"/>
<rect x="1502.5" y="113.5" width="12.6" height="12.6" fill="#990001"/>
<rect x="1514.5" y="113.5" width="12.6" height="12.6" fill="#990000"/>
<rect x="1526.5" y="113.5" width="12.6" height="12.6" fill="#990000"/>
<rect x="1538.5" y="113.5" width="12.6" height="12.6" fill="#990000"/>
<rect x="950.5" y="125.5" width="12.6" height="12.6" fill="#00994c"/>
<rect x="962.5" y="125.5" width="12.6" height="12.6" fill="#00994c"/>
<rect x="974.5" y="125.5" width="12.6" height="12.6" fill="#00994d"/>
<rect x="986.5" y="125.5" width="12.6" height="12.6" fill="#00994e"/>
<rect x="998.5" y="125.5" width="12.6" height="12.6" fill="#00994e"/>
<rect x="1010.5" y="125.5" width="12.6" height="12.6" fill="#00994f"/>
<rect x="1022.5" y="125.5" width="12.6" height="12.6" fill="#009950"/>
<rect x="1034.5" y="125.5" width="12.6" height="12.6" fill="#009951"/>
<rect x="1046.5" y="125.5" width="12.6" height="12.6" fill="#009952"/>
<rect x="1058.5" y="125.5" width="12.6" height="12.6" fill="#029953"/>
<rect x="1070.5" y="125.5" width="12.6" height="12.6" fill="#129954"/>
<rect x="1082.5" y="125.5" width="12.6" height="12.6" fill="#249955"/>
<rect x="1094.5" y="125.5" width="12.6" height="12.6" fill="#379956"/>
<rect x="1106.5" y="125.5" width="12.6" height="12.6" fill="#4c9958"/>
<rect x="1118.5" y="125.5" width="12.6" height="12.6" fill="#629959"/>
<rect x="1130.5" y="125.5" width="12.6" height="12.6" fill="#7a995b"/>
<rect x="1142.5" y="125.5" width="12.6" height="12.6" fill="#94995c"/>
<rect x="1154.5" y="125.5" width="12.6" height="12.6" fill="#998452"/>
<rect x="1166.5" y="125.5" width="12.6" height="12.6" fill="#997147"/>
<rect x="1178.5" y="125.5" width="12.6" height="12.6" fill="#99613e"/>
<rect x="1190.5" y="125.5" width="12.6" height="12.6" fill="#995337"/>
<rect x="1202.5" y="125.5" width="12.6" height="12.6" fill="#994931"/>
<rect x="1214.5" y="125.5" width="12.6" height="12.6" fill="#993f2c"/>
<rect x="1226.5" y="125.5" width="12.6" height="12.6" fill="#993728"/>
<rect x="1238.5" y="125.5" width="12.6" height="12.6" fill="#993024"/>
<rect x="1250.5" y="125.5" width="12.6" height="12.6" fill="#992a21"/>
<rect x="1262.5" y="125.5" width="12.6" height="12.6" fill="#99251e"/>
<rect x="1274.5" y="125.5" width="12.6" height="12.6" fill="#99201b"/>
<rect x="1286.5" y="125.5" width="12.6" height="12.6" fill="#991c19"/>
<rect x="1298.5" y="125.5" width="12.6" height="12.6" fill="#991817"/>
<rect x="1310.5" y="125.5" width="12.6" height="12.6" fill="#991515"/>
<rect x="1322.5" y="125.5" width="12.6" height="12.6" fill="#991213"/>
<rect x="1334.5" y="125.5" width="12.6" height="12.6" fill="#990f12"/>
<rect x="1346.5" y="125.5" width="12.6" height="12.6" fill="#990c10"/>
<rect x="1358.5" y="125.5" width="12.6" height="12.6" fill="#990a0f"/>
<rect x="1370.5" y="125.5" width="12.6" height="12.6" fill="#99070e"/>
<rect x="1382.5" y="125.5" width="12.6" height="12.6" fill="#99050d"/>
<rect x="1394.5" y="125.5" width="12.6" height="12.6" fill="#99030c"/>
<rect x="1406.5" y="125.5" width="12.6" height="12.6" fill="#99020b"/>
<rect x="1418.5" y="125.5" width="12.6" height="12.6" fill="#99000a"/>
<rect x="1430.5" y="125.5" width="12.6" height="12.6" fill="#990009"/>
<rect x="1442.5" y="125.5" width="12.6" height="12.6" fill="#990008"/>
<rect x="1454.5" y="125.5" width="12.6" height="12.6" fill="#990008"/>
<rect x="1466.5" y="125.5" width="12.6" height="12.6" fill="#990007"/>
<rect x="1478.5" y="125.5" width="12.6" height="12.6" fill="#990006"/>
<rect x="1490.5" y="125.5" width="12.6" height="12.6" fill="#990006"/>
<rect x="1502.5" y="125.5" width="12.6" height="12.6" fill="#990005"/>
<rect x="1514.5" y="125.5" width="12.6" height="12.6" fill="#990004"/>
<rect x="1526.5" y="125.5" width="12.6" height="12.6" fill="#990004"/>
<rect x="1538.5" y="125.5" width="12.6" height="12.6" fill="#990003"/>
<rect x="950.5" y="137.5" width="12.6" height="12.6" fill="#00995c"/>
<rect x="962.5" y="137.5" width="12.6" height="12.6" fill="#00995d"/>
<rect x="974.5" y="137.5" width="12.6" height="12.6" fill="#00995e"/>
<rect x="986.5" y="137.5" width="12.6" height="12.6" fill="#00995f"/>
<rect x="998.5" y="137.5" width="12.6" height="12.6" fill="#009960"/>
<rect x="1010.5" y="137.5" width="12.6" height="12.6" fill="#009962"/>
<rect x="1022.5" y="137.5" width="12.6" height="12.6" fill="#009963"/>
<rect x="1034.5" y="137.5" width="12.6" height="12.6" fill="#009965"/>
<rect x="1046.5" y="137.5" width="12.6" height="12.6" fill="#009966"/>
<rect x="1058.5" y="137.5" width="12.6" height="12.6" fill="#009968"/>
<rect x="1070.5" y="137.5" width="12.6" height="12.6" fill="#0f996a"/>
<rect x="1082.5" y="137.5" width="12.6" height="12.6" fill="#21996c"/>
<rect x="1094.5" y="137.5" width="12.6" height="12.6" fill="#35996e"/>
<rect x="1106.5" y="137.5" width="12.6" height="12.6" fill="#4b9970"/>
<rect x="1118.5" y="137.5" width="12.6" height="12.6" fill="#629973"/>
<rect x="1130.5" y="137.5" width="12.6" height="12.6" fill="#7b9976"/>
<rect x="1142.5" y="137.5" width="12.6" height="12.6" fill="#979979"/>
<rect x="1154.5" y="137.5" width="12.6" height="12.6" fill="#998169"/>
<rect x="1166.5" y="137.5" width="12.6" height="12.6" fill="#996d5b"/>
<rect x="1178.5" y="137.5" width="12.6" height="12.6" fill="#995d50"/>
<rect x="1190.5" y="137.5" width="12.6" height="12.6" fill="#995047"/>
<rect x="1202.5" y="137.5" width="12.6" height="12.6" fill="#994540"/>
<rect x="1214.5" y="137.5" width="12.6" height="12.6" fill="#993c3a"/>
<rect x="1226.5" y="137.5" width="12.6" height="12.6" fill="#993434"/>
<rect x="1238.5" y="137.5" width="12.6" height="12.6" fill="#992e30"/>
<rect x="1250.5" y="137.5" width="12.6" height="12.6" fill="#99282c"/>
<rect x="1262.5" y="137.5" width="12.6" height="12.6" fill="#992228"/>
<rect x="1274.5" y="137.5" width="12.6" height="12.6" fill="#991e25"/>
<rect x="1286.5" y="137.5" width="12.6" height="12.6" fill="#991a22"/>
<rect x="1298.5" y="137.5" width="12.6" height="12.6" fill="#991620"/>
<rect x="1310.5" y="137.5" width="12.6" height="12.6" fill="#99121d"/>
<rect x="1322.5" y="137.5" width="12.6" height="12.6" fill="#990f1b"/>
<rect x="1334.5" y="137.5" width="12.6" height="12.6" fill="#990d19"/>
<rect x="1346.5" y="137.5" width="12.6" height="12.6" fill="#990a18"/>
<rect x="1358.5" y="137.5" width="12.6" height="12.6" fill="#990816"/>
<rect x="1370.5" y="137.5" width="12.6" height="12.6" fill="#990514"/>
<rect x="1382.5" y="137.5" width="12.6" height="12.6" fill="#990313"/>
<rect x="1394.5" y="137.5" width="12.6" height="12.6" fill="#990212"/>
<rect x="1406.5" y="137.5" width="12.6" height="12.6" fill="#990011"/>
<rect x="1418.5" y="137.5" width="12.6" height="12.6" fill="#99000f"/>
<rect x="1430.5" y="137.5" width="12.6" height="12.6" fill="#99000e"/>
<rect x="1442.5" y="137.5" width="12.6" height="12.6" fill="#99000d"/>
<rect x="1454.5" y="137.5" width="12.6" height="12.6" fill="#99000d"/>
<rect x="1466.5" y="137.5" width="12.6" height="12.6" fill="#99000c"/>
<rect x="1478.5" y="137.5" width="12.6" height="12.6" fill="#99000b"/>
<rect x="1490.5" y="137.5" width="12.6" height="12.6" fill="#99000a"/>
<rect x="1502.5" y="137.5" width="12.6" height="12.6" fill="#990009"/>
<rect x="1514.5" y="137.5" width="12.6" height="12.6" fill="#990009"/>
<rect x="1526.5" y="137.5" width="12.6" height="12.6" fill="#990008"/>
<rect x="1538.5" y="137.5" width="12.6" height="12.6" fill="#990007"/>
<rect x="950.5" y="149.5" width="12.6" height="12.6" fill="#00996c"/>
<rect x="962.5" y="149.5" width="12.6" height="12.6" fill="#00996e"/>
<rect x="974.5" y="149.5" width="12.6" height="12.6" fill="#009970"/>
<rect x="986.5" y="149.5" width="12.6" height="12.6" fill="#009971"/>
<rect x="998.5" y="149.5" width="12.6" height="12.6" fill="#009973"/>
<rect x="1010.5" y="149.5" width="12.6" height="12.6" fill="#009975"/>
<rect x="1022.5" y="149.5" width="12.6" height="12.6" fill="#009977"/>
<rect x="1034.5" y="149.5" width="12.6" height="12.6" fill="#00997a"/>
<rect x="1046.5" y="149.5" width="12.6" height="12.6" fill="#00997c"/>
<rect x="1058.5" y="149.5" width="12.6" height="12.6" fill="#00997f"/>
<rect x="1070.5" y="149.5" width="12.6" height="12.6" fill="#0b9982"/>
<rect x="1082.5" y="149.5" width="12.6" height="12.6" fill="#1e9985"/>
<rect x="1094.5" y="149.5" width="12.6" height="12.6" fill="#339988"/>
<rect x="1106.5" y="149.5" width="12.6" height="12.6" fill="#49998b"/>
<rect x="1118.5" y="149.5" width="12.6" height="12.6" fill="#62998f"/>
<rect x="1130.5" y="149.5" width="12.6" height="12.6" fill="#7c9994"/>
<rect x="1142.5" y="149.5" width="12.6" height="12.6" fill="#999998"/>
<rect x="1154.5" y="149.5" width="12.6" height="12.6" fill="#997e82"/>
<rect x="1166.5" y="149.5" width="12.6" height="12.6" fill="#996a71"/>
<rect x="1178.5" y="149.5" width="12.6" height="12.6" fill="#995a63"/>
<rect x="1190.5" y="149.5" width="12.6" height="12.6" fill="#994d58"/>
<rect x="1202.5" y="149.5" width="12.6" height="12.6" fill="#99424f"/>
<rect x="1214.5" y="149.5" width="12.6" height="12.6" fill="#993948"/>
<rect x="1226.5" y="149.5" width="12.6" height="12.6" fill="#993141"/>
<rect x="1238.5" y="149.5" width="12.6" height="12.6" fill="#992a3c"/>
<rect x="1250.5" y="149.5" width="12.6" height="12.6" fill="#992537"/>
<rect x="1262.5" y="149.5" width="12.6" height="12.6" fill="#991f33"/>
<rect x="1274.5" y="149.5" width="12.6" height="12.6" fill="#991b2f"/>
<rect x="1286.5" y="149.5" width="12.6" height="12.6" fill="#99172b"/>
<rect x="1298.5" y="149.5" width="12.6" height="12.6" fill="#991328"/>
<rect x="1310.5" y="149.5" width="12.6" height="12.6" fill="#991026"/>
<rect x="1322.5" y="149.5" width="12.6" height="12.6" fill="#990d23"/>
<rect x="1334.5" y="149.5" width="12.6" height="12.6" fill="#990a21"/>
<rect x="1346.5" y="149.5" width="12.6" height="12.6" fill="#99081f"/>
<rect x="1358.5" y="149.5" width="12.6" height="12.6" fill="#99051d"/>
<rect x="1370.5" y="149.5" width="12.6" height="12.6" fill="#99031b"/>
<rect x="1382.5" y="149.5" width="12.6" height="12.6" fill="#990119"/>
<rect x="1394.5" y="149.5" width="12.6" height="12.6" fill="#990018"/>
<rect x="1406.5" y="149.5" width="12.6" height="12.6" fill="#990016"/>
<rect x="1418.5" y="149.5" width="12.6" height="12.6" fill="#990015"/>
<rect x="1430.5" y="149.5" width="12.6" height="12.6" fill="#990014"/>
<rect x="1442.5" y="149.5" width="12.6" height="12.6" fill="#990013"/>
<rect x="1454.5" y="149.5" width="12.6" height="12.6" fill="#990012"/>
<rect x="1466.5" y="149.5" width="12.6" height="12.6" fill="#990011"/>
<rect x="1478.5" y="149.5" width="12.6" height="12.6" fill="#990010"/>
<rect x="1490.5" y="149.5" width="12.6" height="12.6" fill="#99000f"/>
<rect x="1502.5" y="149.5" width="12.6" height="12.6" fill="#99000e"/>
<rect x="1514.5" y="149.5" width="12.6" height="12.6" fill="#99000d"/>
<rect x="1526.5" y="149.5" width="12.6" height="12.6" fill="#99000c"/>
<rect x="1538.5" y="149.5" width="12.6" height="12.6" fill="#99000c"/>
<rect x="962.5" y="161.5" width="12.6" height="12.6" fill="#009980"/>
<rect x="974.5" y="161.5" width="12.6" height="12.6" fill="#009983"/>
<rect x="986.5" y="161.5" width="12.6" height="12.6" fill="#009985"/>
<rect x="998.5" y="161.5" width="12.6" height="12.6" fill="#009988"/>
<rect x="1010.5" y="161.5" width="12.6" height="12.6" fill="#00998a"/>
<rect x="1022.5" y="161.5" width="12.6" height="12.6" fill="#00998d"/>
<rect x="1034.5" y="161.5" width="12.6" height="12.6" fill="#009991"/>
<rect x="1046.5" y="161.5" width="12.6" height="12.6" fill="#009994"/>
<rect x="1058.5" y="161.5" width="12.6" height="12.6" fill="#009998"/>
<rect x="1070.5" y="161.5" width="12.6" height="12.6" fill="#079799"/>
<rect x="1082.5" y="161.5" width="12.6" height="12.6" fill="#1a9399"/>
<rect x="1094.5" y="161.5" width="12.6" height="12.6" fill="#2d8f99"/>
<rect x="1106.5" y="161.5" width="12.6" height="12.6" fill="#418a99"/>
<rect x="1118.5" y="161.5" width="12.6" height="12.6" fill="#558699"/>
<rect x="1130.5" y="161.5" width="12.6" height="12.6" fill="#6a8299"/>
<rect x="1142.5" y="161.5" width="12.6" height="12.6" fill="#807d99"/>
<rect x="1154.5" y="161.5" width="12.6" height="12.6" fill="#967899"/>
<rect x="1166.5" y="161.5" width="12.6" height="12.6" fill="#996688"/>
<rect x="1178.5" y="161.5" width="12.6" height="12.6" fill="#995677"/>
<rect x="1190.5" y="161.5" width="12.6" height="12.6" fill="#99496a"/>
<rect x="1202.5" y="161.5" width="12.6" height="12.6" fill="#993f5f"/>
<rect x="1214.5" y="161.5" width="12.6" height="12.6" fill="#993656"/>
<rect x="1226.5" y="161.5" width="12.6" height="12.6" fill="#992e4f"/>
<rect x="1238.5" y="161.5" width="12.6" height="12.6" fill="#992748"/>
<rect x="1250.5" y="161.5" width="12.6" height="12.6" fill="#992242"/>
<rect x="1262.5" y="161.5" width="12.6" height="12.6" fill="#991d3d"/>
<rect x="1274.5" y="161.5" width="12.6" height="12.6" fill="#991839"/>
<rect x="1286.5" y="161.5" width="12.6" height="12.6" fill="#991435"/>
<rect x="1298.5" y="161.5" width="12.6" height="12.6" fill="#991131"/>
<rect x="1310.5" y="161.5" width="12.6" height="12.6" fill="#990d2e"/>
<rect x="1322.5" y="161.5" width="12.6" height="12.6" fill="#990a2b"/>
<rect x="1334.5" y="161.5" width="12.6" height="12.6" fill="#990828"/>
<rect x="1346.5" y="161.5" width="12.6" height="12.6" fill="#990526"/>
<rect x="1358.5" y="161.5" width="12.6" height="12.6" fill="#990324"/>
<rect x="1370.5" y="161.5" width="12.6" height="12.6" fill="#990122"/>
<rect x="1382.5" y="161.5" width="12.6" height="12.6" fill="#990020"/>
<rect x="1394.5" y="161.5" width="12.6" height="12.6" fill="#99001e"/>
<rect x="1406.5" y="161.5" width="12.6" height="12.6" fill="#99001c"/>
<rect x="1418.5" y="161.5" width="12.6" height="12.6" fill="#99001b"/>
<rect x="1430.5" y="161.5" width="12.6" height="12.6" fill="#990019"/>
<rect x="1442.5" y="161.5" width="12.6" height="12.6" fill="#990018"/>
<rect x="1454.5" y="161.5" width="12.6" height="12.6" fill="#990017"/>
<rect x="1466.5" y="161.5" width="12.6" height="12.6" fill="#990016"/>
<rect x="1478.5" y="161.5" width="12.6" height="12.6" fill="#990015"/>
<rect x="1490.5" y="161.5" width="12.6" height="12.6" fill="#990014"/>
<rect x="1502.5" y="161.5" width="12.6" height="12.6" fill="#990013"/>
<rect x="1514.5" y="161.5" width="12.6" height="12.6" fill="#990012"/>
<rect x="1526.5" y="161.5" width="12.6" height="12.6" fill="#990011"/>
<rect x="1538.5" y="161.5" width="12.6" height="12.6" fill="#990010"/>
<rect x="962.5" y="173.5" width="12.6" height="12.6" fill="#009994"/>
<rect x="974.5" y="173.5" width="12.6" height="12.6" fill="#009997"/>
<rect x="986.5" y="173.5" width="12.6" height="12.6" fill="#009899"/>
<rect x="998.5" y="173.5" width="12.6" height="12.6" fill="#009499"/>
<rect x="1010.5" y="173.5" width="12.6" height="12.6" fill="#009199"/>
<rect x="1022.5" y="173.5" width="12.6" height="12.6" fill="#008e99"/>
<rect x="1034.5" y="173.5" width="12.6" height="12.6" fill="#008a99"/>
<rect x="1046.5" y="173.5" width="12.6" height="12.6" fill="#008799"/>
<rect x="1058.5" y="173.5" width="12.6" height="12.6" fill="#008399"/>
<rect x="1070.5" y="173.5" width="12.6" height="12.6" fill="#027f99"/>
<rect x="1082.5" y="173.5" width="12.6" height="12.6" fill="#137c99"/>
<rect x="1094.5" y="173.5" width="12.6" height="12.6" fill="#247899"/>
<rect x="1106.5" y="173.5" width="12.6" height="12.6" fill="#357499"/>
<rect x="1118.5" y="173.5" width="12.6" height="12.6" fill="#477099"/>
<rect x="1130.5" y="173.5" width="12.6" height="12.6" fill="#596c99"/>
<rect x="1142.5" y="173.5" width="12.6" height="12.6" fill="#6c6799"/>
<rect x="1154.5" y="173.5" width="12.6" height="12.6" fill="#7f6399"/>
<rect x="1166.5" y="173.5" width="12.6" height="12.6" fill="#935e99"/>
<rect x="1178.5" y="173.5" width="12.6" height="12.6" fill="#99528c"/>
<rect x="1190.5" y="173.5" width="12.6" height="12.6" fill="#99457d"/>
<rect x="1202.5" y="173.5" width="12.6" height="12.6" fill="#993b70"/>
<rect x="1214.5" y="173.5" width="12.6" height="12.6" fill="#993266"/>
<rect x="1226.5" y="173.5" width="12.6" height="12.6" fill="#992a5d"/>
<rect x="1238.5" y="173.5" width="12.6" height="12.6" fill="#992455"/>
<rect x="1250.5" y="173.5" width="12.6" height="12.6" fill="#991e4e"/>
<rect x="1262.5" y="173.5" width="12.6" height="12.6" fill="#991a48"/>
<rect x="1274.5" y="173.5" width="12.6" height="12.6" fill="#991543"/>
<rect x="1286.5" y="173.5" width="12.6" height="12.6" fill="#99113f"/>
<rect x="1298.5" y="173.5" width="12.6" height="12.6" fill="#990e3a"/>
<rect x="1310.5" y="173.5" width="12.6" height="12.6" fill="#990b37"/>
<rect x="1322.5" y="173.5" width="12.6" height="12.6" fill="#990833"/>
<rect x="1334.5" y="173.5" width="12.6" height="12.6" fill="#990530"/>
<rect x="1346.5" y="173.5" width="12.6" height="12.6" fill="#99032d"/>
<rect x="1358.5" y="173.5" width="12.6" height="12.6" fill="#99012b"/>
<rect x="1370.5" y="173.5" width="12.6" height="12.6" fill="#990029"/>
<rect x="1382.5" y="173.5" width="12.6" height="12.6" fill="#990026"/>
<rect x="1394.5" y="173.5" width="12.6" height="12.6" fill="#990024"/>
<rect x="1406.5" y="173.5" width="12.6" height="12.6" fill="#990022"/>
<rect x="1418.5" y="173.5" width="12.6" height="12.6" fill="#990021"/>
<rect x="1430.5" y="173.5" width="12.6" height="12.6" fill="#99001f"/>
<rect x="1442.5" y="173.5" width="12.6" height="12.6" fill="#99001e"/>
<rect x="1454.5" y="173.5" width="12.6" height="12.6" fill="#99001c"/>
<rect x="1466.5" y="173.5" width="12.6" height="12.6" fill="#99001b"/>
<rect x="1478.5" y="173.5" width="12.6" height="12.6" fill="#99001a"/>
<rect x="1490.5" y="173.5" width="12.6" height="12.6" fill="#990018"/>
<rect x="1502.5" y="173.5" width="12.6" height="12.6" fill="#990017"/>
<rect x="1514.5" y="173.5" width="12.6" height="12.6" fill="#990016"/>
<rect x="1526.5" y="173.5" width="12.6" height="12.6" fill="#990015"/>
<rect x="962.5" y="185.5" width="12.6" height="12.6" fill="#008a99"/>
<rect x="974.5" y="185.5" width="12.6" height="12.6" fill="#008799"/>
<rect x="986.5" y="185.5" width="12.6" height="12.6" fill="#008499"/>
<rect x="998.5" y="185.5" width="12.6" height="12.6" fill="#008199"/>
<rect x="1010.5" y="185.5" width="12.6" height="12.6" fill="#007e99"/>
<rect x="1022.5" y="185.5" width="12.6" height="12.6" fill="#007b99"/>
<rect x="1034.5" y="185.5" width="12.6" height="12.6" fill="#007799"/>
<rect x="1046.5" y="185.5" width="12.6" height="12.6" fill="#007499"/>
<rect x="1058.5" y="185.5" width="12.6" height="12.6" fill="#007199"/>
<rect x="1070.5" y="185.5" width="12.6" height="12.6" fill="#006d99"/>
<rect x="1082.5" y="185.5" width="12.6" height="12.6" fill="#0d6999"/>
<rect x="1094.5" y="185.5" width="12.6" height="12.6" fill="#1d6699"/>
<rect x="1106.5" y="185.5" width="12.6" height="12.6" fill="#2c6299"/>
<rect x="1118.5" y="185.5" width="12.6" height="12.6" fill="#3c5e99"/>
<rect x="1130.5" y="185.5" width="12.6" height="12.6" fill="#4c5a99"/>
<rect x="1142.5" y="185.5" width="12.6" height="12.6" fill="#5c5699"/>
<rect x="1154.5" y="185.5" width="12.6" height="12.6" fill="#6d5299"/>
<rect x="1166.5" y="185.5" width="12.6" height="12.6" fill="#7e4e99"/>
<rect x="1178.5" y="185.5" width="12.6" height="12.6" fill="#904a99"/>
<rect x="1190.5" y="185.5" width="12.6" height="12.6" fill="#994290"/>
<rect x="1202.5" y="185.5" width="12.6" height="12.6" fill="#993782"/>
<rect x="1214.5" y="185.5" width="12.6" height="12.6" fill="#992e75"/>
<rect x="1226.5" y="185.5" width="12.6" height="12.6" fill="#99276b"/>
<rect x="1238.5" y="185.5" width="12.6" height="12.6" fill="#992162"/>
<rect x="1250.5" y="185.5" width="12.6" height="12.6" fill="#991b5a"/>
<rect x="1262.5" y="185.5" width="12.6" height="12.6" fill="#991654"/>
<rect x="1274.5" y="185.5" width="12.6" height="12.6" fill="#99124e"/>
<rect x="1286.5" y="185.5" width="12.6" height="12.6" fill="#990e49"/>
<rect x="1298.5" y="185.5" width="12.6" height="12.6" fill="#990b44"/>
<rect x="1310.5" y="185.5" width="12.6" height="12.6" fill="#990840"/>
<rect x="1322.5" y="185.5" width="12.6" height="12.6" fill="#99053c"/>
<rect x="1334.5" y="185.5" width="12.6" height="12.6" fill="#990338"/>
<rect x="1346.5" y="185.5" width="12.6" height="12.6" fill="#990135"/>
<rect x="1358.5" y="185.5" width="12.6" height="12.6" fill="#990032"/>
<rect x="1370.5" y="185.5" width="12.6" height="12.6" fill="#990030"/>
<rect x="1382.5" y="185.5" width="12.6" height="12.6" fill="#99002d"/>
<rect x="1394.5" y="185.5" width="12.6" height="12.6" fill="#99002b"/>
<rect x="1406.5" y="185.5" width="12.6" height="12.6" fill="#990029"/>
<rect x="1418.5" y="185.5" width="12.6" height="12.6" fill="#990027"/>
<rect x="1430.5" y="185.5" width="12.6" height="12.6" fill="#990025"/>
<rect x="1442.5" y="185.5" width="12.6" height="12.6" fill="#990023"/>
<rect x="1454.5" y="185.5" width="12.6" height="12.6" fill="#990021"/>
<rect x="1466.5" y="185.5" width="12.6" height="12.6" fill="#990020"/>
<rect x="1478.5" y="185.5" width="12.6" height="12.6" fill="#99001f"/>
<rect x="1490.5" y="185.5" width="12.6" height="12.6" fill="#99001d"/>
<rect x="1502.5" y="185.5" width="12.6" height="12.6" fill="#99001c"/>
<rect x="1514.5" y="185.5" width="12.6" height="12.6" fill="#99001b"/>
<rect x="974.5" y="197.5" width="12.6" height="12.6" fill="#007799"/>
<rect x="986.5" y="197.5" width="12.6" height="12.6" fill="#007499"/>
<rect x="998.5" y="197.5" width="12.6" height="12.6" fill="#007199"/>
<rect x="1010.5" y="197.5" width="12.6" height="12.6" fill="#006e99"/>
<rect x="1022.5" y="197.5" width="12.6" height="12.6" fill="#006b99"/>
<rect x="1034.5" y="197.5" width="12.6" height="12.6" fill="#006899"/>
<rect x="1046.5" y="197.5" width="12.6" height="12.6" fill="#006599"/>
<rect x="1058.5" y="197.5" width="12.6" height="12.6" fill="#006199"/>
<rect x="1070.5" y="197.5" width="12.6" height="12.6" fill="#005e99"/>
<rect x="1082.5" y="197.5" width="12.6" height="12.6" fill="#095b99"/>
<rect x="1094.5" y="197.5" width="12.6" height="12.6" fill="#175799"/>
<rect x="1106.5" y="197.5" width="12.6" height="12.6" fill="#255499"/>
<rect x="1118.5" y="197.5" width="12.6" height="12.6" fill="#335099"/>
<rect x="1130.5" y="197.5" width="12.6" height="12.6" fill="#414c99"/>
<rect x="1142.5" y="197.5" width="12.6" height="12.6" fill="#504999"/>
<rect x="1154.5" y="197.5" width="12.6" height="12.6" fill="#5f4599"/>
<rect x="1166.5" y="197.5" width="12.6" height="12.6" fill="#6e4199"/>
<rect x="1178.5" y="197.5" width="12.6" height="12.6" fill="#7e3d99"/>
<rect x="1190.5" y="197.5" width="12.6" height="12.6" fill="#8e3999"/>
<rect x="1202.5" y="197.5" width="12.6" height="12.6" fill="#993394"/>
<rect x="1214.5" y="197.5" width="12.6" height="12.6" fill="#992b86"/>
<rect x="1226.5" y="197.5" width="12.6" height="12.6" fill="#99237a"/>
<rect x="1238.5" y="197.5" width="12.6" height="12.6" fill="#991d70"/>
<rect x="1250.5" y="197.5" width="12.6" height="12.6" fill="#991867"/>
<rect x="1262.5" y="197.5" width="12.6" height="12.6" fill="#99135f"/>
<rect x="1274.5" y="197.5" width="12.6" height="12.6" fill="#990f59"/>
<rect x="1286.5" y="197.5" width="12.6" height="12.6" fill="#990c53"/>
<rect x="1298.5" y="197.5" width="12.6" height="12.6" fill="#99084d"/>
<rect x="1310.5" y="197.5" width="12.6" height="12.6" fill="#990549"/>
<rect x="1322.5" y="197.5" width="12.6" height="12.6" fill="#990344"/>
<rect x="1334.5" y="197.5" width="12.6" height="12.6" fill="#990040"/>
<rect x="1346.5" y="197.5" width="12.6" height="12.6" fill="#99003d"/>
<rect x="1358.5" y="197.5" width="12.6" height="12.6" fill="#99003a"/>
<rect x="1370.5" y="197.5" width="12.6" height="12.6" fill="#990037"/>
<rect x="1382.5" y="197.5" width="12.6" height="12.6" fill="#990034"/>
<rect x="1394.5" y="197.5" width="12.6" height="12.6" fill="#990031"/>
<rect x="1406.5" y="197.5" width="12.6" height="12.6" fill="#99002f"/>
<rect x="1418.5" y="197.5" width="12.6" height="12.6" fill="#99002d"/>
<rect x="1430.5" y="197.5" width="12.6" height="12.6" fill="#99002b"/>
<rect x="1442.5" y="197.5" width="12.6" height="12.6" fill="#990029"/>
<rect x="1454.5" y="197.5" width="12.6" height="12.6" fill="#990027"/>
<rect x="1466.5" y="197.5" width="12.6" height="12.6" fill="#990025"/>
<rect x="1478.5" y="197.5" width="12.6" height="12.6" fill="#990024"/>
<rect x="1490.5" y="197.5" width="12.6" height="12.6" fill="#990022"/>
<rect x="1502.5" y="197.5" width="12.6" height="12.6" fill="#990021"/>
<rect x="974.5" y="209.5" width="12.6" height="12.6" fill="#006999"/>
<rect x="986.5" y="209.5" width="12.6" height="12.6" fill="#006799"/>
<rect x="998.5" y="209.5" width="12.6" height="12.6" fill="#006499"/>
<rect x="1010.5" y="209.5" width="12.6" height="12.6" fill="#006199"/>
<rect x="1022.5" y="209.5" width="12.6" height="12.6" fill="#005e99"/>
<rect x="1034.5" y="209.5" width="12.6" height="12.6" fill="#005b99"/>
<rect x="1046.5" y="209.5" width="12.6" height="12.6" fill="#005899"/>
<rect x="1058.5" y="209.5" width="12.6" height="12.6" fill="#005599"/>
<rect x="1070.5" y="209.5" width="12.6" height="12.6" fill="#005299"/>
<rect x="1082.5" y="209.5" width="12.6" height="12.6" fill="#054e99"/>
<rect x="1094.5" y="209.5" width="12.6" height="12.6" fill="#124b99"/>
<rect x="1106.5" y="209.5" width="12.6" height="12.6" fill="#1e4899"/>
<rect x="1118.5" y="209.5" width="12.6" height="12.6" fill="#2b4499"/>
<rect x="1130.5" y="209.5" width="12.6" height="12.6" fill="#384199"/>
<rect x="1142.5" y="209.5" width="12.6" height="12.6" fill="#463e99"/>
<rect x="1154.5" y="209.5" width="12.6" height="12.6" fill="#533a99"/>
<rect x="1166.5" y="209.5" width="12.6" height="12.6" fill="#613699"/>
<rect x="1178.5" y="209.5" width="12.6" height="12.6" fill="#6f3399"/>
<rect x="1190.5" y="209.5" width="12.6" height="12.6" fill="#7e2f99"/>
<rect x="1202.5" y="209.5" width="12.6" height="12.6" fill="#8c2b99"/>
<rect x="1214.5" y="209.5" width="12.6" height="12.6" fill="#992797"/>
<rect x="1226.5" y="209.5" width="12.6" height="12.6" fill="#992089"/>
<rect x="1238.5" y="209.5" width="12.6" height="12.6" fill="#991a7e"/>
<rect x="1250.5" y="209.5" width="12.6" height="12.6" fill="#991474"/>
<rect x="1262.5" y="209.5" width="12.6" height="12.6" fill="#99106c"/>
<rect x="1274.5" y="209.5" width="12.6" height="12.6" fill="#990c64"/>
<rect x="1286.5" y="209.5" width="12.6" height="12.6" fill="#99095d"/>
<rect x="1298.5" y="209.5" width="12.6" height="12.6" fill="#990557"/>
<rect x="1310.5" y="209.5" width="12.6" height="12.6" fill="#990352"/>
<rect x="1322.5" y="209.5" width="12.6" height="12.6" fill="#99004d"/>
<rect x="1334.5" y="209.5" width="12.6" height="12.6" fill="#990049"/>
<rect x="1346.5" y="209.5" width="12.6" height="12.6" fill="#990045"/>
<rect x="1358.5" y="209.5" width="12.6" height="12.6" fill="#990041"/>
<rect x="1370.5" y="209.5" width="12.6" height="12.6" fill="#99003e"/>
<rect x="1382.5" y="209.5" width="12.6" height="12.6" fill="#99003b"/>
<rect x="1394.5" y="209.5" width="12.6" height="12.6" fill="#990038"/>
<rect x="1406.5" y="209.5" width="12.6" height="12.6" fill="#990035"/>
<rect x="1418.5" y="209.5" width="12.6" height="12.6" fill="#990033"/>
<rect x="1430.5" y="209.5" width="12.6" height="12.6" fill="#990031"/>
<rect x="1442.5" y="209.5" width="12.6" height="12.6" fill="#99002e"/>
<rect x="1454.5" y="209.5" width="12.6" height="12.6" fill="#99002c"/>
<rect x="1466.5" y="209.5" width="12.6" height="12.6" fill="#99002b"/>
<rect x="1478.5" y="209.5" width="12.6" height="12.6" fill="#990029"/>
<rect x="1490.5" y="209.5" width="12.6" height="12.6" fill="#990027"/>
<rect x="986.5" y="221.5" width="12.6" height="12.6" fill="#005b99"/>
<rect x="998.5" y="221.5" width="12.6" height="12.6" fill="#005899"/>
<rect x="1010.5" y="221.5" width="12.6" height="12.6" fill="#005699"/>
<rect x="1022.5" y="221.5" width="12.6" height="12.6" fill="#005399"/>
<rect x="1034.5" y="221.5" width="12.6" height="12.6" fill="#005099"/>
<rect x="1046.5" y="221.5" width="12.6" height="12.6" fill="#004d99"/>
<rect x="1058.5" y="221.5" width="12.6" height="12.6" fill="#004a99"/>
<rect x="1070.5" y="221.5" width="12.6" height="12.6" fill="#004799"/>
<rect x="1082.5" y="221.5" width="12.6" height="12.6" fill="#024499"/>
<rect x="1094.5" y="221.5" width="12.6" height="12.6" fill="#0e4199"/>
<rect x="1106.5" y="221.5" width="12.6" height="12.6" fill="#193e99"/>
<rect x="1118.5" y="221.5" width="12.6" height="12.6" fill="#253b99"/>
<rect x="1130.5" y="221.5" width="12.6" height="12.6" fill="#313799"/>
<rect x="1142.5" y="221.5" width="12.6" height="12.6" fill="#3d3499"/>
<rect x="1154.5" y="221.5" width="12.6" height="12.6" fill="#4a3199"/>
<rect x="1166.5" y="221.5" width="12.6" height="12.6" fill="#562d99"/>
<rect x="1178.5" y="221.5" width="12.6" height="12.6" fill="#632a99"/>
<rect x="1190.5" y="221.5" width="12.6" height="12.6" fill="#702699"/>
<rect x="1202.5" y="221.5" width="12.6" height="12.6" fill="#7d2399"/>
<rect x="1214.5" y="221.5" width="12.6" height="12.6" fill="#8b1f99"/>
<rect x="1226.5" y="221.5" width="12.6" height="12.6" fill="#981c99"/>
<rect x="1238.5" y="221.5" width="12.6" height="12.6" fill="#99168d"/>
<rect x="1250.5" y="221.5" width="12.6" height="12.6" fill="#991182"/>
<rect x="1262.5" y="221.5" width="12.6" height="12.6" fill="#990d78"/>
<rect x="1274.5" y="221.5" width="12.6" height="12.6" fill="#990970"/>
<rect x="1286.5" y="221.5" width="12.6" height="12.6" fill="#990568"/>
<rect x="1298.5" y="221.5" width="12.6" height="12.6" fill="#990261"/>
<rect x="1310.5" y="221.5" width="12.6" height="12.6" fill="#99005c"/>
<rect x="1322.5" y="221.5" width="12.6" height="12.6" fill="#990056"/>
<rect x="1334.5" y="221.5" width="12.6" height="12.6" fill="#990051"/>
<rect x="1346.5" y="221.5" width="12.6" height="12.6" fill="#99004d"/>
<rect x="1358.5" y="221.5" width="12.6" height="12.6" fill="#990049"/>
<rect x="1370.5" y="221.5" width="12.6" height="12.6" fill="#990045"/>
<rect x="1382.5" y="221.5" width="12.6" height="12.6" fill="#990042"/>
<rect x="1394.5" y="221.5" width="12.6" height="12.6" fill="#99003f"/>
<rect x="1406.5" y="221.5" width="12.6" height="12.6" fill="#99003c"/>
<rect x="1418.5" y="221.5" width="12.6" height="12.6" fill="#990039"/>
<rect x="1430.5" y="221.5" width="12.6" height="12.6" fill="#990037"/>
<rect x="1442.5" y="221.5" width="12.6" height="12.6" fill="#990034"/>
<rect x="1454.5" y="221.5" width="12.6" height="12.6" fill="#990032"/>
<rect x="1466.5" y="221.5" width="12.6" height="12.6" fill="#990030"/>
<rect x="1478.5" y="221.5" width="12.6" height="12.6" fill="#99002e"/>
<rect x="986.5" y="233.5" width="12.6" height="12.6" fill="#005199"/>
<rect x="998.5" y="233.5" width="12.6" height="12.6" fill="#004f99"/>
<rect x="1010.5" y="233.5" width="12.6" height="12.6" fill="#004c99"/>
<rect x="1022.5" y="233.5" width="12.6" height="12.6" fill="#004999"/>
<rect x="1034.5" y="233.5" width="12.6" height="12.6" fill="#004799"/>
<rect x="1046.5" y="233.5" width="12.6" height="12.6" fill="#004499"/>
<rect x="1058.5" y="233.5" width="12.6" height="12.6" fill="#004199"/>
<rect x="1070.5" y="233.5" width="12.6" height="12.6" fill="#003e99"/>
<rect x="1082.5" y="233.5" width="12.6" height="12.6" fill="#003b99"/>
<rect x="1094.5" y="233.5" width="12.6" height="12.6" fill="#0a3899"/>
<rect x="1106.5" y="233.5" width="12.6" height="12.6" fill="#153599"/>
<rect x="1118.5" y="233.5" width="12.6" height="12.6" fill="#203299"/>
<rect x="1130.5" y="233.5" width="12.6" height="12.6" fill="#2b2f99"/>
<rect x="1142.5" y="233.5" width="12.6" height="12.6" fill="#362c99"/>
<rect x="1154.5" y="233.5" width="12.6" height="12.6" fill="#412999"/>
<rect x="1166.5" y="233.5" width="12.6" height="12.6" fill="#4d2699"/>
<rect x="1178.5" y="233.5" width="12.6" height="12.6" fill="#592399"/>
<rect x="1190.5" y="233.5" width="12.6" height="12.6" fill="#641f99"/>
<rect x="1202.5" y="233.5" width="12.6" height="12.6" fill="#711c99"/>
<rect x="1214.5" y="233.5" width="12.6" height="12.6" fill="#7d1999"/>
<rect x="1226.5" y="233.5" width="12.6" height="12.6" fill="#891599"/>
<rect x="1238.5" y="233.5" width="12.6" height="12.6" fill="#961299"/>
<rect x="1250.5" y="233.5" width="12.6" height="12.6" fill="#990d90"/>
<rect x="1262.5" y="233.5" width="12.6" height="12.6" fill="#990985"/>
<rect x="1274.5" y="233.5" width="12.6" height="12.6" fill="#99057c"/>
<rect x="1286.5" y="233.5" width="12.6" height="12.6" fill="#990273"/>
<rect x="1298.5" y="233.5" width="12.6" height="12.6" fill="#99006c"/>
<rect x="1310.5" y="233.5" width="12.6" height="12.6" fill="#990065"/>
<rect x="1322.5" y="233.5" width="12.6" height="12.6" fill="#99005f"/>
<rect x="1334.5" y="233.5" width="12.6" height="12.6" fill="#99005a"/>
<rect x="1346.5" y="233.5" width="12.6" height="12.6" fill="#990055"/>
<rect x="1358.5" y="233.5" width="12.6" height="12.6" fill="#990051"/>
<rect x="1370.5" y="233.5" width="12.6" height="12.6" fill="#99004d"/>
<rect x="1382.5" y="233.5" width="12.6" height="12.6" fill="#990049"/>
<rect x="1394.5" y="233.5" width="12.6" height="12.6" fill="#990046"/>
<rect x="1406.5" y="233.5" width="12.6" height="12.6" fill="#990042"/>
<rect x="1418.5" y="233.5" width="12.6" height="12.6" fill="#99003f"/>
<rect x="1430.5" y="233.5" width="12.6" height="12.6" fill="#99003d"/>
<rect x="1442.5" y="233.5" width="12.6" height="12.6" fill="#99003a"/>
<rect x="1454.5" y="233.5" width="12.6" height="12.6" fill="#990038"/>
<rect x="1466.5" y="233.5" width="12.6" height="12.6" fill="#990035"/>
<rect x="998.5" y="245.5" width="12.6" height="12.6" fill="#004699"/>
<rect x="1010.5" y="245.5" width="12.6" height="12.6" fill="#004499"/>
<rect x="1022.5" y="245.5" width="12.6" height="12.6" fill="#004199"/>
<rect x="1034.5" y="245.5" width="12.6" height="12.6" fill="#003e99"/>
<rect x="1046.5" y="245.5" width="12.6" height="12.6" fill="#003c99"/>
<rect x="1058.5" y="245.5" width="12.6" height="12.6" fill="#003999"/>
<rect x="1070.5" y="245.5" width="12.6" height="12.6" fill="#003699"/>
<rect x="1082.5" y="245.5" width="12.6" height="12.6" fill="#003499"/>
<rect x="1094.5" y="245.5" width="12.6" height="12.6" fill="#073199"/>
<rect x="1106.5" y="245.5" width="12.6" height="12.6" fill="#112e99"/>
<rect x="1118.5" y="245.5" width="12.6" height="12.6" fill="#1b2b99"/>
<rect x="1130.5" y="245.5" width="12.6" height="12.6" fill="#252899"/>
<rect x="1142.5" y="245.5" width="12.6" height="12.6" fill="#302599"/>
<rect x="1154.5" y="245.5" width="12.6" height="12.6" fill="#3a2399"/>
<rect x="1166.5" y="245.5" width="12.6" height="12.6" fill="#452099"/>
<rect x="1178.5" y="245.5" width="12.6" height="12.6" fill="#501c99"/>
<rect x="1190.5" y="245.5" width="12.6" height="12.6" fill="#5b1999"/>
<rect x="1202.5" y="245.5" width="12.6" height="12.6" fill="#661699"/>
<rect x="1214.5" y="245.5" width="12.6" height="12.6" fill="#711399"/>
<rect x="1226.5" y="245.5" width="12.6" height="12.6" fill="#7d1099"/>
<rect x="1238.5" y="245.5" width="12.6" height="12.6" fill="#880c99"/>
<rect x="1250.5" y="245.5" width="12.6" height="12.6" fill="#940999"/>
<rect x="1262.5" y="245.5" width="12.6" height="12.6" fill="#990592"/>
<rect x="1274.5" y="245.5" width="12.6" height="12.6" fill="#990288"/>
<rect x="1286.5" y="245.5" width="12.6" height="12.6" fill="#99007f"/>
<rect x="1298.5" y="245.5" width="12.6" height="12.6" fill="#990077"/>
<rect x="1310.5" y="245.5" width="12.6" height="12.6" fill="#99006f"/>
<rect x="1322.5" y="245.5" width="12.6" height="12.6" fill="#990069"/>
<rect x="1334.5" y="245.5" width="12.6" height="12.6" fill="#990063"/>
<rect x="1346.5" y="245.5" width="12.6" height="12.6" fill="#99005e"/>
<rect x="1358.5" y="245.5" width="12.6" height="12.6" fill="#990059"/>
<rect x="1370.5" y="245.5" width="12.6" height="12.6" fill="#990054"/>
<rect x="1382.5" y="245.5" width="12.6" height="12.6" fill="#990050"/>
<rect x="1394.5" y="245.5" width="12.6" height="12.6" fill="#99004d"/>
<rect x="1406.5" y="245.5" width="12.6" height="12.6" fill="#990049"/>
<rect x="1418.5" y="245.5" width="12.6" height="12.6" fill="#990046"/>
<rect x="1430.5" y="245.5" width="12.6" height="12.6" fill="#990043"/>
<rect x="1442.5" y="245.5" width="12.6" height="12.6" fill="#990040"/>
<rect x="1454.5" y="245.5" width="12.6" height="12.6" fill="#99003d"/>
<rect x="998.5" y="257.5" width="12.6" height="12.6" fill="#003f99"/>
<rect x="1010.5" y="257.5" width="12.6" height="12.6" fill="#003c99"/>
<rect x="1022.5" y="257.5" width="12.6" height="12.6" fill="#003a99"/>
<rect x="1034.5" y="257.5" width="12.6" height="12.6" fill="#003799"/>
<rect x="1046.5" y="257.5" width="12.6" height="12.6" fill="#003599"/>
<rect x="1058.5" y="257.5" width="12.6" height="12.6" fill="#003299"/>
<rect x="1070.5" y="257.5" width="12.6" height="12.6" fill="#003099"/>
<rect x="1082.5" y="257.5" width="12.6" height="12.6" fill="#002d99"/>
<rect x="1094.5" y="257.5" width="12.6" height="12.6" fill="#042b99"/>
<rect x="1106.5" y="257.5" width="12.6" height="12.6" fill="#0e2899"/>
<rect x="1118.5" y="257.5" width="12.6" height="12.6" fill="#172599"/>
<rect x="1130.5" y="257.5" width="12.6" height="12.6" fill="#212299"/>
<rect x="1142.5" y="257.5" width="12.6" height="12.6" fill="#2a2099"/>
<rect x="1154.5" y="257.5" width="12.6" height="12.6" fill="#341d99"/>
<rect x="1166.5" y="257.5" width="12.6" height="12.6" fill="#3e1a99"/>
<rect x="1178.5" y="257.5" width="12.6" height="12.6" fill="#481799"/>
<rect x="1190.5" y="257.5" width="12.6" height="12.6" fill="#521499"/>
<rect x="1202.5" y="257.5" width="12.6" height="12.6" fill="#5d1199"/>
<rect x="1214.5" y="257.5" width="12.6" height="12.6" fill="#670e99"/>
<rect x="1226.5" y="257.5" width="12.6" height="12.6" fill="#720b99"/>
<rect x="1238.5" y="257.5" width="12.6" height="12.6" fill="#7c0899"/>
<rect x="1250.5" y="257.5" width="12.6" height="12.6" fill="#870599"/>
<rect x="1262.5" y="257.5" width="12.6" height="12.6" fill="#920299"/>
<rect x="1274.5" y="257.5" width="12.6" height="12.6" fill="#990094"/>
<rect x="1286.5" y="257.5" width="12.6" height="12.6" fill="#99008a"/>
<rect x="1298.5" y="257.5" width="12.6" height="12.6" fill="#990082"/>
<rect x="1310.5" y="257.5" width="12.6" height="12.6" fill="#99007a"/>
<rect x="1322.5" y="257.5" width="12.6" height="12.6" fill="#990073"/>
<rect x="1334.5" y="257.5" width="12.6" height="12.6" fill="#99006c"/>
<rect x="1346.5" y="257.5" width="12.6" height="12.6" fill="#990066"/>
<rect x="1358.5" y="257.5" width="12.6" height="12.6" fill="#990061"/>
<rect x="1370.5" y="257.5" width="12.6" height="12.6" fill="#99005c"/>
<rect x="1382.5" y="257.5" width="12.6" height="12.6" fill="#990058"/>
<rect x="1394.5" y="257.5" width="12.6" height="12.6" fill="#990054"/>
<rect x="1406.5" y="257.5" width="12.6" height="12.6" fill="#990050"/>
<rect x="1418.5" y="257.5" width="12.6" height="12.6" fill="#99004c"/>
<rect x="1430.5" y="257.5" width="12.6" height="12.6" fill="#990049"/>
<rect x="1442.5" y="257.5" width="12.6" height="12.6" fill="#990046"/>
<rect x="1010.5" y="269.5" width="12.6" height="12.6" fill="#003699"/>
<rect x="1022.5" y="269.5" width="12.6" height="12.6" fill="#003399"/>
<rect x="1034.5" y="269.5" width="12.6" height="12.6" fill="#003199"/>
<rect x="1046.5" y="269.5" width="12.6" height="12.6" fill="#002f99"/>
<rect x="1058.5" y="269.5" width="12.6" height="12.6" fill="#002c99"/>
<rect x="1070.5" y="269.5" width="12.6" height="12.6" fill="#002a99"/>
<rect x="1082.5" y="269.5" width="12.6" height="12.6" fill="#002799"/>
<rect x="1094.5" y="269.5" width="12.6" height="12.6" fill="#022599"/>
<rect x="1106.5" y="269.5" width="12.6" height="12.6" fill="#0b2299"/>
<rect x="1118.5" y="269.5" width="12.6" height="12.6" fill="#142099"/>
<rect x="1130.5" y="269.5" width="12.6" height="12.6" fill="#1d1d99"/>
<rect x="1142.5" y="269.5" width="12.6" height="12.6" fill="#261a99"/>
<rect x="1154.5" y="269.5" width="12.6" height="12.6" fill="#2f1899"/>
<rect x="1166.5" y="269.5" width="12.6" height="12.6" fill="#381599"/>
<rect x="1178.5" y="269.5" width="12.6" height="12.6" fill="#411299"/>
<rect x="1190.5" y="269.5" width="12.6" height="12.6" fill="#4b1099"/>
<rect x="1202.5" y="269.5" width="12.6" height="12.6" fill="#540d99"/>
<rect x="1214.5" y="269.5" width="12.6" height="12.6" fill="#5e0a99"/>
<rect x="1226.5" y="269.5" width="12.6" height="12.6" fill="#680799"/>
<rect x="1238.5" y="269.5" width="12.6" height="12.6" fill="#720499"/>
<rect x="1250.5" y="269.5" width="12.6" height="12.6" fill="#7c0199"/>
<rect x="1262.5" y="269.5" width="12.6" height="12.6" fill="#860099"/>
<rect x="1274.5" y="269.5" width="12.6" height="12.6" fill="#910099"/>
<rect x="1286.5" y="269.5" width="12.6" height="12.6" fill="#990097"/>
<rect x="1298.5" y="269.5" width="12.6" height="12.6" fill="#99008d"/>
<rect x="1310.5" y="269.5" width="12.6" height="12.6" fill="#990084"/>
<rect x="1322.5" y="269.5" width="12.6" height="12.6" fill="#99007d"/>
<rect x="1334.5" y="269.5" width="12.6" height="12.6" fill="#990076"/>
<rect x="1346.5" y="269.5" width="12.6" height="12.6" fill="#99006f"/>
<rect x="1358.5" y="269.5" width="12.6" height="12.6" fill="#99006a"/>
<rect x="1370.5" y="269.5" width="12.6" height="12.6" fill="#990064"/>
<rect x="1382.5" y="269.5" width="12.6" height="12.6" fill="#99005f"/>
<rect x="1394.5" y="269.5" width="12.6" height="12.6" fill="#99005b"/>
<rect x="1406.5" y="269.5" width="12.6" height="12.6" fill="#990057"/>
<rect x="1418.5" y="269.5" width="12.6" height="12.6" fill="#990053"/>
<rect x="1430.5" y="269.5" width="12.6" height="12.6" fill="#990050"/>
<rect x="1010.5" y="281.5" width="12.6" height="12.6" fill="#003099"/>
<rect x="1022.5" y="281.5" width="12.6" height="12.6" fill="#002e99"/>
<rect x="1034.5" y="281.5" width="12.6" height="12.6" fill="#002b99"/>
<rect x="1046.5" y="281.5" width="12.6" height="12.6" fill="#002999"/>
<rect x="1058.5" y="281.5" width="12.6" height="12.6" fill="#002799"/>
<rect x="1070.5" y="281.5" width="12.6" height="12.6" fill="#002599"/>
<rect x="1082.5" y="281.5" width="12.6" height="12.6" fill="#002299"/>
<rect x="1094.5" y="281.5" width="12.6" height="12.6" fill="#002099"/>
<rect x="1106.5" y="281.5" width="12.6" height="12.6" fill="#081d99"/>
<rect x="1118.5" y="281.5" width="12.6" height="12.6" fill="#101b99"/>
<rect x="1130.5" y="281.5" width="12.6" height="12.6" fill="#191899"/>
<rect x="1142.5" y="281.5" width="12.6" height="12.6" fill="#211699"/>
<rect x="1154.5" y="281.5" width="12.6" height="12.6" fill="#2a1399"/>
<rect x="1166.5" y="281.5" width="12.6" height="12.6" fill="#331199"/>
<rect x="1178.5" y="281.5" width="12.6" height="12.6" fill="#3b0e99"/>
<rect x="1190.5" y="281.5" width="12.6" height="12.6" fill="#440c99"/>
<rect x="1202.5" y="281.5" width="12.6" height="12.6" fill="#4d0999"/>
<rect x="1214.5" y="281.5" width="12.6" height="12.6" fill="#560699"/>
<rect x="1226.5" y="281.5" width="12.6" height="12.6" fill="#600399"/>
<rect x="1238.5" y="281.5" width="12.6" height="12.6" fill="#690199"/>
<rect x="1250.5" y="281.5" width="12.6" height="12.6" fill="#720099"/>
<rect x="1262.5" y="281.5" width="12.6" height="12.6" fill="#7c0099"/>
<rect x="1274.5" y="281.5" width="12.6" height="12.6" fill="#860099"/>
<rect x="1286.5" y="281.5" width="12.6" height="12.6" fill="#900099"/>
<rect x="1298.5" y="281.5" width="12.6" height="12.6" fill="#990098"/>
<rect x="1310.5" y="281.5" width="12.6" height="12.6" fill="#99008f"/>
<rect x="1322.5" y="281.5" width="12.6" height="12.6" fill="#990087"/>
<rect x="1334.5" y="281.5" width="12.6" height="12.6" fill="#99007f"/>
<rect x="1346.5" y="281.5" width="12.6" height="12.6" fill="#990078"/>
<rect x="1358.5" y="281.5" width="12.6" height="12.6" fill="#990072"/>
<rect x="1370.5" y="281.5" width="12.6" height="12.6" fill="#99006c"/>
<rect x="1382.5" y="281.5" width="12.6" height="12.6" fill="#990067"/>
<rect x="1394.5" y="281.5" width="12.6" height="12.6" fill="#990062"/>
<rect x="1406.5" y="281.5" width="12.6" height="12.6" fill="#99005e"/>
<rect x="1418.5" y="281.5" width="12.6" height="12.6" fill="#99005a"/>
<rect x="1022.5" y="293.5" width="12.6" height="12.6" fill="#002999"/>
<rect x="1034.5" y="293.5" width="12.6" height="12.6" fill="#002699"/>
<rect x="1046.5" y="293.5" width="12.6" height="12.6" fill="#002499"/>
<rect x="1058.5" y="293.5" width="12.6" height="12.6" fill="#002299"/>
<rect x="1070.5" y="293.5" width="12.6" height="12.6" fill="#002099"/>
<rect x="1082.5" y="293.5" width="12.6" height="12.6" fill="#001e99"/>
<rect x="1094.5" y="293.5" width="12.6" height="12.6" fill="#001b99"/>
<rect x="1106.5" y="293.5" width="12.6" height="12.6" fill="#061999"/>
<rect x="1118.5" y="293.5" width="12.6" height="12.6" fill="#0e1799"/>
<rect x="1130.5" y="293.5" width="12.6" height="12.6" fill="#161499"/>
<rect x="1142.5" y="293.5" width="12.6" height="12.6" fill="#1e1299"/>
<rect x="1154.5" y="293.5" width="12.6" height="12.6" fill="#260f99"/>
<rect x="1166.5" y="293.5" width="12.6" height="12.6" fill="#2e0d99"/>
<rect x="1178.5" y="293.5" width="12.6" height="12.6" fill="#360a99"/>
<rect x="1190.5" y="293.5" width="12.6" height="12.6" fill="#3f0899"/>
<rect x="1202.5" y="293.5" width="12.6" height="12.6" fill="#470599"/>
<rect x="1214.5" y="293.5" width="12.6" height="12.6" fill="#500399"/>
<rect x="1226.5" y="293.5" width="12.6" height="12.6" fill="#580099"/>
<rect x="1238.5" y="293.5" width="12.6" height="12.6" fill="#610099"/>
<rect x="1250.5" y="293.5" width="12.6" height="12.6" fill="#6a0099"/>
<rect x="1262.5" y="293.5" width="12.6" height="12.6" fill="#730099"/>
<rect x="1274.5" y="293.5" width="12.6" height="12.6" fill="#7c0099"/>
<rect x="1286.5" y="293.5" width="12.6" height="12.6" fill="#850099"/>
<rect x="1298.5" y="293.5" width="12.6" height="12.6" fill="#8e0099"/>
<rect x="1310.5" y="293.5" width="12.6" height="12.6" fill="#980099"/>
<rect x="1322.5" y="293.5" width="12.6" height="12.6" fill="#990091"/>
<rect x="1334.5" y="293.5" width="12.6" height="12.6" fill="#990089"/>
<rect x="1346.5" y="293.5" width="12.6" height="12.6" fill="#990082"/>
<rect x="1358.5" y="293.5" width="12.6" height="12.6" fill="#99007b"/>
<rect x="1370.5" y="293.5" width="12.6" height="12.6" fill="#990075"/>
<rect x="1382.5" y="293.5" width="12.6" height="12.6" fill="#99006f"/>
<rect x="1394.5" y="293.5" width="12.6" height="12.6" fill="#99006a"/>
<rect x="1406.5" y="293.5" width="12.6" height="12.6" fill="#990065"/>
<rect x="1022.5" y="305.5" width="12.6" height="12.6" fill="#002499"/>
<rect x="1034.5" y="305.5" width="12.6" height="12.6" fill="#002299"/>
<rect x="1046.5" y="305.5" width="12.6" height="12.6" fill="#002099"/>
<rect x="1058.5" y="305.5" width="12.6" height="12.6" fill="#001e99"/>
<rect x="1070.5" y="305.5" width="12.6" height="12.6" fill="#001c99"/>
<rect x="1082.5" y="305.5" width="12.6" height="12.6" fill="#001999"/>
<rect x="1094.5" y="305.5" width="12.6" height="12.6" fill="#001799"/>
<rect x="1106.5" y="305.5" width="12.6" height="12.6" fill="#041599"/>
<rect x="1118.5" y="305.5" width="12.6" height="12.6" fill="#0b1399"/>
<rect x="1130.5" y="305.5" width="12.6" height="12.6" fill="#131099"/>
<rect x="1142.5" y="305.5" width="12.6" height="12.6" fill="#1a0e99"/>
<rect x="1154.5" y="305.5" width="12.6" height="12.6" fill="#220c99"/>
<rect x="1166.5" y="305.5" width="12.6" height="12.6" fill="#2a0a99"/>
<rect x="1178.5" y="305.5" width="12.6" height="12.6" fill="#320799"/>
<rect x="1190.5" y="305.5" width="12.6" height="12.6" fill="#390599"/>
<rect x="1202.5" y="305.5" width="12.6" height="12.6" fill="#410299"/>
<rect x="1214.5" y="305.5" width="12.6" height="12.6" fill="#490099"/>
<rect x="1226.5" y="305.5" width="12.6" height="12.6" fill="#520099"/>
<rect x="1238.5" y="305.5" width="12.6" height="12.6" fill="#5a0099"/>
<rect x="1250.5" y="305.5" width="12.6" height="12.6" fill="#620099"/>
<rect x="1262.5" y="305.5" width="12.6" height="12.6" fill="#6b0099"/>
<rect x="1274.5" y="305.5" width="12.6" height="12.6" fill="#730099"/>
<rect x="1286.5" y="305.5" width="12.6" height="12.6" fill="#7c0099"/>
<rect x="1298.5" y="305.5" width="12.6" height="12.6" fill="#840099"/>
<rect x="1310.5" y="305.5" width="12.6" height="12.6" fill="#8d0099"/>
<rect x="1322.5" y="305.5" width="12.6" height="12.6" fill="#960099"/>
<rect x="1334.5" y="305.5" width="12.6" height="12.6" fill="#990093"/>
<rect x="1346.5" y="305.5" width="12.6" height="12.6" fill="#99008b"/>
<rect x="1358.5" y="305.5" width="12.6" height="12.6" fill="#990084"/>
<rect x="1370.5" y="305.5" width="12.6" height="12.6" fill="#99007d"/>
<rect x="1382.5" y="305.5" width="12.6" height="12.6" fill="#990077"/>
<rect x="1394.5" y="305.5" width="12.6" height="12.6" fill="#990072"/>
<rect x="1034.5" y="317.5" width="12.6" height="12.6" fill="#001e99"/>
<rect x="1046.5" y="317.5" width="12.6" height="12.6" fill="#001c99"/>
<rect x="1058.5" y="317.5" width="12.6" height="12.6" fill="#001a99"/>
<rect x="1070.5" y="317.5" width="12.6" height="12.6" fill="#001899"/>
<rect x="1082.5" y="317.5" width="12.6" height="12.6" fill="#001699"/>
<rect x="1094.5" y="317.5" width="12.6" height="12.6" fill="#001499"/>
<rect x="1106.5" y="317.5" width="12.6" height="12.6" fill="#021199"/>
<rect x="1118.5" y="317.5" width="12.6" height="12.6" fill="#090f99"/>
<rect x="1130.5" y="317.5" width="12.6" height="12.6" fill="#100d99"/>
<rect x="1142.5" y="317.5" width="12.6" height="12.6" fill="#170b99"/>
<rect x="1154.5" y="317.5" width="12.6" height="12.6" fill="#1f0999"/>
<rect x="1166.5" y="317.5" width="12.6" height="12.6" fill="#260699"/>
<rect x="1178.5" y="317.5" width="12.6" height="12.6" fill="#2d0499"/>
<rect x="1190.5" y="317.5" width="12.6" height="12.6" fill="#350299"/>
<rect x="1202.5" y="317.5" width="12.6" height="12.6" fill="#3c0099"/>
<rect x="1214.5" y="317.5" width="12.6" height="12.6" fill="#440099"/>
<rect x="1226.5" y="317.5" width="12.6" height="12.6" fill="#4c0099"/>
<rect x="1238.5" y="317.5" width="12.6" height="12.6" fill="#530099"/>
<rect x="1250.5" y="317.5" width="12.6" height="12.6" fill="#5b0099"/>
<rect x="1262.5" y="317.5" width="12.6" height="12.6" fill="#630099"/>
<rect x="1274.5" y="317.5" width="12.6" height="12.6" fill="#6b0099"/>
<rect x="1286.5" y="317.5" width="12.6" height="12.6" fill="#730099"/>
<rect x="1298.5" y="317.5" width="12.6" height="12.6" fill="#7c0099"/>
<rect x="1310.5" y="317.5" width="12.6" height="12.6" fill="#840099"/>
<rect x="1322.5" y="317.5" width="12.6" height="12.6" fill="#8c0099"/>
<rect x="1334.5" y="317.5" width="12.6" height="12.6" fill="#950099"/>
<rect x="1346.5" y="317.5" width="12.6" height="12.6" fill="#990095"/>
<rect x="1358.5" y="317.5" width="12.6" height="12.6" fill="#99008d"/>
<rect x="1370.5" y="317.5" width="12.6" height="12.6" fill="#990086"/>
<rect x="1382.5" y="317.5" width="12.6" height="12.6" fill="#99007f"/>
<rect x="1046.5" y="329.5" width="12.6" height="12.6" fill="#001899"/>
<rect x="1058.5" y="329.5" width="12.6" height="12.6" fill="#001699"/>
<rect x="1070.5" y="329.5" width="12.6" height="12.6" fill="#001499"/>
<rect x="1082.5" y="329.5" width="12.6" height="12.6" fill="#001299"/>
<rect x="1094.5" y="329.5" width="12.6" height="12.6" fill="#001099"/>
<rect x="1106.5" y="329.5" width="12.6" height="12.6" fill="#000e99"/>
<rect x="1118.5" y="329.5" width="12.6" height="12.6" fill="#070c99"/>
<rect x="1130.5" y="329.5" width="12.6" height="12.6" fill="#0e0a99"/>
<rect x="1142.5" y="329.5" width="12.6" height="12.6" fill="#150899"/>
<rect x="1154.5" y="329.5" width="12.6" height="12.6" fill="#1b0699"/>
<rect x="1166.5" y="329.5" width="12.6" height="12.6" fill="#220499"/>
<rect x="1178.5" y="329.5" width="12.6" height="12.6" fill="#290199"/>
<rect x="1190.5" y="329.5" width="12.6" height="12.6" fill="#310099"/>
<rect x="1202.5" y="329.5" width="12.6" height="12.6" fill="#380099"/>
<rect x="1214.5" y="329.5" width="12.6" height="12.6" fill="#3f0099"/>
<rect x="1226.5" y="329.5" width="12.6" height="12.6" fill="#460099"/>
<rect x="1238.5" y="329.5" width="12.6" height="12.6" fill="#4e0099"/>
<rect x="1250.5" y="329.5" width="12.6" height="12.6" fill="#550099"/>
<rect x="1262.5" y="329.5" width="12.6" height="12.6" fill="#5d0099"/>
<rect x="1274.5" y="329.5" width="12.6" height="12.6" fill="#640099"/>
<rect x="1286.5" y="329.5" width="12.6" height="12.6" fill="#6c0099"/>
<rect x="1298.5" y="329.5" width="12.6" height="12.6" fill="#740099"/>
<rect x="1310.5" y="329.5" width="12.6" height="12.6" fill="#7c0099"/>
<rect x="1322.5" y="329.5" width="12.6" height="12.6" fill="#830099"/>
<rect x="1334.5" y="329.5" width="12.6" height="12.6" fill="#8b0099"/>
<rect x="1346.5" y="329.5" width="12.6" height="12.6" fill="#930099"/>
<rect x="1358.5" y="329.5" width="12.6" height="12.6" fill="#990096"/>
<rect x="1370.5" y="329.5" width="12.6" height="12.6" fill="#99008f"/>
<rect x="1046.5" y="341.5" width="12.6" height="12.6" fill="#001599"/>
<rect x="1058.5" y="341.5" width="12.6" height="12.6" fill="#001399"/>
<rect x="1070.5" y="341.5" width="12.6" height="12.6" fill="#001199"/>
<rect x="1082.5" y="341.5" width="12.6" height="12.6" fill="#000f99"/>
<rect x="1094.5" y="341.5" width="12.6" height="12.6" fill="#000d99"/>
<rect x="1106.5" y="341.5" width="12.6" height="12.6" fill="#000b99"/>
<rect x="1118.5" y="341.5" width="12.6" height="12.6" fill="#050999"/>
<rect x="1130.5" y="341.5" width="12.6" height="12.6" fill="#0c0799"/>
<rect x="1142.5" y="341.5" width="12.6" height="12.6" fill="#120599"/>
<rect x="1154.5" y="341.5" width="12.6" height="12.6" fill="#190399"/>
<rect x="1166.5" y="341.5" width="12.6" height="12.6" fill="#1f0199"/>
<rect x="1178.5" y="341.5" width="12.6" height="12.6" fill="#260099"/>
<rect x="1190.5" y="341.5" width="12.6" height="12.6" fill="#2d0099"/>
<rect x="1202.5" y="341.5" width="12.6" height="12.6" fill="#340099"/>
<rect x="1214.5" y="341.5" width="12.6" height="12.6" fill="#3a0099"/>
<rect x="1226.5" y="341.5" width="12.6" height="12.6" fill="#410099"/>
<rect x="1238.5" y="341.5" width="12.6" height="12.6" fill="#480099"/>
<rect x="1250.5" y="341.5" width="12.6" height="12.6" fill="#4f0099"/>
<rect x="1262.5" y="341.5" width="12.6" height="12.6" fill="#570099"/>
<rect x="1274.5" y="341.5" width="12.6" height="12.6" fill="#5e0099"/>
<rect x="1286.5" y="341.5" width="12.6" height="12.6" fill="#650099"/>
<rect x="1298.5" y="341.5" width="12.6" height="12.6" fill="#6c0099"/>
<rect x="1310.5" y="341.5" width="12.6" height="12.6" fill="#740099"/>
<rect x="1322.5" y="341.5" width="12.6" height="12.6" fill="#7b0099"/>
<rect x="1334.5" y="341.5" width="12.6" height="12.6" fill="#830099"/>
<rect x="1346.5" y="341.5" width="12.6" height="12.6" fill="#8b0099"/>
<rect x="1358.5" y="341.5" width="12.6" height="12.6" fill="#920099"/>
<rect x="1058.5" y="353.5" width="12.6" height="12.6" fill="#001099"/>
<rect x="1070.5" y="353.5" width="12.6" height="12.6" fill="#000e99"/>
<rect x="1082.5" y="353.5" width="12.6" height="12.6" fill="#000c99"/>
<rect x="1094.5" y="353.5" width="12.6" height="12.6" fill="#000a99"/>
<rect x="1106.5" y="353.5" width="12.6" height="12.6" fill="#000999"/>
<rect x="1118.5" y="353.5" width="12.6" height="12.6" fill="#030799"/>
<rect x="1130.5" y="353.5" width="12.6" height="12.6" fill="#0a0599"/>
<rect x="1142.5" y="353.5" width="12.6" height="12.6" fill="#100399"/>
<rect x="1154.5" y="353.5" width="12.6" height="12.6" fill="#160199"/>
<rect x="1166.5" y="353.5" width="12.6" height="12.6" fill="#1c0099"/>
<rect x="1178.5" y="353.5" width="12.6" height="12.6" fill="#230099"/>
<rect x="1190.5" y="353.5" width="12.6" height="12.6" fill="#290099"/>
<rect x="1202.5" y="353.5" width="12.6" height="12.6" fill="#300099"/>
<rect x="1214.5" y="353.5" width="12.6" height="12.6" fill="#360099"/>
<rect x="1226.5" y="353.5" width="12.6" height="12.6" fill="#3d0099"/>
<rect x="1238.5" y="353.5" width="12.6" height="12.6" fill="#440099"/>
<rect x="1250.5" y="353.5" width="12.6" height="12.6" fill="#4a0099"/>
<rect x="1262.5" y="353.5" width="12.6" height="12.6" fill="#510099"/>
<rect x="1274.5" y="353.5" width="12.6" height="12.6" fill="#580099"/>
<rect x="1286.5" y="353.5" width="12.6" height="12.6" fill="#5f0099"/>
<rect x="1298.5" y="353.5" width="12.6" height="12.6" fill="#660099"/>
<rect x="1310.5" y="353.5" width="12.6" height="12.6" fill="#6d0099"/>
<rect x="1322.5" y="353.5" width="12.6" height="12.6" fill="#740099"/>
<rect x="1334.5" y="353.5" width="12.6" height="12.6" fill="#7b0099"/>
<rect x="1346.5" y="353.5" width="12.6" height="12.6" fill="#830099"/>
<rect x="1058.5" y="365.5" width="12.6" height="12.6" fill="#000d99"/>
<rect x="1070.5" y="365.5" width="12.6" height="12.6" fill="#000c99"/>
<rect x="1082.5" y="365.5" width="12.6" height="12.6" fill="#000a99"/>
<rect x="1094.5" y="365.5" width="12.6" height="12.6" fill="#000899"/>
<rect x="1106.5" y="365.5" width="12.6" height="12.6" fill="#000699"/>
<rect x="1118.5" y="365.5" width="12.6" height="12.6" fill="#020499"/>
<rect x="1130.5" y="365.5" width="12.6" height="12.6" fill="#080299"/>
<rect x="1142.5" y="365.5" width="12.6" height="12.6" fill="#0e0199"/>
<rect x="1154.5" y="365.5" width="12.6" height="12.6" fill="#140099"/>
<rect x="1166.5" y="365.5" width="12.6" height="12.6" fill="#1a0099"/>
<rect x="1178.5" y="365.5" width="12.6" height="12.6" fill="#200099"/>
<rect x="1190.5" y="365.5" width="12.6" height="12.6" fill="#260099"/>
<rect x="1202.5" y="365.5" width="12.6" height="12.6" fill="#2c0099"/>
<rect x="1214.5" y="365.5" width="12.6" height="12.6" fill="#330099"/>
<rect x="1226.5" y="365.5" width="12.6" height="12.6" fill="#390099"/>
<rect x="1238.5" y="365.5" width="12.6" height="12.6" fill="#3f0099"/>
<rect x="1250.5" y="365.5" width="12.6" height="12.6" fill="#460099"/>
<rect x="1262.5" y="365.5" width="12.6" height="12.6" fill="#4c0099"/>
<rect x="1274.5" y="365.5" width="12.6" height="12.6" fill="#530099"/>
<rect x="1286.5" y="365.5" width="12.6" height="12.6" fill="#590099"/>
<rect x="1298.5" y="365.5" width="12.6" height="12.6" fill="#600099"/>
<rect x="1310.5" y="365.5" width="12.6" height="12.6" fill="#670099"/>
<rect x="1322.5" y="365.5" width="12.6" height="12.6" fill="#6d0099"/>
<rect x="1334.5" y="365.5" width="12.6" height="12.6" fill="#740099"/>
<rect x="1070.5" y="377.5" width="12.6" height="12.6" fill="#000999"/>
<rect x="1082.5" y="377.5" width="12.6" height="12.6" fill="#000799"/>
<rect x="1094.5" y="377.5" width="12.6" height="12.6" fill="#000699"/>
<rect x="1106.5" y="377.5" width="12.6" height="12.6" fill="#000499"/>
<rect x="1118.5" y="377.5" width="12.6" height="12.6" fill="#010299"/>
<rect x="1130.5" y="377.5" width="12.6" height="12.6" fill="#060099"/>
<rect x="1142.5" y="377.5" width="12.6" height="12.6" fill="#0c0099"/>
<rect x="1154.5" y="377.5" width="12.6" height="12.6" fill="#120099"/>
<rect x="1166.5" y="377.5" width="12.6" height="12.6" fill="#170099"/>
<rect x="1178.5" y="377.5" width="12.6" height="12.6" fill="#1d0099"/>
<rect x="1190.5" y="377.5" width="12.6" height="12.6" fill="#230099"/>
<rect x="1202.5" y="377.5" width="12.6" height="12.6" fill="#290099"/>
<rect x="1214.5" y="377.5" width="12.6" height="12.6" fill="#2f0099"/>
<rect x="1226.5" y="377.5" width="12.6" height="12.6" fill="#350099"/>
<rect x="1238.5" y="377.5" width="12.6" height="12.6" fill="#3b0099"/>
<rect x="1250.5" y="377.5" width="12.6" height="12.6" fill="#410099"/>
<rect x="1262.5" y="377.5" width="12.6" height="12.6" fill="#480099"/>
<rect x="1274.5" y="377.5" width="12.6" height="12.6" fill="#4e0099"/>
<rect x="1286.5" y="377.5" width="12.6" height="12.6" fill="#540099"/>
<rect x="1298.5" y="377.5" width="12.6" height="12.6" fill="#5b0099"/>
<rect x="1310.5" y="377.5" width="12.6" height="12.6" fill="#610099"/>
<rect x="1322.5" y="377.5" width="12.6" height="12.6" fill="#670099"/>
<rect x="1082.5" y="389.5" width="12.6" height="12.6" fill="#000599"/>
<rect x="1094.5" y="389.5" width="12.6" height="12.6" fill="#000399"/>
<rect x="1106.5" y="389.5" width="12.6" height="12.6" fill="#000299"/>
<rect x="1118.5" y="389.5" width="12.6" height="12.6" fill="#000099"/>
<rect x="1130.5" y="389.5" width="12.6" height="12.6" fill="#050099"/>
<rect x="1142.5" y="389.5" width="12.6" height="12.6" fill="#0a0099"/>
<rect x="1154.5" y="389.5" width="12.6" height="12.6" fill="#100099"/>
<rect x="1166.5" y="389.5" width="12.6" height="12.6" fill="#150099"/>
<rect x="1178.5" y="389.5" width="12.6" height="12.6" fill="#1b0099"/>
<rect x="1190.5" y="389.5" width="12.6" height="12.6" fill="#210099"/>
<rect x="1202.5" y="389.5" width="12.6" height="12.6" fill="#260099"/>
<rect x="1214.5" y="389.5" width="12.6" height="12.6" fill="#2c0099"/>
<rect x="1226.5" y="389.5" width="12.6" height="12.6" fill="#320099"/>
<rect x="1238.5" y="389.5" width="12.6" height="12.6" fill="#380099"/>
<rect x="1250.5" y="389.5" width="12.6" height="12.6" fill="#3d0099"/>
<rect x="1262.5" y="389.5" width="12.6" height="12.6" fill="#430099"/>
<rect x="1274.5" y="389.5" width="12.6" height="12.6" fill="#490099"/>
<rect x="1286.5" y="389.5" width="12.6" height="12.6" fill="#4f0099"/>
<rect x="1298.5" y="389.5" width="12.6" height="12.6" fill="#560099"/>
<rect x="1310.5" y="389.5" width="12.6" height="12.6" fill="#5c0099"/>
<rect x="1094.5" y="401.5" width="12.6" height="12.6" fill="#000199"/>
<rect x="1106.5" y="401.5" width="12.6" height="12.6" fill="#000099"/>
<rect x="1118.5" y="401.5" width="12.6" height="12.6" fill="#000099"/>
<rect x="1130.5" y="401.5" width="12.6" height="12.6" fill="#030099"/>
<rect x="1142.5" y="401.5" width="12.6" height="12.6" fill="#090099"/>
<rect x="1154.5" y="401.5" width="12.6" height="12.6" fill="#0e0099"/>
<rect x="1166.5" y="401.5" width="12.6" height="12.6" fill="#130099"/>
<rect x="1178.5" y="401.5" width="12.6" height="12.6" fill="#190099"/>
<rect x="1190.5" y="401.5" width="12.6" height="12.6" fill="#1e0099"/>
<rect x="1202.5" y="401.5" width="12.6" height="12.6" fill="#240099"/>
<rect x="1214.5" y="401.5" width="12.6" height="12.6" fill="#290099"/>
<rect x="1226.5" y="401.5" width="12.6" height="12.6" fill="#2f0099"/>
<rect x="1238.5" y="401.5" width="12.6" height="12.6" fill="#340099"/>
<rect x="1250.5" y="401.5" width="12.6" height="12.6" fill="#3a0099"/>
<rect x="1262.5" y="401.5" width="12.6" height="12.6" fill="#400099"/>
<rect x="1274.5" y="401.5" width="12.6" height="12.6" fill="#450099"/>
<rect x="1286.5" y="401.5" width="12.6" height="12.6" fill="#4b0099"/>
<rect x="1298.5" y="401.5" width="12.6" height="12.6" fill="#510099"/>
<rect x="1094.5" y="413.5" width="12.6" height="12.6" fill="#000099"/>
<rect x="1106.5" y="413.5" width="12.6" height="12.6" fill="#000099"/>
<rect x="1118.5" y="413.5" width="12.6" height="12.6" fill="#000099"/>
<rect x="1130.5" y="413.5" width="12.6" height="12.6" fill="#020099"/>
<rect x="1142.5" y="413.5" width="12.6" height="12.6" fill="#070099"/>
<rect x="1154.5" y="413.5" width="12.6" height="12.6" fill="#0c0099"/>
<rect x="1166.5" y="413.5" width="12.6" height="12.6" fill="#110099"/>
<rect x="1178.5" y="413.5" width="12.6" height="12.6" fill="#160099"/>
<rect x="1190.5" y="413.5" width="12.6" height="12.6" fill="#1c0099"/>
<rect x="1202.5" y="413.5" width="12.6" height="12.6" fill="#210099"/>
<rect x="1214.5" y="413.5" width="12.6" height="12.6" fill="#260099"/>
<rect x="1226.5" y="413.5" width="12.6" height="12.6" fill="#2c0099"/>
<rect x="1238.5" y="413.5" width="12.6" height="12.6" fill="#310099"/>
<rect x="1250.5" y="413.5" width="12.6" height="12.6" fill="#360099"/>
<rect x="1262.5" y="413.5" width="12.6" height="12.6" fill="#3c0099"/>
<rect x="1274.5" y="413.5" width="12.6" height="12.6" fill="#410099"/>
<rect x="1286.5" y="413.5" width="12.6" height="12.6" fill="#470099"/>
<rect x="1106.5" y="425.5" width="12.6" height="12.6" fill="#000099"/>
<rect x="1118.5" y="425.5" width="12.6" height="12.6" fill="#000099"/>
<rect x="1130.5" y="425.5" width="12.6" height="12.6" fill="#010099"/>
<rect x="1142.5" y="425.5" width="12.6" height="12.6" fill="#060099"/>
<rect x="1154.5" y="425.5" width="12.6" height="12.6" fill="#0b0099"/>
<rect x="1166.5" y="425.5" width="12.6" height="12.6" fill="#100099"/>
<rect x="1178.5" y="425.5" width="12.6" height="12.6" fill="#150099"/>
<rect x="1190.5" y="425.5" width="12.6" height="12.6" fill="#1a0099"/>
<rect x="1202.5" y="425.5" width="12.6" height="12.6" fill="#1f0099"/>
<rect x="1214.5" y="425.5" width="12.6" height="12.6" fill="#240099"/>
<rect x="1226.5" y="425.5" width="12.6" height="12.6" fill="#290099"/>
<rect x="1238.5" y="425.5" width="12.6" height="12.6" fill="#2e0099"/>
<rect x="1250.5" y="425.5" width="12.6" height="12.6" fill="#330099"/>
<rect x="1262.5" y="425.5" width="12.6" height="12.6" fill="#390099"/>
<rect x="1274.5" y="425.5" width="12.6" height="12.6" fill="#3e0099"/>
<rect x="1118.5" y="437.5" width="12.6" height="12.6" fill="#000099"/>
<rect x="1130.5" y="437.5" width="12.6" height="12.6" fill="#000099"/>
<rect x="1142.5" y="437.5" width="12.6" height="12.6" fill="#040099"/>
<rect x="1154.5" y="437.5" width="12.6" height="12.6" fill="#090099"/>
<rect x="1166.5" y="437.5" width="12.6" height="12.6" fill="#0e0099"/>
<rect x="1178.5" y="437.5" width="12.6" height="12.6" fill="#130099"/>
<rect x="1190.5" y="437.5" width="12.6" height="12.6" fill="#180099"/>
<rect x="1202.5" y="437.5" width="12.6" height="12.6" fill="#1c0099"/>
<rect x="1214.5" y="437.5" width="12.6" height="12.6" fill="#210099"/>
<rect x="1226.5" y="437.5" width="12.6" height="12.6" fill="#260099"/>
<rect x="1238.5" y="437.5" width="12.6" height="12.6" fill="#2b0099"/>
<rect x="1250.5" y="437.5" width="12.6" height="12.6" fill="#300099"/>
<rect x="1262.5" y="437.5" width="12.6" height="12.6" fill="#350099"/>
<rect x="1130.5" y="449.5" width="12.6" height="12.6" fill="#000099"/>
<rect x="1142.5" y="449.5" width="12.6" height="12.6" fill="#030099"/>
<rect x="1154.5" y="449.5" width="12.6" height="12.6" fill="#080099"/>
<rect x="1166.5" y="449.5" width="12.6" height="12.6" fill="#0c0099"/>
<rect x="1178.5" y="449.5" width="12.6" height="12.6" fill="#110099"/>
<rect x="1190.5" y="449.5" width="12.6" height="12.6" fill="#160099"/>
<rect x="1202.5" y="449.5" width="12.6" height="12.6" fill="#1a0099"/>
<rect x="1214.5" y="449.5" width="12.6" height="12.6" fill="#1f0099"/>
<rect x="1226.5" y="449.5" width="12.6" height="12.6" fill="#240099"/>
<rect x="1238.5" y="449.5" width="12.6" height="12.6" fill="#290099"/>
<rect x="1250.5" y="449.5" width="12.6" height="12.6" fill="#2e0099"/>
<rect x="1142.5" y="461.5" width="12.6" height="12.6" fill="#020099"/>
<rect x="1154.5" y="461.5" width="12.6" height="12.6" fill="#060099"/>
<rect x="1166.5" y="461.5" width="12.6" height="12.6" fill="#0b0099"/>
<rect x="1178.5" y="461.5" width="12.6" height="12.6" fill="#0f0099"/>
<rect x="1190.5" y="461.5" width="12.6" height="12.6" fill="#140099"/>
<rect x="1202.5" y="461.5" width="12.6" height="12.6" fill="#190099"/>
<rect x="1214.5" y="461.5" width="12.6" height="12.6" fill="#1d0099"/>
<rect x="1226.5" y="461.5" width="12.6" height="12.6" fill="#220099"/>
<rect x="1238.5" y="461.5" width="12.6" height="12.6" fill="#260099"/>
<rect x="1166.5" y="473.5" width="12.6" height="12.6" fill="#090099"/>
<rect x="1178.5" y="473.5" width="12.6" height="12.6" fill="#0e0099"/>
<rect x="1190.5" y="473.5" width="12.6" height="12.6" fill="#120099"/>
<rect x="1202.5" y="473.5" width="12.6" height="12.6" fill="#170099"/>
<rect x="1214.5" y="473.5" width="12.6" height="12.6" fill="#1b0099"/>
<rect x="1226.5" y="473.5" width="12.6" height="12.6" fill="#200099"/>
<rect x="1178.5" y="485.5" width="12.6" height="12.6" fill="#0c0099"/>
<rect x="1190.5" y="485.5" width="12.6" height="12.6" fill="#110099"/>
<rect x="1202.5" y="485.5" width="12.6" height="12.6" fill="#150099"/>
<rect x="1214.5" y="485.5" width="12.6" height="12.6" fill="#190099"/>
<rect x="1190.5" y="497.5" width="12.6" height="12.6" fill="#0f0099"/>
<rect x="1202.5" y="497.5" width="12.6" height="12.6" fill="#130099"/>
<polygon points="1049.1,71.8 1065.7,73.5 1052.3,85.3" fill="#0aff09" stroke="#0aff09" stroke-width="0.8"/>
<polygon points="1065.7,73.5 1068.9,86.9 1052.3,85.3" fill="#15ff12" stroke="#15ff12" stroke-width="0.8"/>
<polygon points="1052.3,85.3 1068.9,86.9 1055.5,98.7" fill="#0aff24" stroke="#0aff24" stroke-width="0.8"/>
<polygon points="1068.9,86.9 1072.1,100.4 1055.5,98.7" fill="#16ff2f" stroke="#16ff2f" stroke-width="0.8"/>
<polygon points="1055.5,98.7 1072.1,100.4 1058.7,112.1" fill="#0bff42" stroke="#0bff42" stroke-width="0.8"/>
<polygon points="1072.1,100.4 1075.3,113.8 1058.7,112.1" fill="#17ff4e" stroke="#17ff4e" stroke-width="0.8"/>
<polygon points="1058.7,112.1 1075.3,113.8 1061.9,125.6" fill="#0bff64" stroke="#0bff64" stroke-width="0.8"/>
<polygon points="1075.3,113.8 1078.5,127.2 1061.9,125.6" fill="#18ff71" stroke="#18ff71" stroke-width="0.8"/>
<polygon points="1061.9,125.6 1078.5,127.2 1065.1,139.0" fill="#0cff88" stroke="#0cff88" stroke-width="0.8"/>
<polygon points="1078.5,127.2 1081.7,140.7 1065.1,139.0" fill="#19ff98" stroke="#19ff98" stroke-width="0.8"/>
<polygon points="1065.1,139.0 1081.7,140.7 1068.3,152.4" fill="#0dffb1" stroke="#0dffb1" stroke-width="0.8"/>
<polygon points="1081.7,140.7 1084.9,154.1 1068.3,152.4" fill="#1affc3" stroke="#1affc3" stroke-width="0.8"/>
<polygon points="1068.3,152.4 1084.9,154.1 1071.5,165.9" fill="#0dffde" stroke="#0dffde" stroke-width="0.8"/>
<polygon points="1084.9,154.1 1088.1,167.5 1071.5,165.9" fill="#1cfff3" stroke="#1cfff3" stroke-width="0.8"/>
<polygon points="1071.5,165.9 1088.1,167.5 1074.7,179.3" fill="#0deeff" stroke="#0deeff" stroke-width="0.8"/>
<polygon points="1088.1,167.5 1091.3,181.0 1074.7,179.3" fill="#1adbff" stroke="#1adbff" stroke-width="0.8"/>
<polygon points="1074.7,179.3 1091.3,181.0 1077.9,192.7" fill="#0cc5ff" stroke="#0cc5ff" stroke-width="0.8"/>
<polygon points="1091.3,181.0 1094.5,194.4 1077.9,192.7" fill="#17b5ff" stroke="#17b5ff" stroke-width="0.8"/>
<polygon points="1077.9,192.7 1094.5,194.4 1081.1,206.2" fill="#0aa4ff" stroke="#0aa4ff" stroke-width="0.8"/>
<polygon points="1094.5,194.4 1097.7,207.8 1081.1,206.2" fill="#1497ff" stroke="#1497ff" stroke-width="0.8"/>
<polygon points="1081.1,206.2 1097.7,207.8 1084.3,219.6" fill="#098aff" stroke="#098aff" stroke-width="0.8"/>
<polygon points="1097.7,207.8 1100.9,221.3 1084.3,219.6" fill="#127fff" stroke="#127fff" stroke-width="0.8"/>
<polygon points="1084.3,219.6 1100.9,221.3 1087.5,233.0" fill="#0974ff" stroke="#0974ff" stroke-width="0.8"/>
<polygon points="1100.9,221.3 1104.1,234.7 1087.5,233.0" fill="#116bff" stroke="#116bff" stroke-width="0.8"/>
<polygon points="1087.5,233.0 1104.1,234.7 1090.7,246.5" fill="#0862ff" stroke="#0862ff" stroke-width="0.8"/>
<polygon points="1104.1,234.7 1107.3,248.1 1090.7,246.5" fill="#0f5aff" stroke="#0f5aff" stroke-width="0.8"/>
<polygon points="1090.7,246.5 1107.3,248.1 1093.9,259.9" fill="#0753ff" stroke="#0753ff" stroke-width="0.8"/>
<polygon points="1107.3,248.1 1110.5,261.6 1093.9,259.9" fill="#0e4cff" stroke="#0e4cff" stroke-width="0.8"/>
<polygon points="1093.9,259.9 1110.5,261.6 1097.1,273.3" fill="#0746ff" stroke="#0746ff" stroke-width="0.8"/>
<polygon points="1110.5,261.6 1113.7,275.0 1097.1,273.3" fill="#0d3fff" stroke="#0d3fff" stroke-width="0.8"/>
<polygon points="1097.1,273.3 1113.7,275.0 1100.3,286.8" fill="#063aff" stroke="#063aff" stroke-width="0.8"/>
<polygon points="1113.7,275.0 1116.9,288.4 1100.3,286.8" fill="#0c34ff" stroke="#0c34ff" stroke-width="0.8"/>
<polygon points="1100.3,286.8 1116.9,288.4 1103.5,300.2" fill="#0630ff" stroke="#0630ff" stroke-width="0.8"/>
<polygon points="1116.9,288.4 1120.1,301.9 1103.5,300.2" fill="#0c2bff" stroke="#0c2bff" stroke-width="0.8"/>
<polygon points="1103.5,300.2 1120.1,301.9 1106.7,313.6" fill="#0627ff" stroke="#0627ff" stroke-width="0.8"/>
<polygon points="1120.1,301.9 1123.3,315.3 1106.7,313.6" fill="#0b22ff" stroke="#0b22ff" stroke-width="0.8"/>
<polygon points="1106.7,313.6 1123.3,315.3 1109.9,327.1" fill="#051fff" stroke="#051fff" stroke-width="0.8"/>
<polygon points="1123.3,315.3 1126.5,328.7 1109.9,327.1" fill="#0a1bff" stroke="#0a1bff" stroke-width="0.8"/>
<polygon points="1109.9,327.1 1126.5,328.7 1113.1,340.5" fill="#0518ff" stroke="#0518ff" stroke-width="0.8"/>
<polygon points="1126.5,328.7 1129.7,342.2 1113.1,340.5" fill="#0a14ff" stroke="#0a14ff" stroke-width="0.8"/>
<polygon points="1113.1,340.5 1129.7,342.2 1116.3,353.9" fill="#0512ff" stroke="#0512ff" stroke-width="0.8"/>
<polygon points="1129.7,342.2 1132.9,355.6 1116.3,353.9" fill="#090eff" stroke="#090eff" stroke-width="0.8"/>
<polygon points="1116.3,353.9 1132.9,355.6 1119.5,367.4" fill="#050cff" stroke="#050cff" stroke-width="0.8"/>
<polygon points="1132.9,355.6 1136.1,369.0 1119.5,367.4" fill="#0908ff" stroke="#0908ff" stroke-width="0.8"/>
<polygon points="1119.5,367.4 1136.1,369.0 1122.7,380.8" fill="#0406ff" stroke="#0406ff" stroke-width="0.8"/>
<polygon points="1136.1,369.0 1139.3,382.5 1122.7,380.8" fill="#0903ff" stroke="#0903ff" stroke-width="0.8"/>
<polygon points="1122.7,380.8 1139.3,382.5 1125.9,394.2" fill="#0402ff" stroke="#0402ff" stroke-width="0.8"/>
<polygon points="1065.7,73.5 1082.2,75.2 1068.9,86.9" fill="#2aff09" stroke="#2aff09" stroke-width="0.8"/>
<polygon points="1082.2,75.2 1085.5,88.6 1068.9,86.9" fill="#36ff13" stroke="#36ff13" stroke-width="0.8"/>
<polygon points="1068.9,86.9 1085.5,88.6 1072.1,100.4" fill="#2cff26" stroke="#2cff26" stroke-width="0.8"/>
<polygon points="1085.5,88.6 1088.7,102.0 1072.1,100.4" fill="#39ff31" stroke="#39ff31" stroke-width="0.8"/>
<polygon points="1072.1,100.4 1088.7,102.0 1075.3,113.8" fill="#2eff46" stroke="#2eff46" stroke-width="0.8"/>
<polygon points="1088.7,102.0 1091.8,115.5 1075.3,113.8" fill="#3bff52" stroke="#3bff52" stroke-width="0.8"/>
<polygon points="1075.3,113.8 1091.8,115.5 1078.5,127.2" fill="#30ff69" stroke="#30ff69" stroke-width="0.8"/>
<polygon points="1091.8,115.5 1095.0,128.9 1078.5,127.2" fill="#3fff77" stroke="#3fff77" stroke-width="0.8"/>
<polygon points="1078.5,127.2 1095.0,128.9 1081.7,140.7" fill="#33ff90" stroke="#33ff90" stroke-width="0.8"/>
<polygon points="1095.0,128.9 1098.2,142.3 1081.7,140.7" fill="#42ffa1" stroke="#42ffa1" stroke-width="0.8"/>
<polygon points="1081.7,140.7 1098.2,142.3 1084.9,154.1" fill="#36ffbb" stroke="#36ffbb" stroke-width="0.8"/>
<polygon points="1098.2,142.3 1101.5,155.8 1084.9,154.1" fill="#46ffcf" stroke="#46ffcf" stroke-width="0.8"/>
<polygon points="1084.9,154.1 1101.5,155.8 1088.1,167.5" fill="#39ffec" stroke="#39ffec" stroke-width="0.8"/>
<polygon points="1101.5,155.8 1104.7,169.2 1088.1,167.5" fill="#49fbff" stroke="#49fbff" stroke-width="0.8"/>
<polygon points="1088.1,167.5 1104.7,169.2 1091.3,181.0" fill="#35e0ff" stroke="#35e0ff" stroke-width="0.8"/>
<polygon points="1104.7,169.2 1107.9,182.6 1091.3,181.0" fill="#40cdff" stroke="#40cdff" stroke-width="0.8"/>
<polygon points="1091.3,181.0 1107.9,182.6 1094.5,194.4" fill="#2fb8ff" stroke="#2fb8ff" stroke-width="0.8"/>
<polygon points="1107.9,182.6 1111.1,196.1 1094.5,194.4" fill="#39a9ff" stroke="#39a9ff" stroke-width="0.8"/>
<polygon points="1094.5,194.4 1111.1,196.1 1097.7,207.8" fill="#2a99ff" stroke="#2a99ff" stroke-width="0.8"/>
<polygon points="1111.1,196.1 1114.2,209.5 1097.7,207.8" fill="#338cff" stroke="#338cff" stroke-width="0.8"/>
<polygon points="1097.7,207.8 1114.2,209.5 1100.9,221.3" fill="#2680ff" stroke="#2680ff" stroke-width="0.8"/>
<polygon points="1114.2,209.5 1117.5,222.9 1100.9,221.3" fill="#2e75ff" stroke="#2e75ff" stroke-width="0.8"/>
<polygon points="1100.9,221.3 1117.5,222.9 1104.1,234.7" fill="#236bff" stroke="#236bff" stroke-width="0.8"/>
<polygon points="1117.5,222.9 1120.7,236.4 1104.1,234.7" fill="#2a62ff" stroke="#2a62ff" stroke-width="0.8"/>
<polygon points="1104.1,234.7 1120.7,236.4 1107.3,248.1" fill="#205aff" stroke="#205aff" stroke-width="0.8"/>
<polygon points="1120.7,236.4 1123.9,249.8 1107.3,248.1" fill="#2752ff" stroke="#2752ff" stroke-width="0.8"/>
<polygon points="1107.3,248.1 1123.9,249.8 1110.5,261.6" fill="#1d4bff" stroke="#1d4bff" stroke-width="0.8"/>
<polygon points="1123.9,249.8 1127.1,263.2 1110.5,261.6" fill="#2444ff" stroke="#2444ff" stroke-width="0.8"/>
<polygon points="1110.5,261.6 1127.1,263.2 1113.7,275.0" fill="#1b3eff" stroke="#1b3eff" stroke-width="0.8"/>
<polygon points="1127.1,263.2 1130.2,276.7 1113.7,275.0" fill="#2138ff" stroke="#2138ff" stroke-width="0.8"/>
<polygon points="1113.7,275.0 1130.2,276.7 1116.9,288.4" fill="#1a33ff" stroke="#1a33ff" stroke-width="0.8"/>
<polygon points="1130.2,276.7 1133.5,290.1 1116.9,288.4" fill="#1f2eff" stroke="#1f2eff" stroke-width="0.8"/>
<polygon points="1116.9,288.4 1133.5,290.1 1120.1,301.9" fill="#1829ff" stroke="#1829ff" stroke-width="0.8"/>
<polygon points="1133.5,290.1 1136.7,303.5 1120.1,301.9" fill="#1d24ff" stroke="#1d24ff" stroke-width="0.8"/>
<polygon points="1120.1,301.9 1136.7,303.5 1123.3,315.3" fill="#1721ff" stroke="#1721ff" stroke-width="0.8"/>
<polygon points="1136.7,303.5 1139.9,317.0 1123.3,315.3" fill="#1c1cff" stroke="#1c1cff" stroke-width="0.8"/>
<polygon points="1123.3,315.3 1139.9,317.0 1126.5,328.7" fill="#1519ff" stroke="#1519ff" stroke-width="0.8"/>
<polygon points="1139.9,317.0 1143.1,330.4 1126.5,328.7" fill="#1a15ff" stroke="#1a15ff" stroke-width="0.8"/>
<polygon points="1126.5,328.7 1143.1,330.4 1129.7,342.2" fill="#1412ff" stroke="#1412ff" stroke-width="0.8"/>
<polygon points="1143.1,330.4 1146.3,343.8 1129.7,342.2" fill="#190fff" stroke="#190fff" stroke-width="0.8"/>
<polygon points="1129.7,342.2 1146.3,343.8 1132.9,355.6" fill="#130cff" stroke="#130cff" stroke-width="0.8"/>
<polygon points="1146.3,343.8 1149.5,357.3 1132.9,355.6" fill="#1809ff" stroke="#1809ff" stroke-width="0.8"/>
<polygon points="1132.9,355.6 1149.5,357.3 1136.1,369.0" fill="#1207ff" stroke="#1207ff" stroke-width="0.8"/>
<polygon points="1149.5,357.3 1152.7,370.7 1136.1,369.0" fill="#1703ff" stroke="#1703ff" stroke-width="0.8"/>
<polygon points="1136.1,369.0 1152.7,370.7 1139.3,382.5" fill="#1202ff" stroke="#1202ff" stroke-width="0.8"/>
<polygon points="1082.2,75.2 1098.8,76.8 1085.5,88.6" fill="#4dff09" stroke="#4dff09" stroke-width="0.8"/>
<polygon points="1098.8,76.8 1102.0,90.3 1085.5,88.6" fill="#5aff14" stroke="#5aff14" stroke-width="0.8"/>
<polygon points="1085.5,88.6 1102.0,90.3 1088.7,102.0" fill="#50ff28" stroke="#50ff28" stroke-width="0.8"/>
<polygon points="1102.0,90.3 1105.2,103.7 1088.7,102.0" fill="#5fff34" stroke="#5fff34" stroke-width="0.8"/>
<polygon points="1088.7,102.0 1105.2,103.7 1091.8,115.5" fill="#55ff49" stroke="#55ff49" stroke-width="0.8"/>
<polygon points="1105.2,103.7 1108.4,117.1 1091.8,115.5" fill="#64ff57" stroke="#64ff57" stroke-width="0.8"/>
<polygon points="1091.8,115.5 1108.4,117.1 1095.0,128.9" fill="#59ff6f" stroke="#59ff6f" stroke-width="0.8"/>
<polygon points="1108.4,117.1 1111.6,130.6 1095.0,128.9" fill="#6aff7e" stroke="#6aff7e" stroke-width="0.8"/>
<polygon points="1095.0,128.9 1111.6,130.6 1098.2,142.3" fill="#5eff98" stroke="#5eff98" stroke-width="0.8"/>
<polygon points="1111.6,130.6 1114.8,144.0 1098.2,142.3" fill="#70ffaa" stroke="#70ffaa" stroke-width="0.8"/>
<polygon points="1098.2,142.3 1114.8,144.0 1101.5,155.8" fill="#64ffc7" stroke="#64ffc7" stroke-width="0.8"/>
<polygon points="1114.8,144.0 1118.0,157.4 1101.5,155.8" fill="#77ffdc" stroke="#77ffdc" stroke-width="0.8"/>
<polygon points="1101.5,155.8 1118.0,157.4 1104.7,169.2" fill="#6bfffb" stroke="#6bfffb" stroke-width="0.8"/>
<polygon points="1118.0,157.4 1121.2,170.9 1104.7,169.2" fill="#76ebff" stroke="#76ebff" stroke-width="0.8"/>
<polygon points="1104.7,169.2 1121.2,170.9 1107.9,182.6" fill="#5ed1ff" stroke="#5ed1ff" stroke-width="0.8"/>
<polygon points="1121.2,170.9 1124.4,184.3 1107.9,182.6" fill="#66bfff" stroke="#66bfff" stroke-width="0.8"/>
<polygon points="1107.9,182.6 1124.4,184.3 1111.1,196.1" fill="#52abff" stroke="#52abff" stroke-width="0.8"/>
<polygon points="1124.4,184.3 1127.6,197.7 1111.1,196.1" fill="#5a9cff" stroke="#5a9cff" stroke-width="0.8"/>
<polygon points="1111.1,196.1 1127.6,197.7 1114.2,209.5" fill="#498dff" stroke="#498dff" stroke-width="0.8"/>
<polygon points="1127.6,197.7 1130.8,211.2 1114.2,209.5" fill="#5181ff" stroke="#5181ff" stroke-width="0.8"/>
<polygon points="1114.2,209.5 1130.8,211.2 1117.5,222.9" fill="#4275ff" stroke="#4275ff" stroke-width="0.8"/>
<polygon points="1130.8,211.2 1134.0,224.6 1117.5,222.9" fill="#496bff" stroke="#496bff" stroke-width="0.8"/>
<polygon points="1117.5,222.9 1134.0,224.6 1120.7,236.4" fill="#3c62ff" stroke="#3c62ff" stroke-width="0.8"/>
<polygon points="1134.0,224.6 1137.2,238.0 1120.7,236.4" fill="#4359ff" stroke="#4359ff" stroke-width="0.8"/>
<polygon points="1120.7,236.4 1137.2,238.0 1123.9,249.8" fill="#3851ff" stroke="#3851ff" stroke-width="0.8"/>
<polygon points="1137.2,238.0 1140.4,251.5 1123.9,249.8" fill="#3e49ff" stroke="#3e49ff" stroke-width="0.8"/>
<polygon points="1123.9,249.8 1140.4,251.5 1127.1,263.2" fill="#3343ff" stroke="#3343ff" stroke-width="0.8"/>
<polygon points="1140.4,251.5 1143.6,264.9 1127.1,263.2" fill="#393cff" stroke="#393cff" stroke-width="0.8"/>
<polygon points="1127.1,263.2 1143.6,264.9 1130.2,276.7" fill="#3037ff" stroke="#3037ff" stroke-width="0.8"/>
<polygon points="1143.6,264.9 1146.8,278.3 1130.2,276.7" fill="#3531ff" stroke="#3531ff" stroke-width="0.8"/>
<polygon points="1130.2,276.7 1146.8,278.3 1133.5,290.1" fill="#2d2cff" stroke="#2d2cff" stroke-width="0.8"/>
<polygon points="1146.8,278.3 1150.0,291.8 1133.5,290.1" fill="#3227ff" stroke="#3227ff" stroke-width="0.8"/>
<polygon points="1133.5,290.1 1150.0,291.8 1136.7,303.5" fill="#2a23ff" stroke="#2a23ff" stroke-width="0.8"/>
<polygon points="1150.0,291.8 1153.2,305.2 1136.7,303.5" fill="#2f1eff" stroke="#2f1eff" stroke-width="0.8"/>
<polygon points="1136.7,303.5 1153.2,305.2 1139.9,317.0" fill="#281bff" stroke="#281bff" stroke-width="0.8"/>
<polygon points="1153.2,305.2 1156.4,318.6 1139.9,317.0" fill="#2c16ff" stroke="#2c16ff" stroke-width="0.8"/>
<polygon points="1139.9,317.0 1156.4,318.6 1143.1,330.4" fill="#2513ff" stroke="#2513ff" stroke-width="0.8"/>
<polygon points="1156.4,318.6 1159.6,332.1 1143.1,330.4" fill="#2a0fff" stroke="#2a0fff" stroke-width="0.8"/>
<polygon points="1143.1,330.4 1159.6,332.1 1146.3,343.8" fill="#230dff" stroke="#230dff" stroke-width="0.8"/>
<polygon points="1159.6,332.1 1162.8,345.5 1146.3,343.8" fill="#2809ff" stroke="#2809ff" stroke-width="0.8"/>
<polygon points="1146.3,343.8 1162.8,345.5 1149.5,357.3" fill="#2207ff" stroke="#2207ff" stroke-width="0.8"/>
<polygon points="1162.8,345.5 1166.0,358.9 1149.5,357.3" fill="#2603ff" stroke="#2603ff" stroke-width="0.8"/>
<polygon points="1149.5,357.3 1166.0,358.9 1152.7,370.7" fill="#2002ff" stroke="#2002ff" stroke-width="0.8"/>
<polygon points="1098.8,76.8 1115.4,78.5 1102.0,90.3" fill="#73ff0a" stroke="#73ff0a" stroke-width="0.8"/>
<polygon points="1115.4,78.5 1118.6,91.9 1102.0,90.3" fill="#83ff15" stroke="#83ff15" stroke-width="0.8"/>
<polygon points="1102.0,90.3 1118.6,91.9 1105.2,103.7" fill="#79ff2a" stroke="#79ff2a" stroke-width="0.8"/>
<polygon points="1118.6,91.9 1121.8,105.4 1105.2,103.7" fill="#8aff36" stroke="#8aff36" stroke-width="0.8"/>
<polygon points="1105.2,103.7 1121.8,105.4 1108.4,117.1" fill="#7fff4d" stroke="#7fff4d" stroke-width="0.8"/>
<polygon points="1121.8,105.4 1125.0,118.8 1108.4,117.1" fill="#91ff5c" stroke="#91ff5c" stroke-width="0.8"/>
<polygon points="1108.4,117.1 1125.0,118.8 1111.6,130.6" fill="#87ff75" stroke="#87ff75" stroke-width="0.8"/>
<polygon points="1125.0,118.8 1128.2,132.2 1111.6,130.6" fill="#9aff86" stroke="#9aff86" stroke-width="0.8"/>
<polygon points="1111.6,130.6 1128.2,132.2 1114.8,144.0" fill="#8fffa1" stroke="#8fffa1" stroke-width="0.8"/>
<polygon points="1128.2,132.2 1131.4,145.7 1114.8,144.0" fill="#a4ffb5" stroke="#a4ffb5" stroke-width="0.8"/>
<polygon points="1114.8,144.0 1131.4,145.7 1118.0,157.4" fill="#98ffd3" stroke="#98ffd3" stroke-width="0.8"/>
<polygon points="1131.4,145.7 1134.6,159.1 1118.0,157.4" fill="#afffeb" stroke="#afffeb" stroke-width="0.8"/>
<polygon points="1118.0,157.4 1134.6,159.1 1121.2,170.9" fill="#9bf2ff" stroke="#9bf2ff" stroke-width="0.8"/>
<polygon points="1134.6,159.1 1137.8,172.5 1121.2,170.9" fill="#a2dbff" stroke="#a2dbff" stroke-width="0.8"/>
<polygon points="1121.2,170.9 1137.8,172.5 1124.4,184.3" fill="#86c2ff" stroke="#86c2ff" stroke-width="0.8"/>
<polygon points="1137.8,172.5 1141.0,186.0 1124.4,184.3" fill="#8db1ff" stroke="#8db1ff" stroke-width="0.8"/>
<polygon points="1124.4,184.3 1141.0,186.0 1127.6,197.7" fill="#769eff" stroke="#769eff" stroke-width="0.8"/>
<polygon points="1141.0,186.0 1144.2,199.4 1127.6,197.7" fill="#7c90ff" stroke="#7c90ff" stroke-width="0.8"/>
<polygon points="1127.6,197.7 1144.2,199.4 1130.8,211.2" fill="#6982ff" stroke="#6982ff" stroke-width="0.8"/>
<polygon points="1144.2,199.4 1147.4,212.8 1130.8,211.2" fill="#6f76ff" stroke="#6f76ff" stroke-width="0.8"/>
<polygon points="1130.8,211.2 1147.4,212.8 1134.0,224.6" fill="#5f6bff" stroke="#5f6bff" stroke-width="0.8"/>
<polygon points="1147.4,212.8 1150.6,226.3 1134.0,224.6" fill="#6561ff" stroke="#6561ff" stroke-width="0.8"/>
<polygon points="1134.0,224.6 1150.6,226.3 1137.2,238.0" fill="#5658ff" stroke="#5658ff" stroke-width="0.8"/>
<polygon points="1150.6,226.3 1153.8,239.7 1137.2,238.0" fill="#5c4fff" stroke="#5c4fff" stroke-width="0.8"/>
<polygon points="1137.2,238.0 1153.8,239.7 1140.4,251.5" fill="#4f48ff" stroke="#4f48ff" stroke-width="0.8"/>
<polygon points="1153.8,239.7 1157.0,253.1 1140.4,251.5" fill="#5541ff" stroke="#5541ff" stroke-width="0.8"/>
<polygon points="1140.4,251.5 1157.0,253.1 1143.6,264.9" fill="#493bff" stroke="#493bff" stroke-width="0.8"/>
<polygon points="1157.0,253.1 1160.2,266.6 1143.6,264.9" fill="#4f34ff" stroke="#4f34ff" stroke-width="0.8"/>
<polygon points="1143.6,264.9 1160.2,266.6 1146.8,278.3" fill="#442fff" stroke="#442fff" stroke-width="0.8"/>
<polygon points="1160.2,266.6 1163.4,280.0 1146.8,278.3" fill="#4929ff" stroke="#4929ff" stroke-width="0.8"/>
<polygon points="1146.8,278.3 1163.4,280.0 1150.0,291.8" fill="#4025ff" stroke="#4025ff" stroke-width="0.8"/>
<polygon points="1163.4,280.0 1166.6,293.4 1150.0,291.8" fill="#4520ff" stroke="#4520ff" stroke-width="0.8"/>
<polygon points="1150.0,291.8 1166.6,293.4 1153.2,305.2" fill="#3c1cff" stroke="#3c1cff" stroke-width="0.8"/>
<polygon points="1166.6,293.4 1169.8,306.9 1153.2,305.2" fill="#4118ff" stroke="#4118ff" stroke-width="0.8"/>
<polygon points="1153.2,305.2 1169.8,306.9 1156.4,318.6" fill="#3815ff" stroke="#3815ff" stroke-width="0.8"/>
<polygon points="1169.8,306.9 1173.0,320.3 1156.4,318.6" fill="#3d10ff" stroke="#3d10ff" stroke-width="0.8"/>
<polygon points="1156.4,318.6 1173.0,320.3 1159.6,332.1" fill="#350eff" stroke="#350eff" stroke-width="0.8"/>
<polygon points="1173.0,320.3 1176.2,333.7 1159.6,332.1" fill="#3a0aff" stroke="#3a0aff" stroke-width="0.8"/>
<polygon points="1159.6,332.1 1176.2,333.7 1162.8,345.5" fill="#3307ff" stroke="#3307ff" stroke-width="0.8"/>
<polygon points="1176.2,333.7 1179.4,347.2 1162.8,345.5" fill="#3704ff" stroke="#3704ff" stroke-width="0.8"/>
<polygon points="1162.8,345.5 1179.4,347.2 1166.0,358.9" fill="#3002ff" stroke="#3002ff" stroke-width="0.8"/>
<polygon points="1115.4,78.5 1132.0,80.2 1118.6,91.9" fill="#9dff0a" stroke="#9dff0a" stroke-width="0.8"/>
<polygon points="1132.0,80.2 1135.2,93.6 1118.6,91.9" fill="#afff16" stroke="#afff16" stroke-width="0.8"/>
<polygon points="1118.6,91.9 1135.2,93.6 1121.8,105.4" fill="#a6ff2c" stroke="#a6ff2c" stroke-width="0.8"/>
<polygon points="1135.2,93.6 1138.4,107.0 1121.8,105.4" fill="#b9ff39" stroke="#b9ff39" stroke-width="0.8"/>
<polygon points="1121.8,105.4 1138.4,107.0 1125.0,118.8" fill="#afff52" stroke="#afff52" stroke-width="0.8"/>
<polygon points="1138.4,107.0 1141.6,120.5 1125.0,118.8" fill="#c4ff61" stroke="#c4ff61" stroke-width="0.8"/>
<polygon points="1125.0,118.8 1141.6,120.5 1128.2,132.2" fill="#baff7c" stroke="#baff7c" stroke-width="0.8"/>
<polygon points="1141.6,120.5 1144.8,133.9 1128.2,132.2" fill="#d1ff8e" stroke="#d1ff8e" stroke-width="0.8"/>
<polygon points="1128.2,132.2 1144.8,133.9 1131.4,145.7" fill="#c6ffac" stroke="#c6ffac" stroke-width="0.8"/>
<polygon points="1144.8,133.9 1148.0,147.3 1131.4,145.7" fill="#dfffc1" stroke="#dfffc1" stroke-width="0.8"/>
<polygon points="1131.4,145.7 1148.0,147.3 1134.6,159.1" fill="#d4ffe2" stroke="#d4ffe2" stroke-width="0.8"/>
<polygon points="1148.0,147.3 1151.2,160.8 1134.6,159.1" fill="#effffc" stroke="#effffc" stroke-width="0.8"/>
<polygon points="1134.6,159.1 1151.2,160.8 1137.8,172.5" fill="#c9e1ff" stroke="#c9e1ff" stroke-width="0.8"/>
<polygon points="1151.2,160.8 1154.4,174.2 1137.8,172.5" fill="#cecbff" stroke="#cecbff" stroke-width="0.8"/>
<polygon points="1137.8,172.5 1154.4,174.2 1141.0,186.0" fill="#aeb4ff" stroke="#aeb4ff" stroke-width="0.8"/>
<polygon points="1154.4,174.2 1157.6,187.6 1141.0,186.0" fill="#b3a3ff" stroke="#b3a3ff" stroke-width="0.8"/>
<polygon points="1141.0,186.0 1157.6,187.6 1144.2,199.4" fill="#9991ff" stroke="#9991ff" stroke-width="0.8"/>
<polygon points="1157.6,187.6 1160.8,201.1 1144.2,199.4" fill="#9e84ff" stroke="#9e84ff" stroke-width="0.8"/>
<polygon points="1144.2,199.4 1160.8,201.1 1147.4,212.8" fill="#8876ff" stroke="#8876ff" stroke-width="0.8"/>
<polygon points="1160.8,201.1 1164.0,214.5 1147.4,212.8" fill="#8e6bff" stroke="#8e6bff" stroke-width="0.8"/>
<polygon points="1147.4,212.8 1164.0,214.5 1150.6,226.3" fill="#7b61ff" stroke="#7b61ff" stroke-width="0.8"/>
<polygon points="1164.0,214.5 1167.2,227.9 1150.6,226.3" fill="#8157ff" stroke="#8157ff" stroke-width="0.8"/>
<polygon points="1150.6,226.3 1167.2,227.9 1153.8,239.7" fill="#704fff" stroke="#704fff" stroke-width="0.8"/>
<polygon points="1167.2,227.9 1170.4,241.4 1153.8,239.7" fill="#7646ff" stroke="#7646ff" stroke-width="0.8"/>
<polygon points="1153.8,239.7 1170.4,241.4 1157.0,253.1" fill="#6740ff" stroke="#6740ff" stroke-width="0.8"/>
<polygon points="1170.4,241.4 1173.6,254.8 1157.0,253.1" fill="#6c38ff" stroke="#6c38ff" stroke-width="0.8"/>
<polygon points="1157.0,253.1 1173.6,254.8 1160.2,266.6" fill="#5f33ff" stroke="#5f33ff" stroke-width="0.8"/>
<polygon points="1173.6,254.8 1176.8,268.2 1160.2,266.6" fill="#642cff" stroke="#642cff" stroke-width="0.8"/>
<polygon points="1160.2,266.6 1176.8,268.2 1163.4,280.0" fill="#5928ff" stroke="#5928ff" stroke-width="0.8"/>
<polygon points="1176.8,268.2 1180.0,281.7 1163.4,280.0" fill="#5d22ff" stroke="#5d22ff" stroke-width="0.8"/>
<polygon points="1163.4,280.0 1180.0,281.7 1166.6,293.4" fill="#531eff" stroke="#531eff" stroke-width="0.8"/>
<polygon points="1180.0,281.7 1183.2,295.1 1166.6,293.4" fill="#5819ff" stroke="#5819ff" stroke-width="0.8"/>
<polygon points="1166.6,293.4 1183.2,295.1 1169.8,306.9" fill="#4e16ff" stroke="#4e16ff" stroke-width="0.8"/>
<polygon points="1183.2,295.1 1186.4,308.5 1169.8,306.9" fill="#5211ff" stroke="#5211ff" stroke-width="0.8"/>
<polygon points="1169.8,306.9 1186.4,308.5 1173.0,320.3" fill="#490eff" stroke="#490eff" stroke-width="0.8"/>
<polygon points="1186.4,308.5 1189.6,322.0 1173.0,320.3" fill="#4e0aff" stroke="#4e0aff" stroke-width="0.8"/>
<polygon points="1173.0,320.3 1189.6,322.0 1176.2,333.7" fill="#4508ff" stroke="#4508ff" stroke-width="0.8"/>
<polygon points="1189.6,322.0 1192.8,335.4 1176.2,333.7" fill="#4904ff" stroke="#4904ff" stroke-width="0.8"/>
<polygon points="1176.2,333.7 1192.8,335.4 1179.4,347.2" fill="#4202ff" stroke="#4202ff" stroke-width="0.8"/>
<polygon points="1132.0,80.2 1148.5,81.8 1135.2,93.6" fill="#ccff0b" stroke="#ccff0b" stroke-width="0.8"/>
<polygon points="1148.5,81.8 1151.8,95.3 1135.2,93.6" fill="#e1ff17" stroke="#e1ff17" stroke-width="0.8"/>
<polygon points="1135.2,93.6 1151.8,95.3 1138.4,107.0" fill="#d8ff2f" stroke="#d8ff2f" stroke-width="0.8"/>
<polygon points="1151.8,95.3 1155.0,108.7 1138.4,107.0" fill="#eeff3d" stroke="#eeff3d" stroke-width="0.8"/>
<polygon points="1138.4,107.0 1155.0,108.7 1141.6,120.5" fill="#e5ff57" stroke="#e5ff57" stroke-width="0.8"/>
<polygon points="1155.0,108.7 1158.2,122.1 1141.6,120.5" fill="#feff67" stroke="#feff67" stroke-width="0.8"/>
<polygon points="1141.6,120.5 1158.2,122.1 1144.8,133.9" fill="#f4ff84" stroke="#f4ff84" stroke-width="0.8"/>
<polygon points="1158.2,122.1 1161.3,135.6 1144.8,133.9" fill="#fff08f" stroke="#fff08f" stroke-width="0.8"/>
<polygon points="1144.8,133.9 1161.3,135.6 1148.0,147.3" fill="#fff9b4" stroke="#fff9b4" stroke-width="0.8"/>
<polygon points="1161.3,135.6 1164.5,149.0 1148.0,147.3" fill="#ffe0b6" stroke="#ffe0b6" stroke-width="0.8"/>
<polygon points="1148.0,147.3 1164.5,149.0 1151.2,160.8" fill="#ffe8dd" stroke="#ffe8dd" stroke-width="0.8"/>
<polygon points="1164.5,149.0 1167.8,162.5 1151.2,160.8" fill="#ffcfdd" stroke="#ffcfdd" stroke-width="0.8"/>
<polygon points="1151.2,160.8 1167.8,162.5 1154.4,174.2" fill="#f8d0ff" stroke="#f8d0ff" stroke-width="0.8"/>
<polygon points="1167.8,162.5 1171.0,175.9 1154.4,174.2" fill="#fabbff" stroke="#fabbff" stroke-width="0.8"/>
<polygon points="1154.4,174.2 1171.0,175.9 1157.6,187.6" fill="#d6a5ff" stroke="#d6a5ff" stroke-width="0.8"/>
<polygon points="1171.0,175.9 1174.2,189.3 1157.6,187.6" fill="#d995ff" stroke="#d995ff" stroke-width="0.8"/>
<polygon points="1157.6,187.6 1174.2,189.3 1160.8,201.1" fill="#bc85ff" stroke="#bc85ff" stroke-width="0.8"/>
<polygon points="1174.2,189.3 1177.3,202.8 1160.8,201.1" fill="#c077ff" stroke="#c077ff" stroke-width="0.8"/>
<polygon points="1160.8,201.1 1177.3,202.8 1164.0,214.5" fill="#a86bff" stroke="#a86bff" stroke-width="0.8"/>
<polygon points="1177.3,202.8 1180.5,216.2 1164.0,214.5" fill="#ac60ff" stroke="#ac60ff" stroke-width="0.8"/>
<polygon points="1164.0,214.5 1180.5,216.2 1167.2,227.9" fill="#9856ff" stroke="#9856ff" stroke-width="0.8"/>
<polygon points="1180.5,216.2 1183.8,229.6 1167.2,227.9" fill="#9c4dff" stroke="#9c4dff" stroke-width="0.8"/>
<polygon points="1167.2,227.9 1183.8,229.6 1170.4,241.4" fill="#8a45ff" stroke="#8a45ff" stroke-width="0.8"/>
<polygon points="1183.8,229.6 1187.0,243.1 1170.4,241.4" fill="#8f3dff" stroke="#8f3dff" stroke-width="0.8"/>
<polygon points="1170.4,241.4 1187.0,243.1 1173.6,254.8" fill="#7f37ff" stroke="#7f37ff" stroke-width="0.8"/>
<polygon points="1187.0,243.1 1190.2,256.5 1173.6,254.8" fill="#8330ff" stroke="#8330ff" stroke-width="0.8"/>
<polygon points="1173.6,254.8 1190.2,256.5 1176.8,268.2" fill="#762bff" stroke="#762bff" stroke-width="0.8"/>
<polygon points="1190.2,256.5 1193.4,269.9 1176.8,268.2" fill="#7a25ff" stroke="#7a25ff" stroke-width="0.8"/>
<polygon points="1176.8,268.2 1193.4,269.9 1180.0,281.7" fill="#6d20ff" stroke="#6d20ff" stroke-width="0.8"/>
<polygon points="1193.4,269.9 1196.6,283.4 1180.0,281.7" fill="#721bff" stroke="#721bff" stroke-width="0.8"/>
<polygon points="1180.0,281.7 1196.6,283.4 1183.2,295.1" fill="#6617ff" stroke="#6617ff" stroke-width="0.8"/>
<polygon points="1196.6,283.4 1199.8,296.8 1183.2,295.1" fill="#6a12ff" stroke="#6a12ff" stroke-width="0.8"/>
<polygon points="1183.2,295.1 1199.8,296.8 1186.4,308.5" fill="#600fff" stroke="#600fff" stroke-width="0.8"/>
<polygon points="1199.8,296.8 1203.0,310.2 1186.4,308.5" fill="#640bff" stroke="#640bff" stroke-width="0.8"/>
<polygon points="1186.4,308.5 1203.0,310.2 1189.6,322.0" fill="#5a08ff" stroke="#5a08ff" stroke-width="0.8"/>
<polygon points="1203.0,310.2 1206.2,323.7 1189.6,322.0" fill="#5e04ff" stroke="#5e04ff" stroke-width="0.8"/>
<polygon points="1189.6,322.0 1206.2,323.7 1192.8,335.4" fill="#5502ff" stroke="#5502ff" stroke-width="0.8"/>
<polygon points="1148.5,81.8 1165.1,83.5 1151.8,95.3" fill="#fffe0c" stroke="#fffe0c" stroke-width="0.8"/>
<polygon points="1165.1,83.5 1168.3,97.0 1151.8,95.3" fill="#ffe816" stroke="#ffe816" stroke-width="0.8"/>
<polygon points="1151.8,95.3 1168.3,97.0 1155.0,108.7" fill="#ffef2f" stroke="#ffef2f" stroke-width="0.8"/>
<polygon points="1168.3,97.0 1171.5,110.4 1155.0,108.7" fill="#ffda37" stroke="#ffda37" stroke-width="0.8"/>
<polygon points="1155.0,108.7 1171.5,110.4 1158.2,122.1" fill="#ffe151" stroke="#ffe151" stroke-width="0.8"/>
<polygon points="1171.5,110.4 1174.7,123.8 1158.2,122.1" fill="#ffcc58" stroke="#ffcc58" stroke-width="0.8"/>
<polygon points="1158.2,122.1 1174.7,123.8 1161.3,135.6" fill="#ffd274" stroke="#ffd274" stroke-width="0.8"/>
<polygon points="1174.7,123.8 1177.9,137.3 1161.3,135.6" fill="#ffbe7a" stroke="#ffbe7a" stroke-width="0.8"/>
<polygon points="1161.3,135.6 1177.9,137.3 1164.5,149.0" fill="#ffc397" stroke="#ffc397" stroke-width="0.8"/>
<polygon points="1177.9,137.3 1181.1,150.7 1164.5,149.0" fill="#ffb09b" stroke="#ffb09b" stroke-width="0.8"/>
<polygon points="1164.5,149.0 1181.1,150.7 1167.8,162.5" fill="#ffb5ba" stroke="#ffb5ba" stroke-width="0.8"/>
<polygon points="1181.1,150.7 1184.3,164.1 1167.8,162.5" fill="#ffa2bc" stroke="#ffa2bc" stroke-width="0.8"/>
<polygon points="1167.8,162.5 1184.3,164.1 1171.0,175.9" fill="#ffa6dd" stroke="#ffa6dd" stroke-width="0.8"/>
<polygon points="1184.3,164.1 1187.5,177.6 1171.0,175.9" fill="#ff94dd" stroke="#ff94dd" stroke-width="0.8"/>
<polygon points="1171.0,175.9 1187.5,177.6 1174.2,189.3" fill="#fe97ff" stroke="#fe97ff" stroke-width="0.8"/>
<polygon points="1187.5,177.6 1190.7,191.0 1174.2,189.3" fill="#ff87fe" stroke="#ff87fe" stroke-width="0.8"/>
<polygon points="1174.2,189.3 1190.7,191.0 1177.3,202.8" fill="#df78ff" stroke="#df78ff" stroke-width="0.8"/>
<polygon points="1190.7,191.0 1193.9,204.4 1177.3,202.8" fill="#e26bff" stroke="#e26bff" stroke-width="0.8"/>
<polygon points="1177.3,202.8 1193.9,204.4 1180.5,216.2" fill="#c75fff" stroke="#c75fff" stroke-width="0.8"/>
<polygon points="1193.9,204.4 1197.1,217.9 1180.5,216.2" fill="#cb55ff" stroke="#cb55ff" stroke-width="0.8"/>
<polygon points="1180.5,216.2 1197.1,217.9 1183.8,229.6" fill="#b44cff" stroke="#b44cff" stroke-width="0.8"/>
<polygon points="1197.1,217.9 1200.3,231.3 1183.8,229.6" fill="#b843ff" stroke="#b843ff" stroke-width="0.8"/>
<polygon points="1183.8,229.6 1200.3,231.3 1187.0,243.1" fill="#a43cff" stroke="#a43cff" stroke-width="0.8"/>
<polygon points="1200.3,231.3 1203.5,244.7 1187.0,243.1" fill="#a834ff" stroke="#a834ff" stroke-width="0.8"/>
<polygon points="1187.0,243.1 1203.5,244.7 1190.2,256.5" fill="#972eff" stroke="#972eff" stroke-width="0.8"/>
<polygon points="1203.5,244.7 1206.7,258.2 1190.2,256.5" fill="#9b27ff" stroke="#9b27ff" stroke-width="0.8"/>
<polygon points="1190.2,256.5 1206.7,258.2 1193.4,269.9" fill="#8c23ff" stroke="#8c23ff" stroke-width="0.8"/>
<polygon points="1206.7,258.2 1209.9,271.6 1193.4,269.9" fill="#8f1dff" stroke="#8f1dff" stroke-width="0.8"/>
<polygon points="1193.4,269.9 1209.9,271.6 1196.6,283.4" fill="#8219ff" stroke="#8219ff" stroke-width="0.8"/>
<polygon points="1209.9,271.6 1213.1,285.0 1196.6,283.4" fill="#8613ff" stroke="#8613ff" stroke-width="0.8"/>
<polygon points="1196.6,283.4 1213.1,285.0 1199.8,296.8" fill="#7910ff" stroke="#7910ff" stroke-width="0.8"/>
<polygon points="1213.1,285.0 1216.3,298.5 1199.8,296.8" fill="#7d0bff" stroke="#7d0bff" stroke-width="0.8"/>
<polygon points="1199.8,296.8 1216.3,298.5 1203.0,310.2" fill="#7209ff" stroke="#7209ff" stroke-width="0.8"/>
<polygon points="1216.3,298.5 1219.5,311.9 1203.0,310.2" fill="#7604ff" stroke="#7604ff" stroke-width="0.8"/>
<polygon points="1203.0,310.2 1219.5,311.9 1206.2,323.7" fill="#6b02ff" stroke="#6b02ff" stroke-width="0.8"/>
<polygon points="1165.1,83.5 1181.7,85.2 1168.3,97.0" fill="#ffcf0a" stroke="#ffcf0a" stroke-width="0.8"/>
<polygon points="1181.7,85.2 1184.9,98.6 1168.3,97.0" fill="#ffbe13" stroke="#ffbe13" stroke-width="0.8"/>
<polygon points="1168.3,97.0 1184.9,98.6 1171.5,110.4" fill="#ffc228" stroke="#ffc228" stroke-width="0.8"/>
<polygon points="1184.9,98.6 1188.1,112.1 1171.5,110.4" fill="#ffb130" stroke="#ffb130" stroke-width="0.8"/>
<polygon points="1171.5,110.4 1188.1,112.1 1174.7,123.8" fill="#ffb546" stroke="#ffb546" stroke-width="0.8"/>
<polygon points="1188.1,112.1 1191.3,125.5 1174.7,123.8" fill="#ffa54d" stroke="#ffa54d" stroke-width="0.8"/>
<polygon points="1174.7,123.8 1191.3,125.5 1177.9,137.3" fill="#ffa965" stroke="#ffa965" stroke-width="0.8"/>
<polygon points="1191.3,125.5 1194.5,138.9 1177.9,137.3" fill="#ff996a" stroke="#ff996a" stroke-width="0.8"/>
<polygon points="1177.9,137.3 1194.5,138.9 1181.1,150.7" fill="#ff9c83" stroke="#ff9c83" stroke-width="0.8"/>
<polygon points="1194.5,138.9 1197.7,152.4 1181.1,150.7" fill="#ff8d87" stroke="#ff8d87" stroke-width="0.8"/>
<polygon points="1181.1,150.7 1197.7,152.4 1184.3,164.1" fill="#ff8fa1" stroke="#ff8fa1" stroke-width="0.8"/>
<polygon points="1197.7,152.4 1200.9,165.8 1184.3,164.1" fill="#ff81a4" stroke="#ff81a4" stroke-width="0.8"/>
<polygon points="1184.3,164.1 1200.9,165.8 1187.5,177.6" fill="#ff83bf" stroke="#ff83bf" stroke-width="0.8"/>
<polygon points="1200.9,165.8 1204.1,179.2 1187.5,177.6" fill="#ff75c0" stroke="#ff75c0" stroke-width="0.8"/>
<polygon points="1187.5,177.6 1204.1,179.2 1190.7,191.0" fill="#ff76dd" stroke="#ff76dd" stroke-width="0.8"/>
<polygon points="1204.1,179.2 1207.3,192.7 1190.7,191.0" fill="#ff69dd" stroke="#ff69dd" stroke-width="0.8"/>
<polygon points="1190.7,191.0 1207.3,192.7 1193.9,204.4" fill="#ff69fb" stroke="#ff69fb" stroke-width="0.8"/>
<polygon points="1207.3,192.7 1210.5,206.1 1193.9,204.4" fill="#ff5dfa" stroke="#ff5dfa" stroke-width="0.8"/>
<polygon points="1193.9,204.4 1210.5,206.1 1197.1,217.9" fill="#e754ff" stroke="#e754ff" stroke-width="0.8"/>
<polygon points="1210.5,206.1 1213.7,219.5 1197.1,217.9" fill="#e94aff" stroke="#e94aff" stroke-width="0.8"/>
<polygon points="1197.1,217.9 1213.7,219.5 1200.3,231.3" fill="#d142ff" stroke="#d142ff" stroke-width="0.8"/>
<polygon points="1213.7,219.5 1216.9,233.0 1200.3,231.3" fill="#d339ff" stroke="#d339ff" stroke-width="0.8"/>
<polygon points="1200.3,231.3 1216.9,233.0 1203.5,244.7" fill="#be32ff" stroke="#be32ff" stroke-width="0.8"/>
<polygon points="1216.9,233.0 1220.1,246.4 1203.5,244.7" fill="#c12bff" stroke="#c12bff" stroke-width="0.8"/>
<polygon points="1203.5,244.7 1220.1,246.4 1206.7,258.2" fill="#af26ff" stroke="#af26ff" stroke-width="0.8"/>
<polygon points="1220.1,246.4 1223.3,259.8 1206.7,258.2" fill="#b21fff" stroke="#b21fff" stroke-width="0.8"/>
<polygon points="1206.7,258.2 1223.3,259.8 1209.9,271.6" fill="#a21bff" stroke="#a21bff" stroke-width="0.8"/>
<polygon points="1223.3,259.8 1226.5,273.3 1209.9,271.6" fill="#a515ff" stroke="#a515ff" stroke-width="0.8"/>
<polygon points="1209.9,271.6 1226.5,273.3 1213.1,285.0" fill="#9611ff" stroke="#9611ff" stroke-width="0.8"/>
<polygon points="1226.5,273.3 1229.7,286.7 1213.1,285.0" fill="#9a0cff" stroke="#9a0cff" stroke-width="0.8"/>
<polygon points="1213.1,285.0 1229.7,286.7 1216.3,298.5" fill="#8d09ff" stroke="#8d09ff" stroke-width="0.8"/>
<polygon points="1229.7,286.7 1232.9,300.1 1216.3,298.5" fill="#9005ff" stroke="#9005ff" stroke-width="0.8"/>
<polygon points="1216.3,298.5 1232.9,300.1 1219.5,311.9" fill="#8402ff" stroke="#8402ff" stroke-width="0.8"/>
<polygon points="1181.7,85.2 1198.3,86.9 1184.9,98.6" fill="#ffab09" stroke="#ffab09" stroke-width="0.8"/>
<polygon points="1198.3,86.9 1201.5,100.3 1184.9,98.6" fill="#ff9d11" stroke="#ff9d11" stroke-width="0.8"/>
<polygon points="1184.9,98.6 1201.5,100.3 1188.1,112.1" fill="#ffa023" stroke="#ffa023" stroke-width="0.8"/>
<polygon points="1201.5,100.3 1204.7,113.7 1188.1,112.1" fill="#ff922b" stroke="#ff922b" stroke-width="0.8"/>
<polygon points="1188.1,112.1 1204.7,113.7 1191.3,125.5" fill="#ff943e" stroke="#ff943e" stroke-width="0.8"/>
<polygon points="1204.7,113.7 1207.9,127.2 1191.3,125.5" fill="#ff8844" stroke="#ff8844" stroke-width="0.8"/>
<polygon points="1191.3,125.5 1207.9,127.2 1194.5,138.9" fill="#ff8958" stroke="#ff8958" stroke-width="0.8"/>
<polygon points="1207.9,127.2 1211.1,140.6 1194.5,138.9" fill="#ff7d5e" stroke="#ff7d5e" stroke-width="0.8"/>
<polygon points="1194.5,138.9 1211.1,140.6 1197.7,152.4" fill="#ff7e73" stroke="#ff7e73" stroke-width="0.8"/>
<polygon points="1211.1,140.6 1214.3,154.0 1197.7,152.4" fill="#ff7277" stroke="#ff7277" stroke-width="0.8"/>
<polygon points="1197.7,152.4 1214.3,154.0 1200.9,165.8" fill="#ff738e" stroke="#ff738e" stroke-width="0.8"/>
<polygon points="1214.3,154.0 1217.5,167.5 1200.9,165.8" fill="#ff6791" stroke="#ff6791" stroke-width="0.8"/>
<polygon points="1200.9,165.8 1217.5,167.5 1204.1,179.2" fill="#ff68a8" stroke="#ff68a8" stroke-width="0.8"/>
<polygon points="1217.5,167.5 1220.7,180.9 1204.1,179.2" fill="#ff5daa" stroke="#ff5daa" stroke-width="0.8"/>
<polygon points="1204.1,179.2 1220.7,180.9 1207.3,192.7" fill="#ff5dc3" stroke="#ff5dc3" stroke-width="0.8"/>
<polygon points="1220.7,180.9 1223.9,194.3 1207.3,192.7" fill="#ff52c4" stroke="#ff52c4" stroke-width="0.8"/>
<polygon points="1207.3,192.7 1223.9,194.3 1210.5,206.1" fill="#ff52dd" stroke="#ff52dd" stroke-width="0.8"/>
<polygon points="1223.9,194.3 1227.1,207.8 1210.5,206.1" fill="#ff47dd" stroke="#ff47dd" stroke-width="0.8"/>
<polygon points="1210.5,206.1 1227.1,207.8 1213.7,219.5" fill="#ff47f8" stroke="#ff47f8" stroke-width="0.8"/>
<polygon points="1227.1,207.8 1230.3,221.2 1213.7,219.5" fill="#ff3df7" stroke="#ff3df7" stroke-width="0.8"/>
<polygon points="1213.7,219.5 1230.3,221.2 1216.9,233.0" fill="#ed37ff" stroke="#ed37ff" stroke-width="0.8"/>
<polygon points="1230.3,221.2 1233.5,234.6 1216.9,233.0" fill="#ef2fff" stroke="#ef2fff" stroke-width="0.8"/>
<polygon points="1216.9,233.0 1233.5,234.6 1220.1,246.4" fill="#d829ff" stroke="#d829ff" stroke-width="0.8"/>
<polygon points="1233.5,234.6 1236.7,248.1 1220.1,246.4" fill="#da22ff" stroke="#da22ff" stroke-width="0.8"/>
<polygon points="1220.1,246.4 1236.7,248.1 1223.3,259.8" fill="#c71dff" stroke="#c71dff" stroke-width="0.8"/>
<polygon points="1236.7,248.1 1239.9,261.5 1223.3,259.8" fill="#c917ff" stroke="#c917ff" stroke-width="0.8"/>
<polygon points="1223.3,259.8 1239.9,261.5 1226.5,273.3" fill="#b813ff" stroke="#b813ff" stroke-width="0.8"/>
<polygon points="1239.9,261.5 1243.1,274.9 1226.5,273.3" fill="#ba0dff" stroke="#ba0dff" stroke-width="0.8"/>
<polygon points="1226.5,273.3 1243.1,274.9 1229.7,286.7" fill="#ab0aff" stroke="#ab0aff" stroke-width="0.8"/>
<polygon points="1243.1,274.9 1246.3,288.4 1229.7,286.7" fill="#ae05ff" stroke="#ae05ff" stroke-width="0.8"/>
<polygon points="1229.7,286.7 1246.3,288.4 1232.9,300.1" fill="#a002ff" stroke="#a002ff" stroke-width="0.8"/>
<polygon points="1198.3,86.9 1214.8,88.5 1201.5,100.3" fill="#ff8e08" stroke="#ff8e08" stroke-width="0.8"/>
<polygon points="1214.8,88.5 1218.0,102.0 1201.5,100.3" fill="#ff830f" stroke="#ff830f" stroke-width="0.8"/>
<polygon points="1201.5,100.3 1218.0,102.0 1204.7,113.7" fill="#ff8520" stroke="#ff8520" stroke-width="0.8"/>
<polygon points="1218.0,102.0 1221.2,115.4 1204.7,113.7" fill="#ff7a26" stroke="#ff7a26" stroke-width="0.8"/>
<polygon points="1204.7,113.7 1221.2,115.4 1207.9,127.2" fill="#ff7b37" stroke="#ff7b37" stroke-width="0.8"/>
<polygon points="1221.2,115.4 1224.4,128.8 1207.9,127.2" fill="#ff703d" stroke="#ff703d" stroke-width="0.8"/>
<polygon points="1207.9,127.2 1224.4,128.8 1211.1,140.6" fill="#ff714f" stroke="#ff714f" stroke-width="0.8"/>
<polygon points="1224.4,128.8 1227.6,142.3 1211.1,140.6" fill="#ff6654" stroke="#ff6654" stroke-width="0.8"/>
<polygon points="1211.1,140.6 1227.6,142.3 1214.3,154.0" fill="#ff6767" stroke="#ff6767" stroke-width="0.8"/>
<polygon points="1227.6,142.3 1230.8,155.7 1214.3,154.0" fill="#ff5d6b" stroke="#ff5d6b" stroke-width="0.8"/>
<polygon points="1214.3,154.0 1230.8,155.7 1217.5,167.5" fill="#ff5d7e" stroke="#ff5d7e" stroke-width="0.8"/>
<polygon points="1230.8,155.7 1234.0,169.1 1217.5,167.5" fill="#ff5382" stroke="#ff5382" stroke-width="0.8"/>
<polygon points="1217.5,167.5 1234.0,169.1 1220.7,180.9" fill="#ff5396" stroke="#ff5396" stroke-width="0.8"/>
<polygon points="1234.0,169.1 1237.2,182.6 1220.7,180.9" fill="#ff4a99" stroke="#ff4a99" stroke-width="0.8"/>
<polygon points="1220.7,180.9 1237.2,182.6 1223.9,194.3" fill="#ff49ae" stroke="#ff49ae" stroke-width="0.8"/>
<polygon points="1237.2,182.6 1240.5,196.0 1223.9,194.3" fill="#ff40af" stroke="#ff40af" stroke-width="0.8"/>
<polygon points="1223.9,194.3 1240.5,196.0 1227.1,207.8" fill="#ff3fc6" stroke="#ff3fc6" stroke-width="0.8"/>
<polygon points="1240.5,196.0 1243.7,209.4 1227.1,207.8" fill="#ff36c6" stroke="#ff36c6" stroke-width="0.8"/>
<polygon points="1227.1,207.8 1243.7,209.4 1230.3,221.2" fill="#ff35dd" stroke="#ff35dd" stroke-width="0.8"/>
<polygon points="1243.7,209.4 1246.8,222.9 1230.3,221.2" fill="#ff2ddd" stroke="#ff2ddd" stroke-width="0.8"/>
<polygon points="1230.3,221.2 1246.8,222.9 1233.5,234.6" fill="#ff2bf5" stroke="#ff2bf5" stroke-width="0.8"/>
<polygon points="1246.8,222.9 1250.0,236.3 1233.5,234.6" fill="#ff23f4" stroke="#ff23f4" stroke-width="0.8"/>
<polygon points="1233.5,234.6 1250.0,236.3 1236.7,248.1" fill="#f21fff" stroke="#f21fff" stroke-width="0.8"/>
<polygon points="1250.0,236.3 1253.2,249.7 1236.7,248.1" fill="#f318ff" stroke="#f318ff" stroke-width="0.8"/>
<polygon points="1236.7,248.1 1253.2,249.7 1239.9,261.5" fill="#de14ff" stroke="#de14ff" stroke-width="0.8"/>
<polygon points="1253.2,249.7 1256.5,263.2 1239.9,261.5" fill="#e00eff" stroke="#e00eff" stroke-width="0.8"/>
<polygon points="1239.9,261.5 1256.5,263.2 1243.1,274.9" fill="#ce0bff" stroke="#ce0bff" stroke-width="0.8"/>
<polygon points="1256.5,263.2 1259.7,276.6 1243.1,274.9" fill="#d005ff" stroke="#d005ff" stroke-width="0.8"/>
<polygon points="1243.1,274.9 1259.7,276.6 1246.3,288.4" fill="#bf02ff" stroke="#bf02ff" stroke-width="0.8"/>
<polygon points="1214.8,88.5 1231.4,90.2 1218.0,102.0" fill="#ff7807" stroke="#ff7807" stroke-width="0.8"/>
<polygon points="1231.4,90.2 1234.6,103.6 1218.0,102.0" fill="#ff6e0e" stroke="#ff6e0e" stroke-width="0.8"/>
<polygon points="1218.0,102.0 1234.6,103.6 1221.2,115.4" fill="#ff6f1d" stroke="#ff6f1d" stroke-width="0.8"/>
<polygon points="1234.6,103.6 1237.8,117.1 1221.2,115.4" fill="#ff6523" stroke="#ff6523" stroke-width="0.8"/>
<polygon points="1221.2,115.4 1237.8,117.1 1224.4,128.8" fill="#ff6632" stroke="#ff6632" stroke-width="0.8"/>
<polygon points="1237.8,117.1 1241.0,130.5 1224.4,128.8" fill="#ff5d37" stroke="#ff5d37" stroke-width="0.8"/>
<polygon points="1224.4,128.8 1241.0,130.5 1227.6,142.3" fill="#ff5d47" stroke="#ff5d47" stroke-width="0.8"/>
<polygon points="1241.0,130.5 1244.2,143.9 1227.6,142.3" fill="#ff544c" stroke="#ff544c" stroke-width="0.8"/>
<polygon points="1227.6,142.3 1244.2,143.9 1230.8,155.7" fill="#ff545d" stroke="#ff545d" stroke-width="0.8"/>
<polygon points="1244.2,143.9 1247.4,157.4 1230.8,155.7" fill="#ff4b61" stroke="#ff4b61" stroke-width="0.8"/>
<polygon points="1230.8,155.7 1247.4,157.4 1234.0,169.1" fill="#ff4b72" stroke="#ff4b72" stroke-width="0.8"/>
<polygon points="1247.4,157.4 1250.6,170.8 1234.0,169.1" fill="#ff4376" stroke="#ff4376" stroke-width="0.8"/>
<polygon points="1234.0,169.1 1250.6,170.8 1237.2,182.6" fill="#ff4288" stroke="#ff4288" stroke-width="0.8"/>
<polygon points="1250.6,170.8 1253.8,184.2 1237.2,182.6" fill="#ff3a8a" stroke="#ff3a8a" stroke-width="0.8"/>
<polygon points="1237.2,182.6 1253.8,184.2 1240.5,196.0" fill="#ff399d" stroke="#ff399d" stroke-width="0.8"/>
<polygon points="1253.8,184.2 1257.0,197.7 1240.5,196.0" fill="#ff319f" stroke="#ff319f" stroke-width="0.8"/>
<polygon points="1240.5,196.0 1257.0,197.7 1243.7,209.4" fill="#ff30b2" stroke="#ff30b2" stroke-width="0.8"/>
<polygon points="1257.0,197.7 1260.2,211.1 1243.7,209.4" fill="#ff29b4" stroke="#ff29b4" stroke-width="0.8"/>
<polygon points="1243.7,209.4 1260.2,211.1 1246.8,222.9" fill="#ff27c8" stroke="#ff27c8" stroke-width="0.8"/>
<polygon points="1260.2,211.1 1263.4,224.5 1246.8,222.9" fill="#ff20c9" stroke="#ff20c9" stroke-width="0.8"/>
<polygon points="1246.8,222.9 1263.4,224.5 1250.0,236.3" fill="#ff1edd" stroke="#ff1edd" stroke-width="0.8"/>
<polygon points="1263.4,224.5 1266.6,238.0 1250.0,236.3" fill="#ff17dd" stroke="#ff17dd" stroke-width="0.8"/>
<polygon points="1250.0,236.3 1266.6,238.0 1253.2,249.7" fill="#ff15f3" stroke="#ff15f3" stroke-width="0.8"/>
<polygon points="1266.6,238.0 1269.8,251.4 1253.2,249.7" fill="#ff0ef2" stroke="#ff0ef2" stroke-width="0.8"/>
<polygon points="1253.2,249.7 1269.8,251.4 1256.5,263.2" fill="#f60cff" stroke="#f60cff" stroke-width="0.8"/>
<polygon points="1269.8,251.4 1273.0,264.8 1256.5,263.2" fill="#f706ff" stroke="#f706ff" stroke-width="0.8"/>
<polygon points="1256.5,263.2 1273.0,264.8 1259.7,276.6" fill="#e403ff" stroke="#e403ff" stroke-width="0.8"/>
<polygon points="1231.4,90.2 1248.0,91.9 1234.6,103.6" fill="#ff6507" stroke="#ff6507" stroke-width="0.8"/>
<polygon points="1248.0,91.9 1251.2,105.3 1234.6,103.6" fill="#ff5d0d" stroke="#ff5d0d" stroke-width="0.8"/>
<polygon points="1234.6,103.6 1251.2,105.3 1237.8,117.1" fill="#ff5d1a" stroke="#ff5d1a" stroke-width="0.8"/>
<polygon points="1251.2,105.3 1254.4,118.7 1237.8,117.1" fill="#ff5520" stroke="#ff5520" stroke-width="0.8"/>
<polygon points="1237.8,117.1 1254.4,118.7 1241.0,130.5" fill="#ff552e" stroke="#ff552e" stroke-width="0.8"/>
<polygon points="1254.4,118.7 1257.6,132.2 1241.0,130.5" fill="#ff4d33" stroke="#ff4d33" stroke-width="0.8"/>
<polygon points="1241.0,130.5 1257.6,132.2 1244.2,143.9" fill="#ff4c41" stroke="#ff4c41" stroke-width="0.8"/>
<polygon points="1257.6,132.2 1260.8,145.6 1244.2,143.9" fill="#ff4546" stroke="#ff4546" stroke-width="0.8"/>
<polygon points="1244.2,143.9 1260.8,145.6 1247.4,157.4" fill="#ff4455" stroke="#ff4455" stroke-width="0.8"/>
<polygon points="1260.8,145.6 1264.0,159.0 1247.4,157.4" fill="#ff3d59" stroke="#ff3d59" stroke-width="0.8"/>
<polygon points="1247.4,157.4 1264.0,159.0 1250.6,170.8" fill="#ff3c68" stroke="#ff3c68" stroke-width="0.8"/>
<polygon points="1264.0,159.0 1267.2,172.5 1250.6,170.8" fill="#ff356b" stroke="#ff356b" stroke-width="0.8"/>
<polygon points="1250.6,170.8 1267.2,172.5 1253.8,184.2" fill="#ff347c" stroke="#ff347c" stroke-width="0.8"/>
<polygon points="1267.2,172.5 1270.4,185.9 1253.8,184.2" fill="#ff2d7e" stroke="#ff2d7e" stroke-width="0.8"/>
<polygon points="1253.8,184.2 1270.4,185.9 1257.0,197.7" fill="#ff2c8f" stroke="#ff2c8f" stroke-width="0.8"/>
<polygon points="1270.4,185.9 1273.6,199.3 1257.0,197.7" fill="#ff2591" stroke="#ff2591" stroke-width="0.8"/>
<polygon points="1257.0,197.7 1273.6,199.3 1260.2,211.1" fill="#ff23a3" stroke="#ff23a3" stroke-width="0.8"/>
<polygon points="1273.6,199.3 1276.8,212.8 1260.2,211.1" fill="#ff1da4" stroke="#ff1da4" stroke-width="0.8"/>
<polygon points="1260.2,211.1 1276.8,212.8 1263.4,224.5" fill="#ff1bb6" stroke="#ff1bb6" stroke-width="0.8"/>
<polygon points="1276.8,212.8 1280.0,226.2 1263.4,224.5" fill="#ff15b7" stroke="#ff15b7" stroke-width="0.8"/>
<polygon points="1263.4,224.5 1280.0,226.2 1266.6,238.0" fill="#ff13ca" stroke="#ff13ca" stroke-width="0.8"/>
<polygon points="1280.0,226.2 1283.2,239.6 1266.6,238.0" fill="#ff0dca" stroke="#ff0dca" stroke-width="0.8"/>
<polygon points="1266.6,238.0 1283.2,239.6 1269.8,251.4" fill="#ff0bdd" stroke="#ff0bdd" stroke-width="0.8"/>
<polygon points="1283.2,239.6 1286.4,253.1 1269.8,251.4" fill="#ff05dd" stroke="#ff05dd" stroke-width="0.8"/>
<polygon points="1269.8,251.4 1286.4,253.1 1273.0,264.8" fill="#ff03f1" stroke="#ff03f1" stroke-width="0.8"/>
<polygon points="1248.0,91.9 1264.6,93.5 1251.2,105.3" fill="#ff5506" stroke="#ff5506" stroke-width="0.8"/>
<polygon points="1264.6,93.5 1267.8,107.0 1251.2,105.3" fill="#ff4e0c" stroke="#ff4e0c" stroke-width="0.8"/>
<polygon points="1251.2,105.3 1267.8,107.0 1254.4,118.7" fill="#ff4e18" stroke="#ff4e18" stroke-width="0.8"/>
<polygon points="1267.8,107.0 1271.0,120.4 1254.4,118.7" fill="#ff471d" stroke="#ff471d" stroke-width="0.8"/>
<polygon points="1254.4,118.7 1271.0,120.4 1257.6,132.2" fill="#ff462a" stroke="#ff462a" stroke-width="0.8"/>
<polygon points="1271.0,120.4 1274.2,133.8 1257.6,132.2" fill="#ff3f2f" stroke="#ff3f2f" stroke-width="0.8"/>
<polygon points="1257.6,132.2 1274.2,133.8 1260.8,145.6" fill="#ff3f3c" stroke="#ff3f3c" stroke-width="0.8"/>
<polygon points="1274.2,133.8 1277.4,147.3 1260.8,145.6" fill="#ff3840" stroke="#ff3840" stroke-width="0.8"/>
<polygon points="1260.8,145.6 1277.4,147.3 1264.0,159.0" fill="#ff374e" stroke="#ff374e" stroke-width="0.8"/>
<polygon points="1277.4,147.3 1280.6,160.7 1264.0,159.0" fill="#ff3152" stroke="#ff3152" stroke-width="0.8"/>
<polygon points="1264.0,159.0 1280.6,160.7 1267.2,172.5" fill="#ff3060" stroke="#ff3060" stroke-width="0.8"/>
<polygon points="1280.6,160.7 1283.8,174.1 1267.2,172.5" fill="#ff2963" stroke="#ff2963" stroke-width="0.8"/>
<polygon points="1267.2,172.5 1283.8,174.1 1270.4,185.9" fill="#ff2872" stroke="#ff2872" stroke-width="0.8"/>
<polygon points="1283.8,174.1 1287.0,187.6 1270.4,185.9" fill="#ff2274" stroke="#ff2274" stroke-width="0.8"/>
<polygon points="1270.4,185.9 1287.0,187.6 1273.6,199.3" fill="#ff2184" stroke="#ff2184" stroke-width="0.8"/>
<polygon points="1287.0,187.6 1290.2,201.0 1273.6,199.3" fill="#ff1b86" stroke="#ff1b86" stroke-width="0.8"/>
<polygon points="1273.6,199.3 1290.2,201.0 1276.8,212.8" fill="#ff1996" stroke="#ff1996" stroke-width="0.8"/>
<polygon points="1290.2,201.0 1293.4,214.4 1276.8,212.8" fill="#ff1497" stroke="#ff1497" stroke-width="0.8"/>
<polygon points="1276.8,212.8 1293.4,214.4 1280.0,226.2" fill="#ff12a7" stroke="#ff12a7" stroke-width="0.8"/>
<polygon points="1293.4,214.4 1296.6,227.9 1280.0,226.2" fill="#ff0ca9" stroke="#ff0ca9" stroke-width="0.8"/>
<polygon points="1280.0,226.2 1296.6,227.9 1283.2,239.6" fill="#ff0ab9" stroke="#ff0ab9" stroke-width="0.8"/>
<polygon points="1296.6,227.9 1299.8,241.3 1283.2,239.6" fill="#ff05ba" stroke="#ff05ba" stroke-width="0.8"/>
<polygon points="1283.2,239.6 1299.8,241.3 1286.4,253.1" fill="#ff02cb" stroke="#ff02cb" stroke-width="0.8"/>
<polygon points="1264.6,93.5 1281.2,95.2 1267.8,107.0" fill="#ff4806" stroke="#ff4806" stroke-width="0.8"/>
<polygon points="1281.2,95.2 1284.4,108.6 1267.8,107.0" fill="#ff420b" stroke="#ff420b" stroke-width="0.8"/>
<polygon points="1267.8,107.0 1284.4,108.6 1271.0,120.4" fill="#ff4116" stroke="#ff4116" stroke-width="0.8"/>
<polygon points="1284.4,108.6 1287.6,122.1 1271.0,120.4" fill="#ff3b1b" stroke="#ff3b1b" stroke-width="0.8"/>
<polygon points="1271.0,120.4 1287.6,122.1 1274.2,133.8" fill="#ff3a27" stroke="#ff3a27" stroke-width="0.8"/>
<polygon points="1287.6,122.1 1290.8,135.5 1274.2,133.8" fill="#ff342b" stroke="#ff342b" stroke-width="0.8"/>
<polygon points="1274.2,133.8 1290.8,135.5 1277.4,147.3" fill="#ff3337" stroke="#ff3337" stroke-width="0.8"/>
<polygon points="1290.8,135.5 1294.0,148.9 1277.4,147.3" fill="#ff2d3b" stroke="#ff2d3b" stroke-width="0.8"/>
<polygon points="1277.4,147.3 1294.0,148.9 1280.6,160.7" fill="#ff2c48" stroke="#ff2c48" stroke-width="0.8"/>
<polygon points="1294.0,148.9 1297.2,162.4 1280.6,160.7" fill="#ff264c" stroke="#ff264c" stroke-width="0.8"/>
<polygon points="1280.6,160.7 1297.2,162.4 1283.8,174.1" fill="#ff2559" stroke="#ff2559" stroke-width="0.8"/>
<polygon points="1297.2,162.4 1300.4,175.8 1283.8,174.1" fill="#ff205c" stroke="#ff205c" stroke-width="0.8"/>
<polygon points="1283.8,174.1 1300.4,175.8 1287.0,187.6" fill="#ff1e69" stroke="#ff1e69" stroke-width="0.8"/>
<polygon points="1300.4,175.8 1303.6,189.2 1287.0,187.6" fill="#ff196c" stroke="#ff196c" stroke-width="0.8"/>
<polygon points="1287.0,187.6 1303.6,189.2 1290.2,201.0" fill="#ff177a" stroke="#ff177a" stroke-width="0.8"/>
<polygon points="1303.6,189.2 1306.8,202.7 1290.2,201.0" fill="#ff127c" stroke="#ff127c" stroke-width="0.8"/>
<polygon points="1290.2,201.0 1306.8,202.7 1293.4,214.4" fill="#ff108a" stroke="#ff108a" stroke-width="0.8"/>
<polygon points="1306.8,202.7 1310.0,216.1 1293.4,214.4" fill="#ff0b8c" stroke="#ff0b8c" stroke-width="0.8"/>
<polygon points="1293.4,214.4 1310.0,216.1 1296.6,227.9" fill="#ff099b" stroke="#ff099b" stroke-width="0.8"/>
<polygon points="1310.0,216.1 1313.2,229.5 1296.6,227.9" fill="#ff059d" stroke="#ff059d" stroke-width="0.8"/>
<polygon points="1296.6,227.9 1313.2,229.5 1299.8,241.3" fill="#ff02ab" stroke="#ff02ab" stroke-width="0.8"/>
<polygon points="1281.2,95.2 1297.7,96.9 1284.4,108.6" fill="#ff3c05" stroke="#ff3c05" stroke-width="0.8"/>
<polygon points="1297.7,96.9 1300.9,110.3 1284.4,108.6" fill="#ff370a" stroke="#ff370a" stroke-width="0.8"/>
<polygon points="1284.4,108.6 1300.9,110.3 1287.6,122.1" fill="#ff3615" stroke="#ff3615" stroke-width="0.8"/>
<polygon points="1300.9,110.3 1304.1,123.7 1287.6,122.1" fill="#ff3019" stroke="#ff3019" stroke-width="0.8"/>
<polygon points="1287.6,122.1 1304.1,123.7 1290.8,135.5" fill="#ff2f24" stroke="#ff2f24" stroke-width="0.8"/>
<polygon points="1304.1,123.7 1307.3,137.2 1290.8,135.5" fill="#ff2a28" stroke="#ff2a28" stroke-width="0.8"/>
<polygon points="1290.8,135.5 1307.3,137.2 1294.0,148.9" fill="#ff2933" stroke="#ff2933" stroke-width="0.8"/>
<polygon points="1307.3,137.2 1310.5,150.6 1294.0,148.9" fill="#ff2437" stroke="#ff2437" stroke-width="0.8"/>
<polygon points="1294.0,148.9 1310.5,150.6 1297.2,162.4" fill="#ff2343" stroke="#ff2343" stroke-width="0.8"/>
<polygon points="1310.5,150.6 1313.7,164.1 1297.2,162.4" fill="#ff1e46" stroke="#ff1e46" stroke-width="0.8"/>
<polygon points="1297.2,162.4 1313.7,164.1 1300.4,175.8" fill="#ff1c52" stroke="#ff1c52" stroke-width="0.8"/>
<polygon points="1313.7,164.1 1316.9,177.5 1300.4,175.8" fill="#ff1755" stroke="#ff1755" stroke-width="0.8"/>
<polygon points="1300.4,175.8 1316.9,177.5 1303.6,189.2" fill="#ff1662" stroke="#ff1662" stroke-width="0.8"/>
<polygon points="1316.9,177.5 1320.1,190.9 1303.6,189.2" fill="#ff1165" stroke="#ff1165" stroke-width="0.8"/>
<polygon points="1303.6,189.2 1320.1,190.9 1306.8,202.7" fill="#ff0f71" stroke="#ff0f71" stroke-width="0.8"/>
<polygon points="1320.1,190.9 1323.3,204.4 1306.8,202.7" fill="#ff0b74" stroke="#ff0b74" stroke-width="0.8"/>
<polygon points="1306.8,202.7 1323.3,204.4 1310.0,216.1" fill="#ff0981" stroke="#ff0981" stroke-width="0.8"/>
<polygon points="1323.3,204.4 1326.5,217.8 1310.0,216.1" fill="#ff0483" stroke="#ff0483" stroke-width="0.8"/>
<polygon points="1310.0,216.1 1326.5,217.8 1313.2,229.5" fill="#ff0290" stroke="#ff0290" stroke-width="0.8"/>
<polygon points="1297.7,96.9 1314.3,98.6 1300.9,110.3" fill="#ff3205" stroke="#ff3205" stroke-width="0.8"/>
<polygon points="1314.3,98.6 1317.5,112.0 1300.9,110.3" fill="#ff2d09" stroke="#ff2d09" stroke-width="0.8"/>
<polygon points="1300.9,110.3 1317.5,112.0 1304.1,123.7" fill="#ff2c13" stroke="#ff2c13" stroke-width="0.8"/>
<polygon points="1317.5,112.0 1320.7,125.4 1304.1,123.7" fill="#ff2718" stroke="#ff2718" stroke-width="0.8"/>
<polygon points="1304.1,123.7 1320.7,125.4 1307.3,137.2" fill="#ff2622" stroke="#ff2622" stroke-width="0.8"/>
<polygon points="1320.7,125.4 1323.9,138.9 1307.3,137.2" fill="#ff2226" stroke="#ff2226" stroke-width="0.8"/>
<polygon points="1307.3,137.2 1323.9,138.9 1310.5,150.6" fill="#ff2030" stroke="#ff2030" stroke-width="0.8"/>
<polygon points="1323.9,138.9 1327.1,152.3 1310.5,150.6" fill="#ff1c34" stroke="#ff1c34" stroke-width="0.8"/>
<polygon points="1310.5,150.6 1327.1,152.3 1313.7,164.1" fill="#ff1a3f" stroke="#ff1a3f" stroke-width="0.8"/>
<polygon points="1327.1,152.3 1330.3,165.7 1313.7,164.1" fill="#ff1642" stroke="#ff1642" stroke-width="0.8"/>
<polygon points="1313.7,164.1 1330.3,165.7 1316.9,177.5" fill="#ff144d" stroke="#ff144d" stroke-width="0.8"/>
<polygon points="1330.3,165.7 1333.5,179.2 1316.9,177.5" fill="#ff1050" stroke="#ff1050" stroke-width="0.8"/>
<polygon points="1316.9,177.5 1333.5,179.2 1320.1,190.9" fill="#ff0e5b" stroke="#ff0e5b" stroke-width="0.8"/>
<polygon points="1333.5,179.2 1336.7,192.6 1320.1,190.9" fill="#ff0a5e" stroke="#ff0a5e" stroke-width="0.8"/>
<polygon points="1320.1,190.9 1336.7,192.6 1323.3,204.4" fill="#ff086a" stroke="#ff086a" stroke-width="0.8"/>
<polygon points="1336.7,192.6 1339.9,206.0 1323.3,204.4" fill="#ff046c" stroke="#ff046c" stroke-width="0.8"/>
<polygon points="1323.3,204.4 1339.9,206.0 1326.5,217.8" fill="#ff0278" stroke="#ff0278" stroke-width="0.8"/>
<polygon points="1314.3,98.6 1330.9,100.2 1317.5,112.0" fill="#ff2a05" stroke="#ff2a05" stroke-width="0.8"/>
<polygon points="1330.9,100.2 1334.1,113.7 1317.5,112.0" fill="#ff2509" stroke="#ff2509" stroke-width="0.8"/>
<polygon points="1317.5,112.0 1334.1,113.7 1320.7,125.4" fill="#ff2412" stroke="#ff2412" stroke-width="0.8"/>
<polygon points="1334.1,113.7 1337.3,127.1 1320.7,125.4" fill="#ff2016" stroke="#ff2016" stroke-width="0.8"/>
<polygon points="1320.7,125.4 1337.3,127.1 1323.9,138.9" fill="#ff1e20" stroke="#ff1e20" stroke-width="0.8"/>
<polygon points="1337.3,127.1 1340.5,140.5 1323.9,138.9" fill="#ff1a23" stroke="#ff1a23" stroke-width="0.8"/>
<polygon points="1323.9,138.9 1340.5,140.5 1327.1,152.3" fill="#ff192d" stroke="#ff192d" stroke-width="0.8"/>
<polygon points="1340.5,140.5 1343.7,154.0 1327.1,152.3" fill="#ff1431" stroke="#ff1431" stroke-width="0.8"/>
<polygon points="1327.1,152.3 1343.7,154.0 1330.3,165.7" fill="#ff133b" stroke="#ff133b" stroke-width="0.8"/>
<polygon points="1343.7,154.0 1346.9,167.4 1330.3,165.7" fill="#ff0f3e" stroke="#ff0f3e" stroke-width="0.8"/>
<polygon points="1330.3,165.7 1346.9,167.4 1333.5,179.2" fill="#ff0d48" stroke="#ff0d48" stroke-width="0.8"/>
<polygon points="1346.9,167.4 1350.1,180.8 1333.5,179.2" fill="#ff094b" stroke="#ff094b" stroke-width="0.8"/>
<polygon points="1333.5,179.2 1350.1,180.8 1336.7,192.6" fill="#ff0856" stroke="#ff0856" stroke-width="0.8"/>
<polygon points="1350.1,180.8 1353.3,194.3 1336.7,192.6" fill="#ff0459" stroke="#ff0459" stroke-width="0.8"/>
<polygon points="1336.7,192.6 1353.3,194.3 1339.9,206.0" fill="#ff0263" stroke="#ff0263" stroke-width="0.8"/>
<polygon points="1330.9,100.2 1347.5,101.9 1334.1,113.7" fill="#ff2204" stroke="#ff2204" stroke-width="0.8"/>
<polygon points="1347.5,101.9 1350.7,115.3 1334.1,113.7" fill="#ff1e08" stroke="#ff1e08" stroke-width="0.8"/>
<polygon points="1334.1,113.7 1350.7,115.3 1337.3,127.1" fill="#ff1d11" stroke="#ff1d11" stroke-width="0.8"/>
<polygon points="1350.7,115.3 1353.9,128.8 1337.3,127.1" fill="#ff1815" stroke="#ff1815" stroke-width="0.8"/>
<polygon points="1337.3,127.1 1353.9,128.8 1340.5,140.5" fill="#ff171e" stroke="#ff171e" stroke-width="0.8"/>
<polygon points="1353.9,128.8 1357.1,142.2 1340.5,140.5" fill="#ff1321" stroke="#ff1321" stroke-width="0.8"/>
<polygon points="1340.5,140.5 1357.1,142.2 1343.7,154.0" fill="#ff122b" stroke="#ff122b" stroke-width="0.8"/>
<polygon points="1357.1,142.2 1360.2,155.6 1343.7,154.0" fill="#ff0e2e" stroke="#ff0e2e" stroke-width="0.8"/>
<polygon points="1343.7,154.0 1360.2,155.6 1346.9,167.4" fill="#ff0c37" stroke="#ff0c37" stroke-width="0.8"/>
<polygon points="1360.2,155.6 1363.5,169.1 1346.9,167.4" fill="#ff093a" stroke="#ff093a" stroke-width="0.8"/>
<polygon points="1346.9,167.4 1363.5,169.1 1350.1,180.8" fill="#ff0744" stroke="#ff0744" stroke-width="0.8"/>
<polygon points="1363.5,169.1 1366.7,182.5 1350.1,180.8" fill="#ff0347" stroke="#ff0347" stroke-width="0.8"/>
<polygon points="1350.1,180.8 1366.7,182.5 1353.3,194.3" fill="#ff0251" stroke="#ff0251" stroke-width="0.8"/>
<polygon points="1347.5,101.9 1364.0,103.6 1350.7,115.3" fill="#ff1b04" stroke="#ff1b04" stroke-width="0.8"/>
<polygon points="1364.0,103.6 1367.2,117.0 1350.7,115.3" fill="#ff1708" stroke="#ff1708" stroke-width="0.8"/>
<polygon points="1350.7,115.3 1367.2,117.0 1353.9,128.8" fill="#ff1610" stroke="#ff1610" stroke-width="0.8"/>
<polygon points="1367.2,117.0 1370.4,130.4 1353.9,128.8" fill="#ff1214" stroke="#ff1214" stroke-width="0.8"/>
<polygon points="1353.9,128.8 1370.4,130.4 1357.1,142.2" fill="#ff111c" stroke="#ff111c" stroke-width="0.8"/>
<polygon points="1370.4,130.4 1373.6,143.9 1357.1,142.2" fill="#ff0d20" stroke="#ff0d20" stroke-width="0.8"/>
<polygon points="1357.1,142.2 1373.6,143.9 1360.2,155.6" fill="#ff0c28" stroke="#ff0c28" stroke-width="0.8"/>
<polygon points="1373.6,143.9 1376.8,157.3 1360.2,155.6" fill="#ff082b" stroke="#ff082b" stroke-width="0.8"/>
<polygon points="1360.2,155.6 1376.8,157.3 1363.5,169.1" fill="#ff0734" stroke="#ff0734" stroke-width="0.8"/>
<polygon points="1376.8,157.3 1380.0,170.7 1363.5,169.1" fill="#ff0337" stroke="#ff0337" stroke-width="0.8"/>
<polygon points="1363.5,169.1 1380.0,170.7 1366.7,182.5" fill="#ff0240" stroke="#ff0240" stroke-width="0.8"/>
<polygon points="1364.0,103.6 1380.6,105.2 1367.2,117.0" fill="#ff1504" stroke="#ff1504" stroke-width="0.8"/>
<polygon points="1380.6,105.2 1383.8,118.7 1367.2,117.0" fill="#ff1108" stroke="#ff1108" stroke-width="0.8"/>
<polygon points="1367.2,117.0 1383.8,118.7 1370.4,130.4" fill="#ff100f" stroke="#ff100f" stroke-width="0.8"/>
<polygon points="1383.8,118.7 1387.0,132.1 1370.4,130.4" fill="#ff0d13" stroke="#ff0d13" stroke-width="0.8"/>
<polygon points="1370.4,130.4 1387.0,132.1 1373.6,143.9" fill="#ff0b1b" stroke="#ff0b1b" stroke-width="0.8"/>
<polygon points="1387.0,132.1 1390.2,145.5 1373.6,143.9" fill="#ff081e" stroke="#ff081e" stroke-width="0.8"/>
<polygon points="1373.6,143.9 1390.2,145.5 1376.8,157.3" fill="#ff0626" stroke="#ff0626" stroke-width="0.8"/>
<polygon points="1390.2,145.5 1393.4,159.0 1376.8,157.3" fill="#ff0329" stroke="#ff0329" stroke-width="0.8"/>
<polygon points="1376.8,157.3 1393.4,159.0 1380.0,170.7" fill="#ff0232" stroke="#ff0232" stroke-width="0.8"/>
<polygon points="1380.6,105.2 1397.2,106.9 1383.8,118.7" fill="#ff0f04" stroke="#ff0f04" stroke-width="0.8"/>
<polygon points="1397.2,106.9 1400.4,120.3 1383.8,118.7" fill="#ff0c07" stroke="#ff0c07" stroke-width="0.8"/>
<polygon points="1383.8,118.7 1400.4,120.3 1387.0,132.1" fill="#ff0b0f" stroke="#ff0b0f" stroke-width="0.8"/>
<polygon points="1400.4,120.3 1403.6,133.8 1387.0,132.1" fill="#ff0712" stroke="#ff0712" stroke-width="0.8"/>
<polygon points="1387.0,132.1 1403.6,133.8 1390.2,145.5" fill="#ff0619" stroke="#ff0619" stroke-width="0.8"/>
<polygon points="1403.6,133.8 1406.8,147.2 1390.2,145.5" fill="#ff031d" stroke="#ff031d" stroke-width="0.8"/>
<polygon points="1390.2,145.5 1406.8,147.2 1393.4,159.0" fill="#ff0224" stroke="#ff0224" stroke-width="0.8"/>
<polygon points="1397.2,106.9 1413.8,108.6 1400.4,120.3" fill="#ff0a03" stroke="#ff0a03" stroke-width="0.8"/>
<polygon points="1413.8,108.6 1417.0,122.0 1400.4,120.3" fill="#ff0707" stroke="#ff0707" stroke-width="0.8"/>
<polygon points="1400.4,120.3 1417.0,122.0 1403.6,133.8" fill="#ff060e" stroke="#ff060e" stroke-width="0.8"/>
<polygon points="1417.0,122.0 1420.2,135.4 1403.6,133.8" fill="#ff0311" stroke="#ff0311" stroke-width="0.8"/>
<polygon points="1403.6,133.8 1420.2,135.4 1406.8,147.2" fill="#ff0118" stroke="#ff0118" stroke-width="0.8"/>
<polygon points="1413.8,108.6 1430.3,110.2 1417.0,122.0" fill="#ff0603" stroke="#ff0603" stroke-width="0.8"/>
<polygon points="1430.3,110.2 1433.5,123.7 1417.0,122.0" fill="#ff0307" stroke="#ff0307" stroke-width="0.8"/>
<polygon points="1417.0,122.0 1433.5,123.7 1420.2,135.4" fill="#ff010d" stroke="#ff010d" stroke-width="0.8"/>
<polygon points="1430.3,110.2 1446.9,111.9 1433.5,123.7" fill="#ff0103" stroke="#ff0103" stroke-width="0.8"/>
</g>
<clipPath id="insclip"><rect x="1346.5" y="374" width="198" height="133"/></clipPath>
<g clip-path="url(#insclip)"><rect x="1346.5" y="374" width="198" height="133" fill="#242424"/>
<clipPath id="insloc"><path d="M345 1934 L345 1934 L345 1934 L345 1934 L345 1934 L345 1934 L345 1934 L345 1934 L344 1934 L344 1934 L344 1934 L344 1934 L344 1935 L344 1935 L344 1935 L344 1935 L344 1935 L344 1935 L343 1935 L343 1935 L343 1935 L343 1935 L343 1935 L343 1935 L343 1935 L343 1935 L342 1935 L342 1935 L342 1935 L342 1935 L342 1935 L342 1935 L342 1935 L341 1935 L341 1935 L341 1935 L341 1935 L341 1935 L341 1935 L340 1935 L340 1935 L340 1935 L340 1935 L340 1935 L339 1935 L339 1935 L339 1935 L339 1935 L339 1935 L338 1935 L338 1935 L338 1935 L338 1935 L337 1935 L337 1935 L337 1935 L337 1935 L336 1935 L336 1935 L336 1935 L335 1935 L335 1935 L334 1934 L334 1934 L334 1934 L333 1934 L333 1934 L332 1933 L331 1933 L331 1933 L330 1933 L330 1932 L329 1932 L328 1932 L328 1931 L327 1931 L326 1931 L326 1930 L325 1930 L324 1930 L323 1929 L322 1929 L321 1928 L320 1927 L319 1927 L318 1926 L317 1926 L316 1925 L315 1924 L314 1924 L312 1923 L311 1922 L310 1921 L309 1920 L307 1920 L306 1919 L304 1918 L303 1917 L301 1916 L300 1915 L298 1914 L296 1913 L295 1912 L293 1911 L291 1910 L289 1908 L286 1907 L284 1906 L282 1905 L280 1903 L277 1902 L275 1900 L272 1899 L269 1897 L267 1896 L264 1894 L261 1892 L258 1891 L255 1889 L252 1887 L249 1885 L245 1883 L242 1880 L238 1878 L235 1876 L231 1873 L227 1871 L223 1868 L219 1865 L215 1862 L211 1859 L207 1856 L203 1853 L198 1849 L194 1845 L189 1841 L184 1836 L179 1831 L173 1826 L168 1821 L162 1815 L156 1808 L150 1801 L143 1794 L137 1786 L130 1778 L123 1769 L116 1760 L108 1750 L100 1740 L93 1729 L85 1717 L76 1705 L67 1691 L59 1677 L49 1663 L40 1647 L30 1631 L21 1614 L10 1595 L-0 1576 L-11 1556 L-22 1534 L-34 1512 L-46 1489 L-58 1465 L-70 1440 L-82 1413 L-94 1385 L-106 1356 L-119 1326 L-131 1294 L-143 1262 L-155 1228 L-168 1193 L-180 1157 L-191 1121 L-203 1083 L-215 1043 L-227 1003 L-239 961 L-251 919 L-262 876 L-273 833 L-283 790 L-292 747 L-302 703 L-311 659 L-319 614 L-327 569 L-334 525 L-341 481 L-346 438 L-351 395 L-356 353 L-359 311 L-362 269 L-364 228 L-365 188 L-365 149 L-364 111 L-362 74 L-360 38 L-356 2 L-351 -32 L-346 -66 L-339 -98 L-331 -128 L-323 -157 L-313 -184 L-302 -209 L-290 -234 L-277 -256 L-264 -277 L-249 -297 L-234 -314 L-219 -330 L-202 -344 L-185 -355 L-167 -365 L-149 -373 L-130 -379 L-110 -384 L-91 -388 L-71 -391 L-51 -393 L-31 -393 L-10 -391 L11 -388 L32 -384 L53 -380 L74 -375 L95 -370 L116 -365 L138 -358 L159 -352 L180 -344 L201 -337 L222 -329 L243 -321 L264 -313 L284 -305 L305 -297 L325 -289 L345 -280 L364 -271 L384 -263 L404 -254 L423 -245 L443 -236 L462 -226 L481 -217 L500 -207 L519 -198 L538 -188 L557 -178 L576 -168 L595 -158 L614 -148 L633 -137 L652 -127 L671 -116 L689 -106 L708 -95 L727 -84 L746 -73 L764 -62 L783 -51 L802 -40 L820 -28 L839 -17 L858 -6 L876 6 L895 17 L913 29 L932 41 L951 52 L969 64 L988 76 L1006 88 L1025 100 L1044 111 L1062 123 L1081 135 L1100 148 L1118 160 L1137 172 L1155 184 L1174 196 L1193 208 L1211 220 L1230 233 L1248 245 L1267 257 L1285 269 L1304 282 L1322 294 L1341 306 L1359 318 L1378 331 L1396 343 L1415 355 L1433 368 L1452 380 L1470 392 L1488 404 L1506 416 L1525 428 L1543 441 L1561 453 L1579 465 L1597 477 L1615 489 L1632 501 L1650 513 L1668 524 L1685 536 L1703 548 L1720 560 L1738 571 L1755 583 L1772 595 L1789 606 L1806 617 L1823 629 L1840 640 L1857 651 L1873 662 L1890 673 L1906 684 L1922 695 L1938 706 L1954 717 L1970 727 L1986 738 L2001 748 L2016 758 L2031 768 L2046 778 L2061 788 L2076 798 L2090 808 L2104 817 L2118 827 L2132 836 L2145 845 L2158 854 L2171 862 L2184 871 L2196 879 L2208 887 L2220 895 L2232 903 L2244 911 L2255 919 L2267 926 L2278 934 L2289 941 L2300 948 L2310 956 L2320 962 L2330 969 L2340 976 L2350 982 L2359 988 L2368 994 L2377 1000 L2385 1006 L2394 1011 L2402 1017 L2410 1022 L2418 1027 L2425 1032 L2432 1037 L2440 1042 L2447 1047 L2453 1051 L2460 1056 L2466 1060 L2472 1064 L2478 1068 L2484 1072 L2490 1076 L2495 1080 L2501 1083 L2506 1087 L2511 1090 L2516 1094 L2521 1097 L2526 1100 L2530 1103 L2534 1106 L2539 1109 L2543 1111 L2547 1114 L2551 1117 L2555 1119 L2558 1122 L2562 1124 L2566 1127 L2569 1129 L2573 1131 L2576 1134 L2579 1136 L2582 1138 L2586 1140 L2589 1142 L2592 1144 L2595 1146 L2597 1148 L2600 1150 L2603 1152 L2606 1154 L2608 1155 L2611 1157 L2613 1159 L2615 1160 L2618 1162 L2620 1163 L2622 1165 L2624 1166 L2626 1167 L2628 1169 L2630 1170 L2632 1171 L2634 1172 L2636 1173 L2637 1175 L2639 1176 L2640 1177 L2642 1178 L2643 1179 L2645 1180 L2646 1180 L2647 1181 L2649 1182 L2650 1183 L2651 1184 L2652 1185 L2653 1185 L2654 1186 L2655 1187 L2656 1187 L2657 1188 L2658 1188 L2659 1189 L2660 1190 L2660 1190 L2661 1191 L2662 1191 L2663 1192 L2664 1193 L2666 1194 L2667 1194 L2668 1195 L2669 1196 L2670 1196 L2670 1197 L2671 1197 L2672 1198 L2673 1198 L2673 1199 L2674 1199 L2675 1200 L2675 1200 L2676 1201 L2677 1201 L2678 1202 L2679 1202 L2679 1203 L2680 1203 L2680 1204 L2681 1204 Z"/></clipPath><g clip-path="url(#insloc)">
<rect x="1346.5" y="374" width="8.5" height="8.5" fill="#799900"/>
<rect x="1354.5" y="374" width="8.5" height="8.5" fill="#7b9900"/>
<rect x="1362.5" y="374" width="8.5" height="8.5" fill="#7c9900"/>
<rect x="1370.5" y="374" width="8.5" height="8.5" fill="#7e9900"/>
<rect x="1378.5" y="374" width="8.5" height="8.5" fill="#809900"/>
<rect x="1386.5" y="374" width="8.5" height="8.5" fill="#819900"/>
<rect x="1394.5" y="374" width="8.5" height="8.5" fill="#839900"/>
<rect x="1402.5" y="374" width="8.5" height="8.5" fill="#859900"/>
<rect x="1410.5" y="374" width="8.5" height="8.5" fill="#869900"/>
<rect x="1418.5" y="374" width="8.5" height="8.5" fill="#889900"/>
<rect x="1426.5" y="374" width="8.5" height="8.5" fill="#8a9900"/>
<rect x="1434.5" y="374" width="8.5" height="8.5" fill="#8b9900"/>
<rect x="1442.5" y="374" width="8.5" height="8.5" fill="#8d9900"/>
<rect x="1450.5" y="374" width="8.5" height="8.5" fill="#8f9900"/>
<rect x="1458.5" y="374" width="8.5" height="8.5" fill="#919900"/>
<rect x="1466.5" y="374" width="8.5" height="8.5" fill="#939900"/>
<rect x="1474.5" y="374" width="8.5" height="8.5" fill="#949900"/>
<rect x="1482.5" y="374" width="8.5" height="8.5" fill="#969900"/>
<rect x="1490.5" y="374" width="8.5" height="8.5" fill="#989900"/>
<rect x="1498.5" y="374" width="8.5" height="8.5" fill="#999800"/>
<rect x="1506.5" y="374" width="8.5" height="8.5" fill="#999700"/>
<rect x="1514.5" y="374" width="8.5" height="8.5" fill="#999500"/>
<rect x="1522.5" y="374" width="8.5" height="8.5" fill="#999300"/>
<rect x="1530.5" y="374" width="8.5" height="8.5" fill="#999100"/>
<rect x="1538.5" y="374" width="8.5" height="8.5" fill="#999000"/>
<rect x="1346.5" y="382" width="8.5" height="8.5" fill="#7a9900"/>
<rect x="1354.5" y="382" width="8.5" height="8.5" fill="#7c9900"/>
<rect x="1362.5" y="382" width="8.5" height="8.5" fill="#7e9900"/>
<rect x="1370.5" y="382" width="8.5" height="8.5" fill="#7f9900"/>
<rect x="1378.5" y="382" width="8.5" height="8.5" fill="#819900"/>
<rect x="1386.5" y="382" width="8.5" height="8.5" fill="#839900"/>
<rect x="1394.5" y="382" width="8.5" height="8.5" fill="#849900"/>
<rect x="1402.5" y="382" width="8.5" height="8.5" fill="#869900"/>
<rect x="1410.5" y="382" width="8.5" height="8.5" fill="#889900"/>
<rect x="1418.5" y="382" width="8.5" height="8.5" fill="#8a9900"/>
<rect x="1426.5" y="382" width="8.5" height="8.5" fill="#8b9900"/>
<rect x="1434.5" y="382" width="8.5" height="8.5" fill="#8d9900"/>
<rect x="1442.5" y="382" width="8.5" height="8.5" fill="#8f9900"/>
<rect x="1450.5" y="382" width="8.5" height="8.5" fill="#919900"/>
<rect x="1458.5" y="382" width="8.5" height="8.5" fill="#929900"/>
<rect x="1466.5" y="382" width="8.5" height="8.5" fill="#949900"/>
<rect x="1474.5" y="382" width="8.5" height="8.5" fill="#969900"/>
<rect x="1482.5" y="382" width="8.5" height="8.5" fill="#989900"/>
<rect x="1490.5" y="382" width="8.5" height="8.5" fill="#999800"/>
<rect x="1498.5" y="382" width="8.5" height="8.5" fill="#999700"/>
<rect x="1506.5" y="382" width="8.5" height="8.5" fill="#999500"/>
<rect x="1514.5" y="382" width="8.5" height="8.5" fill="#999300"/>
<rect x="1522.5" y="382" width="8.5" height="8.5" fill="#999200"/>
<rect x="1530.5" y="382" width="8.5" height="8.5" fill="#999000"/>
<rect x="1538.5" y="382" width="8.5" height="8.5" fill="#998e00"/>
<rect x="1346.5" y="390" width="8.5" height="8.5" fill="#7c9901"/>
<rect x="1354.5" y="390" width="8.5" height="8.5" fill="#7d9900"/>
<rect x="1362.5" y="390" width="8.5" height="8.5" fill="#7f9900"/>
<rect x="1370.5" y="390" width="8.5" height="8.5" fill="#819900"/>
<rect x="1378.5" y="390" width="8.5" height="8.5" fill="#829900"/>
<rect x="1386.5" y="390" width="8.5" height="8.5" fill="#849900"/>
<rect x="1394.5" y="390" width="8.5" height="8.5" fill="#869900"/>
<rect x="1402.5" y="390" width="8.5" height="8.5" fill="#879900"/>
<rect x="1410.5" y="390" width="8.5" height="8.5" fill="#899900"/>
<rect x="1418.5" y="390" width="8.5" height="8.5" fill="#8b9900"/>
<rect x="1426.5" y="390" width="8.5" height="8.5" fill="#8d9900"/>
<rect x="1434.5" y="390" width="8.5" height="8.5" fill="#8f9900"/>
<rect x="1442.5" y="390" width="8.5" height="8.5" fill="#909900"/>
<rect x="1450.5" y="390" width="8.5" height="8.5" fill="#929900"/>
<rect x="1458.5" y="390" width="8.5" height="8.5" fill="#949900"/>
<rect x="1466.5" y="390" width="8.5" height="8.5" fill="#969900"/>
<rect x="1474.5" y="390" width="8.5" height="8.5" fill="#979900"/>
<rect x="1482.5" y="390" width="8.5" height="8.5" fill="#999900"/>
<rect x="1490.5" y="390" width="8.5" height="8.5" fill="#999700"/>
<rect x="1498.5" y="390" width="8.5" height="8.5" fill="#999500"/>
<rect x="1506.5" y="390" width="8.5" height="8.5" fill="#999300"/>
<rect x="1514.5" y="390" width="8.5" height="8.5" fill="#999200"/>
<rect x="1522.5" y="390" width="8.5" height="8.5" fill="#999000"/>
<rect x="1530.5" y="390" width="8.5" height="8.5" fill="#998e00"/>
<rect x="1538.5" y="390" width="8.5" height="8.5" fill="#998d00"/>
<rect x="1346.5" y="398" width="8.5" height="8.5" fill="#7d9902"/>
<rect x="1354.5" y="398" width="8.5" height="8.5" fill="#7f9901"/>
<rect x="1362.5" y="398" width="8.5" height="8.5" fill="#809901"/>
<rect x="1370.5" y="398" width="8.5" height="8.5" fill="#829900"/>
<rect x="1378.5" y="398" width="8.5" height="8.5" fill="#849900"/>
<rect x="1386.5" y="398" width="8.5" height="8.5" fill="#859900"/>
<rect x="1394.5" y="398" width="8.5" height="8.5" fill="#879900"/>
<rect x="1402.5" y="398" width="8.5" height="8.5" fill="#899900"/>
<rect x="1410.5" y="398" width="8.5" height="8.5" fill="#8b9900"/>
<rect x="1418.5" y="398" width="8.5" height="8.5" fill="#8c9900"/>
<rect x="1426.5" y="398" width="8.5" height="8.5" fill="#8e9900"/>
<rect x="1434.5" y="398" width="8.5" height="8.5" fill="#909900"/>
<rect x="1442.5" y="398" width="8.5" height="8.5" fill="#929900"/>
<rect x="1450.5" y="398" width="8.5" height="8.5" fill="#949900"/>
<rect x="1458.5" y="398" width="8.5" height="8.5" fill="#959900"/>
<rect x="1466.5" y="398" width="8.5" height="8.5" fill="#979900"/>
<rect x="1474.5" y="398" width="8.5" height="8.5" fill="#999900"/>
<rect x="1482.5" y="398" width="8.5" height="8.5" fill="#999700"/>
<rect x="1490.5" y="398" width="8.5" height="8.5" fill="#999500"/>
<rect x="1498.5" y="398" width="8.5" height="8.5" fill="#999400"/>
<rect x="1506.5" y="398" width="8.5" height="8.5" fill="#999200"/>
<rect x="1514.5" y="398" width="8.5" height="8.5" fill="#999000"/>
<rect x="1522.5" y="398" width="8.5" height="8.5" fill="#998e00"/>
<rect x="1530.5" y="398" width="8.5" height="8.5" fill="#998d00"/>
<rect x="1538.5" y="398" width="8.5" height="8.5" fill="#998b00"/>
<rect x="1346.5" y="406" width="8.5" height="8.5" fill="#7e9902"/>
<rect x="1354.5" y="406" width="8.5" height="8.5" fill="#809902"/>
<rect x="1362.5" y="406" width="8.5" height="8.5" fill="#829902"/>
<rect x="1370.5" y="406" width="8.5" height="8.5" fill="#839901"/>
<rect x="1378.5" y="406" width="8.5" height="8.5" fill="#859901"/>
<rect x="1386.5" y="406" width="8.5" height="8.5" fill="#879900"/>
<rect x="1394.5" y="406" width="8.5" height="8.5" fill="#899900"/>
<rect x="1402.5" y="406" width="8.5" height="8.5" fill="#8a9900"/>
<rect x="1410.5" y="406" width="8.5" height="8.5" fill="#8c9900"/>
<rect x="1418.5" y="406" width="8.5" height="8.5" fill="#8e9900"/>
<rect x="1426.5" y="406" width="8.5" height="8.5" fill="#909900"/>
<rect x="1434.5" y="406" width="8.5" height="8.5" fill="#929900"/>
<rect x="1442.5" y="406" width="8.5" height="8.5" fill="#939900"/>
<rect x="1450.5" y="406" width="8.5" height="8.5" fill="#959900"/>
<rect x="1458.5" y="406" width="8.5" height="8.5" fill="#979900"/>
<rect x="1466.5" y="406" width="8.5" height="8.5" fill="#999900"/>
<rect x="1474.5" y="406" width="8.5" height="8.5" fill="#999700"/>
<rect x="1482.5" y="406" width="8.5" height="8.5" fill="#999500"/>
<rect x="1490.5" y="406" width="8.5" height="8.5" fill="#999400"/>
<rect x="1498.5" y="406" width="8.5" height="8.5" fill="#999200"/>
<rect x="1506.5" y="406" width="8.5" height="8.5" fill="#999000"/>
<rect x="1514.5" y="406" width="8.5" height="8.5" fill="#998f00"/>
<rect x="1522.5" y="406" width="8.5" height="8.5" fill="#998d00"/>
<rect x="1530.5" y="406" width="8.5" height="8.5" fill="#998b00"/>
<rect x="1538.5" y="406" width="8.5" height="8.5" fill="#998a00"/>
<rect x="1346.5" y="414" width="8.5" height="8.5" fill="#809903"/>
<rect x="1354.5" y="414" width="8.5" height="8.5" fill="#819903"/>
<rect x="1362.5" y="414" width="8.5" height="8.5" fill="#839902"/>
<rect x="1370.5" y="414" width="8.5" height="8.5" fill="#859902"/>
<rect x="1378.5" y="414" width="8.5" height="8.5" fill="#879901"/>
<rect x="1386.5" y="414" width="8.5" height="8.5" fill="#889901"/>
<rect x="1394.5" y="414" width="8.5" height="8.5" fill="#8a9900"/>
<rect x="1402.5" y="414" width="8.5" height="8.5" fill="#8c9900"/>
<rect x="1410.5" y="414" width="8.5" height="8.5" fill="#8e9900"/>
<rect x="1418.5" y="414" width="8.5" height="8.5" fill="#909900"/>
<rect x="1426.5" y="414" width="8.5" height="8.5" fill="#919900"/>
<rect x="1434.5" y="414" width="8.5" height="8.5" fill="#939900"/>
<rect x="1442.5" y="414" width="8.5" height="8.5" fill="#959900"/>
<rect x="1450.5" y="414" width="8.5" height="8.5" fill="#979900"/>
<rect x="1458.5" y="414" width="8.5" height="8.5" fill="#999900"/>
<rect x="1466.5" y="414" width="8.5" height="8.5" fill="#999700"/>
<rect x="1474.5" y="414" width="8.5" height="8.5" fill="#999600"/>
<rect x="1482.5" y="414" width="8.5" height="8.5" fill="#999400"/>
<rect x="1490.5" y="414" width="8.5" height="8.5" fill="#999200"/>
<rect x="1498.5" y="414" width="8.5" height="8.5" fill="#999000"/>
<rect x="1506.5" y="414" width="8.5" height="8.5" fill="#998f00"/>
<rect x="1514.5" y="414" width="8.5" height="8.5" fill="#998d00"/>
<rect x="1522.5" y="414" width="8.5" height="8.5" fill="#998b00"/>
<rect x="1530.5" y="414" width="8.5" height="8.5" fill="#998a00"/>
<rect x="1538.5" y="414" width="8.5" height="8.5" fill="#998800"/>
<rect x="1346.5" y="422" width="8.5" height="8.5" fill="#819904"/>
<rect x="1354.5" y="422" width="8.5" height="8.5" fill="#839903"/>
<rect x="1362.5" y="422" width="8.5" height="8.5" fill="#859903"/>
<rect x="1370.5" y="422" width="8.5" height="8.5" fill="#869903"/>
<rect x="1378.5" y="422" width="8.5" height="8.5" fill="#889902"/>
<rect x="1386.5" y="422" width="8.5" height="8.5" fill="#8a9902"/>
<rect x="1394.5" y="422" width="8.5" height="8.5" fill="#8c9901"/>
<rect x="1402.5" y="422" width="8.5" height="8.5" fill="#8e9901"/>
<rect x="1410.5" y="422" width="8.5" height="8.5" fill="#8f9900"/>
<rect x="1418.5" y="422" width="8.5" height="8.5" fill="#919900"/>
<rect x="1426.5" y="422" width="8.5" height="8.5" fill="#939900"/>
<rect x="1434.5" y="422" width="8.5" height="8.5" fill="#959900"/>
<rect x="1442.5" y="422" width="8.5" height="8.5" fill="#979900"/>
<rect x="1450.5" y="422" width="8.5" height="8.5" fill="#999900"/>
<rect x="1458.5" y="422" width="8.5" height="8.5" fill="#999800"/>
<rect x="1466.5" y="422" width="8.5" height="8.5" fill="#999600"/>
<rect x="1474.5" y="422" width="8.5" height="8.5" fill="#999400"/>
<rect x="1482.5" y="422" width="8.5" height="8.5" fill="#999200"/>
<rect x="1490.5" y="422" width="8.5" height="8.5" fill="#999000"/>
<rect x="1498.5" y="422" width="8.5" height="8.5" fill="#998f00"/>
<rect x="1506.5" y="422" width="8.5" height="8.5" fill="#998d00"/>
<rect x="1514.5" y="422" width="8.5" height="8.5" fill="#998b00"/>
<rect x="1522.5" y="422" width="8.5" height="8.5" fill="#998a00"/>
<rect x="1530.5" y="422" width="8.5" height="8.5" fill="#998800"/>
<rect x="1538.5" y="422" width="8.5" height="8.5" fill="#998700"/>
<rect x="1346.5" y="430" width="8.5" height="8.5" fill="#839905"/>
<rect x="1354.5" y="430" width="8.5" height="8.5" fill="#849904"/>
<rect x="1362.5" y="430" width="8.5" height="8.5" fill="#869904"/>
<rect x="1370.5" y="430" width="8.5" height="8.5" fill="#889903"/>
<rect x="1378.5" y="430" width="8.5" height="8.5" fill="#8a9903"/>
<rect x="1386.5" y="430" width="8.5" height="8.5" fill="#8b9902"/>
<rect x="1394.5" y="430" width="8.5" height="8.5" fill="#8d9902"/>
<rect x="1402.5" y="430" width="8.5" height="8.5" fill="#8f9902"/>
<rect x="1410.5" y="430" width="8.5" height="8.5" fill="#919901"/>
<rect x="1418.5" y="430" width="8.5" height="8.5" fill="#939901"/>
<rect x="1426.5" y="430" width="8.5" height="8.5" fill="#959900"/>
<rect x="1434.5" y="430" width="8.5" height="8.5" fill="#969900"/>
<rect x="1442.5" y="430" width="8.5" height="8.5" fill="#989900"/>
<rect x="1450.5" y="430" width="8.5" height="8.5" fill="#999800"/>
<rect x="1458.5" y="430" width="8.5" height="8.5" fill="#999600"/>
<rect x="1466.5" y="430" width="8.5" height="8.5" fill="#999400"/>
<rect x="1474.5" y="430" width="8.5" height="8.5" fill="#999200"/>
<rect x="1482.5" y="430" width="8.5" height="8.5" fill="#999100"/>
<rect x="1490.5" y="430" width="8.5" height="8.5" fill="#998f00"/>
<rect x="1498.5" y="430" width="8.5" height="8.5" fill="#998d00"/>
<rect x="1506.5" y="430" width="8.5" height="8.5" fill="#998c00"/>
<rect x="1514.5" y="430" width="8.5" height="8.5" fill="#998a00"/>
<rect x="1522.5" y="430" width="8.5" height="8.5" fill="#998800"/>
<rect x="1530.5" y="430" width="8.5" height="8.5" fill="#998700"/>
<rect x="1538.5" y="430" width="8.5" height="8.5" fill="#998500"/>
<rect x="1346.5" y="438" width="8.5" height="8.5" fill="#849905"/>
<rect x="1354.5" y="438" width="8.5" height="8.5" fill="#869905"/>
<rect x="1362.5" y="438" width="8.5" height="8.5" fill="#889905"/>
<rect x="1370.5" y="438" width="8.5" height="8.5" fill="#899904"/>
<rect x="1378.5" y="438" width="8.5" height="8.5" fill="#8b9904"/>
<rect x="1386.5" y="438" width="8.5" height="8.5" fill="#8d9903"/>
<rect x="1394.5" y="438" width="8.5" height="8.5" fill="#8f9903"/>
<rect x="1402.5" y="438" width="8.5" height="8.5" fill="#919902"/>
<rect x="1410.5" y="438" width="8.5" height="8.5" fill="#939902"/>
<rect x="1418.5" y="438" width="8.5" height="8.5" fill="#949901"/>
<rect x="1426.5" y="438" width="8.5" height="8.5" fill="#969901"/>
<rect x="1434.5" y="438" width="8.5" height="8.5" fill="#989901"/>
<rect x="1442.5" y="438" width="8.5" height="8.5" fill="#999800"/>
<rect x="1450.5" y="438" width="8.5" height="8.5" fill="#999600"/>
<rect x="1458.5" y="438" width="8.5" height="8.5" fill="#999400"/>
<rect x="1466.5" y="438" width="8.5" height="8.5" fill="#999200"/>
<rect x="1474.5" y="438" width="8.5" height="8.5" fill="#999100"/>
<rect x="1482.5" y="438" width="8.5" height="8.5" fill="#998f00"/>
<rect x="1490.5" y="438" width="8.5" height="8.5" fill="#998d00"/>
<rect x="1498.5" y="438" width="8.5" height="8.5" fill="#998c00"/>
<rect x="1506.5" y="438" width="8.5" height="8.5" fill="#998a00"/>
<rect x="1514.5" y="438" width="8.5" height="8.5" fill="#998800"/>
<rect x="1522.5" y="438" width="8.5" height="8.5" fill="#998700"/>
<rect x="1530.5" y="438" width="8.5" height="8.5" fill="#998500"/>
<rect x="1538.5" y="438" width="8.5" height="8.5" fill="#998400"/>
<rect x="1346.5" y="446" width="8.5" height="8.5" fill="#859906"/>
<rect x="1354.5" y="446" width="8.5" height="8.5" fill="#879906"/>
<rect x="1362.5" y="446" width="8.5" height="8.5" fill="#899905"/>
<rect x="1370.5" y="446" width="8.5" height="8.5" fill="#8b9905"/>
<rect x="1378.5" y="446" width="8.5" height="8.5" fill="#8d9904"/>
<rect x="1386.5" y="446" width="8.5" height="8.5" fill="#8f9904"/>
<rect x="1394.5" y="446" width="8.5" height="8.5" fill="#909904"/>
<rect x="1402.5" y="446" width="8.5" height="8.5" fill="#929903"/>
<rect x="1410.5" y="446" width="8.5" height="8.5" fill="#949903"/>
<rect x="1418.5" y="446" width="8.5" height="8.5" fill="#969902"/>
<rect x="1426.5" y="446" width="8.5" height="8.5" fill="#989902"/>
<rect x="1434.5" y="446" width="8.5" height="8.5" fill="#999801"/>
<rect x="1442.5" y="446" width="8.5" height="8.5" fill="#999601"/>
<rect x="1450.5" y="446" width="8.5" height="8.5" fill="#999400"/>
<rect x="1458.5" y="446" width="8.5" height="8.5" fill="#999300"/>
<rect x="1466.5" y="446" width="8.5" height="8.5" fill="#999100"/>
<rect x="1474.5" y="446" width="8.5" height="8.5" fill="#998f00"/>
<rect x="1482.5" y="446" width="8.5" height="8.5" fill="#998d00"/>
<rect x="1490.5" y="446" width="8.5" height="8.5" fill="#998c00"/>
<rect x="1498.5" y="446" width="8.5" height="8.5" fill="#998a00"/>
<rect x="1506.5" y="446" width="8.5" height="8.5" fill="#998800"/>
<rect x="1514.5" y="446" width="8.5" height="8.5" fill="#998700"/>
<rect x="1522.5" y="446" width="8.5" height="8.5" fill="#998500"/>
<rect x="1530.5" y="446" width="8.5" height="8.5" fill="#998400"/>
<rect x="1538.5" y="446" width="8.5" height="8.5" fill="#998200"/>
<rect x="1346.5" y="454" width="8.5" height="8.5" fill="#879907"/>
<rect x="1354.5" y="454" width="8.5" height="8.5" fill="#899907"/>
<rect x="1362.5" y="454" width="8.5" height="8.5" fill="#8b9906"/>
<rect x="1370.5" y="454" width="8.5" height="8.5" fill="#8d9906"/>
<rect x="1378.5" y="454" width="8.5" height="8.5" fill="#8e9905"/>
<rect x="1386.5" y="454" width="8.5" height="8.5" fill="#909905"/>
<rect x="1394.5" y="454" width="8.5" height="8.5" fill="#929904"/>
<rect x="1402.5" y="454" width="8.5" height="8.5" fill="#949904"/>
<rect x="1410.5" y="454" width="8.5" height="8.5" fill="#969903"/>
<rect x="1418.5" y="454" width="8.5" height="8.5" fill="#989903"/>
<rect x="1426.5" y="454" width="8.5" height="8.5" fill="#999803"/>
<rect x="1434.5" y="454" width="8.5" height="8.5" fill="#999602"/>
<rect x="1442.5" y="454" width="8.5" height="8.5" fill="#999502"/>
<rect x="1450.5" y="454" width="8.5" height="8.5" fill="#999301"/>
<rect x="1458.5" y="454" width="8.5" height="8.5" fill="#999101"/>
<rect x="1466.5" y="454" width="8.5" height="8.5" fill="#998f00"/>
<rect x="1474.5" y="454" width="8.5" height="8.5" fill="#998e00"/>
<rect x="1482.5" y="454" width="8.5" height="8.5" fill="#998c00"/>
<rect x="1490.5" y="454" width="8.5" height="8.5" fill="#998a00"/>
<rect x="1498.5" y="454" width="8.5" height="8.5" fill="#998900"/>
<rect x="1506.5" y="454" width="8.5" height="8.5" fill="#998700"/>
<rect x="1514.5" y="454" width="8.5" height="8.5" fill="#998500"/>
<rect x="1522.5" y="454" width="8.5" height="8.5" fill="#998400"/>
<rect x="1530.5" y="454" width="8.5" height="8.5" fill="#998200"/>
<rect x="1538.5" y="454" width="8.5" height="8.5" fill="#998100"/>
<rect x="1346.5" y="462" width="8.5" height="8.5" fill="#899908"/>
<rect x="1354.5" y="462" width="8.5" height="8.5" fill="#8a9907"/>
<rect x="1362.5" y="462" width="8.5" height="8.5" fill="#8c9907"/>
<rect x="1370.5" y="462" width="8.5" height="8.5" fill="#8e9907"/>
<rect x="1378.5" y="462" width="8.5" height="8.5" fill="#909906"/>
<rect x="1386.5" y="462" width="8.5" height="8.5" fill="#929906"/>
<rect x="1394.5" y="462" width="8.5" height="8.5" fill="#949905"/>
<rect x="1402.5" y="462" width="8.5" height="8.5" fill="#969905"/>
<rect x="1410.5" y="462" width="8.5" height="8.5" fill="#989904"/>
<rect x="1418.5" y="462" width="8.5" height="8.5" fill="#999904"/>
<rect x="1426.5" y="462" width="8.5" height="8.5" fill="#999703"/>
<rect x="1434.5" y="462" width="8.5" height="8.5" fill="#999503"/>
<rect x="1442.5" y="462" width="8.5" height="8.5" fill="#999302"/>
<rect x="1450.5" y="462" width="8.5" height="8.5" fill="#999102"/>
<rect x="1458.5" y="462" width="8.5" height="8.5" fill="#998f01"/>
<rect x="1466.5" y="462" width="8.5" height="8.5" fill="#998e01"/>
<rect x="1474.5" y="462" width="8.5" height="8.5" fill="#998c00"/>
<rect x="1482.5" y="462" width="8.5" height="8.5" fill="#998a00"/>
<rect x="1490.5" y="462" width="8.5" height="8.5" fill="#998900"/>
<rect x="1498.5" y="462" width="8.5" height="8.5" fill="#998700"/>
<rect x="1506.5" y="462" width="8.5" height="8.5" fill="#998500"/>
<rect x="1514.5" y="462" width="8.5" height="8.5" fill="#998400"/>
<rect x="1522.5" y="462" width="8.5" height="8.5" fill="#998200"/>
<rect x="1530.5" y="462" width="8.5" height="8.5" fill="#998100"/>
<rect x="1538.5" y="462" width="8.5" height="8.5" fill="#997f00"/>
<rect x="1346.5" y="470" width="8.5" height="8.5" fill="#8a9909"/>
<rect x="1354.5" y="470" width="8.5" height="8.5" fill="#8c9908"/>
<rect x="1362.5" y="470" width="8.5" height="8.5" fill="#8e9908"/>
<rect x="1370.5" y="470" width="8.5" height="8.5" fill="#909907"/>
<rect x="1378.5" y="470" width="8.5" height="8.5" fill="#929907"/>
<rect x="1386.5" y="470" width="8.5" height="8.5" fill="#949907"/>
<rect x="1394.5" y="470" width="8.5" height="8.5" fill="#959906"/>
<rect x="1402.5" y="470" width="8.5" height="8.5" fill="#979906"/>
<rect x="1410.5" y="470" width="8.5" height="8.5" fill="#999905"/>
<rect x="1418.5" y="470" width="8.5" height="8.5" fill="#999705"/>
<rect x="1426.5" y="470" width="8.5" height="8.5" fill="#999504"/>
<rect x="1434.5" y="470" width="8.5" height="8.5" fill="#999304"/>
<rect x="1442.5" y="470" width="8.5" height="8.5" fill="#999103"/>
<rect x="1450.5" y="470" width="8.5" height="8.5" fill="#998f03"/>
<rect x="1458.5" y="470" width="8.5" height="8.5" fill="#998e02"/>
<rect x="1466.5" y="470" width="8.5" height="8.5" fill="#998c02"/>
<rect x="1474.5" y="470" width="8.5" height="8.5" fill="#998a01"/>
<rect x="1482.5" y="470" width="8.5" height="8.5" fill="#998901"/>
<rect x="1490.5" y="470" width="8.5" height="8.5" fill="#998700"/>
<rect x="1498.5" y="470" width="8.5" height="8.5" fill="#998500"/>
<rect x="1506.5" y="470" width="8.5" height="8.5" fill="#998400"/>
<rect x="1514.5" y="470" width="8.5" height="8.5" fill="#998200"/>
<rect x="1522.5" y="470" width="8.5" height="8.5" fill="#998100"/>
<rect x="1530.5" y="470" width="8.5" height="8.5" fill="#997f00"/>
<rect x="1538.5" y="470" width="8.5" height="8.5" fill="#997e00"/>
<rect x="1346.5" y="478" width="8.5" height="8.5" fill="#8c990a"/>
<rect x="1354.5" y="478" width="8.5" height="8.5" fill="#8e9909"/>
<rect x="1362.5" y="478" width="8.5" height="8.5" fill="#8f9909"/>
<rect x="1370.5" y="478" width="8.5" height="8.5" fill="#919908"/>
<rect x="1378.5" y="478" width="8.5" height="8.5" fill="#939908"/>
<rect x="1386.5" y="478" width="8.5" height="8.5" fill="#959907"/>
<rect x="1394.5" y="478" width="8.5" height="8.5" fill="#979907"/>
<rect x="1402.5" y="478" width="8.5" height="8.5" fill="#999906"/>
<rect x="1410.5" y="478" width="8.5" height="8.5" fill="#999706"/>
<rect x="1418.5" y="478" width="8.5" height="8.5" fill="#999505"/>
<rect x="1426.5" y="478" width="8.5" height="8.5" fill="#999305"/>
<rect x="1434.5" y="478" width="8.5" height="8.5" fill="#999104"/>
<rect x="1442.5" y="478" width="8.5" height="8.5" fill="#999004"/>
<rect x="1450.5" y="478" width="8.5" height="8.5" fill="#998e03"/>
<rect x="1458.5" y="478" width="8.5" height="8.5" fill="#998c03"/>
<rect x="1466.5" y="478" width="8.5" height="8.5" fill="#998a02"/>
<rect x="1474.5" y="478" width="8.5" height="8.5" fill="#998902"/>
<rect x="1482.5" y="478" width="8.5" height="8.5" fill="#998702"/>
<rect x="1490.5" y="478" width="8.5" height="8.5" fill="#998601"/>
<rect x="1498.5" y="478" width="8.5" height="8.5" fill="#998401"/>
<rect x="1506.5" y="478" width="8.5" height="8.5" fill="#998200"/>
<rect x="1514.5" y="478" width="8.5" height="8.5" fill="#998100"/>
<rect x="1522.5" y="478" width="8.5" height="8.5" fill="#997f00"/>
<rect x="1530.5" y="478" width="8.5" height="8.5" fill="#997e00"/>
<rect x="1538.5" y="478" width="8.5" height="8.5" fill="#997c00"/>
<rect x="1346.5" y="486" width="8.5" height="8.5" fill="#8d990a"/>
<rect x="1354.5" y="486" width="8.5" height="8.5" fill="#8f990a"/>
<rect x="1362.5" y="486" width="8.5" height="8.5" fill="#91990a"/>
<rect x="1370.5" y="486" width="8.5" height="8.5" fill="#939909"/>
<rect x="1378.5" y="486" width="8.5" height="8.5" fill="#959909"/>
<rect x="1386.5" y="486" width="8.5" height="8.5" fill="#979908"/>
<rect x="1394.5" y="486" width="8.5" height="8.5" fill="#999908"/>
<rect x="1402.5" y="486" width="8.5" height="8.5" fill="#999707"/>
<rect x="1410.5" y="486" width="8.5" height="8.5" fill="#999507"/>
<rect x="1418.5" y="486" width="8.5" height="8.5" fill="#999306"/>
<rect x="1426.5" y="486" width="8.5" height="8.5" fill="#999206"/>
<rect x="1434.5" y="486" width="8.5" height="8.5" fill="#999005"/>
<rect x="1442.5" y="486" width="8.5" height="8.5" fill="#998e05"/>
<rect x="1450.5" y="486" width="8.5" height="8.5" fill="#998c04"/>
<rect x="1458.5" y="486" width="8.5" height="8.5" fill="#998b04"/>
<rect x="1466.5" y="486" width="8.5" height="8.5" fill="#998903"/>
<rect x="1474.5" y="486" width="8.5" height="8.5" fill="#998703"/>
<rect x="1482.5" y="486" width="8.5" height="8.5" fill="#998602"/>
<rect x="1490.5" y="486" width="8.5" height="8.5" fill="#998402"/>
<rect x="1498.5" y="486" width="8.5" height="8.5" fill="#998201"/>
<rect x="1506.5" y="486" width="8.5" height="8.5" fill="#998101"/>
<rect x="1514.5" y="486" width="8.5" height="8.5" fill="#997f00"/>
<rect x="1522.5" y="486" width="8.5" height="8.5" fill="#997e00"/>
<rect x="1530.5" y="486" width="8.5" height="8.5" fill="#997c00"/>
<rect x="1538.5" y="486" width="8.5" height="8.5" fill="#997b00"/>
<rect x="1346.5" y="494" width="8.5" height="8.5" fill="#8f990b"/>
<rect x="1354.5" y="494" width="8.5" height="8.5" fill="#91990b"/>
<rect x="1362.5" y="494" width="8.5" height="8.5" fill="#93990a"/>
<rect x="1370.5" y="494" width="8.5" height="8.5" fill="#95990a"/>
<rect x="1378.5" y="494" width="8.5" height="8.5" fill="#97990a"/>
<rect x="1386.5" y="494" width="8.5" height="8.5" fill="#999909"/>
<rect x="1394.5" y="494" width="8.5" height="8.5" fill="#999709"/>
<rect x="1402.5" y="494" width="8.5" height="8.5" fill="#999508"/>
<rect x="1410.5" y="494" width="8.5" height="8.5" fill="#999407"/>
<rect x="1418.5" y="494" width="8.5" height="8.5" fill="#999207"/>
<rect x="1426.5" y="494" width="8.5" height="8.5" fill="#999006"/>
<rect x="1434.5" y="494" width="8.5" height="8.5" fill="#998e06"/>
<rect x="1442.5" y="494" width="8.5" height="8.5" fill="#998c05"/>
<rect x="1450.5" y="494" width="8.5" height="8.5" fill="#998b05"/>
<rect x="1458.5" y="494" width="8.5" height="8.5" fill="#998904"/>
<rect x="1466.5" y="494" width="8.5" height="8.5" fill="#998704"/>
<rect x="1474.5" y="494" width="8.5" height="8.5" fill="#998603"/>
<rect x="1482.5" y="494" width="8.5" height="8.5" fill="#998403"/>
<rect x="1490.5" y="494" width="8.5" height="8.5" fill="#998202"/>
<rect x="1498.5" y="494" width="8.5" height="8.5" fill="#998102"/>
<rect x="1506.5" y="494" width="8.5" height="8.5" fill="#997f02"/>
<rect x="1514.5" y="494" width="8.5" height="8.5" fill="#997e01"/>
<rect x="1522.5" y="494" width="8.5" height="8.5" fill="#997c01"/>
<rect x="1530.5" y="494" width="8.5" height="8.5" fill="#997b00"/>
<rect x="1538.5" y="494" width="8.5" height="8.5" fill="#997a00"/>
<rect x="1346.5" y="502" width="8.5" height="8.5" fill="#91990c"/>
<rect x="1354.5" y="502" width="8.5" height="8.5" fill="#93990c"/>
<rect x="1362.5" y="502" width="8.5" height="8.5" fill="#95990b"/>
<rect x="1370.5" y="502" width="8.5" height="8.5" fill="#97990b"/>
<rect x="1378.5" y="502" width="8.5" height="8.5" fill="#99990a"/>
<rect x="1386.5" y="502" width="8.5" height="8.5" fill="#99980a"/>
<rect x="1394.5" y="502" width="8.5" height="8.5" fill="#999609"/>
<rect x="1402.5" y="502" width="8.5" height="8.5" fill="#999409"/>
<rect x="1410.5" y="502" width="8.5" height="8.5" fill="#999208"/>
<rect x="1418.5" y="502" width="8.5" height="8.5" fill="#999008"/>
<rect x="1426.5" y="502" width="8.5" height="8.5" fill="#998e07"/>
<rect x="1434.5" y="502" width="8.5" height="8.5" fill="#998c07"/>
<rect x="1442.5" y="502" width="8.5" height="8.5" fill="#998b06"/>
<rect x="1450.5" y="502" width="8.5" height="8.5" fill="#998906"/>
<rect x="1458.5" y="502" width="8.5" height="8.5" fill="#998705"/>
<rect x="1466.5" y="502" width="8.5" height="8.5" fill="#998605"/>
<rect x="1474.5" y="502" width="8.5" height="8.5" fill="#998404"/>
<rect x="1482.5" y="502" width="8.5" height="8.5" fill="#998304"/>
<rect x="1490.5" y="502" width="8.5" height="8.5" fill="#998103"/>
<rect x="1498.5" y="502" width="8.5" height="8.5" fill="#997f03"/>
<rect x="1506.5" y="502" width="8.5" height="8.5" fill="#997e02"/>
<rect x="1514.5" y="502" width="8.5" height="8.5" fill="#997c02"/>
<rect x="1522.5" y="502" width="8.5" height="8.5" fill="#997b01"/>
<rect x="1530.5" y="502" width="8.5" height="8.5" fill="#997a01"/>
<rect x="1538.5" y="502" width="8.5" height="8.5" fill="#997801"/>
<clipPath id="brightclip"><polygon points="1346.5,381.4 1544.5,500.3 1544.5,507 1346.5,507"/></clipPath><g clip-path="url(#brightclip)">
<rect x="1346.5" y="374" width="8.5" height="8.5" fill="#cbff00"/>
<rect x="1346.5" y="382" width="8.5" height="8.5" fill="#ccff00"/>
<rect x="1346.5" y="390" width="8.5" height="8.5" fill="#ceff02"/>
<rect x="1346.5" y="398" width="8.5" height="8.5" fill="#d0ff03"/>
<rect x="1346.5" y="406" width="8.5" height="8.5" fill="#d2ff04"/>
<rect x="1346.5" y="414" width="8.5" height="8.5" fill="#d5ff05"/>
<rect x="1346.5" y="422" width="8.5" height="8.5" fill="#d7ff06"/>
<rect x="1346.5" y="430" width="8.5" height="8.5" fill="#daff08"/>
<rect x="1346.5" y="438" width="8.5" height="8.5" fill="#dcff09"/>
<rect x="1346.5" y="446" width="8.5" height="8.5" fill="#deff0a"/>
<rect x="1346.5" y="454" width="8.5" height="8.5" fill="#e1ff0c"/>
<rect x="1346.5" y="462" width="8.5" height="8.5" fill="#e4ff0d"/>
<rect x="1346.5" y="470" width="8.5" height="8.5" fill="#e6ff0f"/>
<rect x="1346.5" y="478" width="8.5" height="8.5" fill="#e9ff10"/>
<rect x="1346.5" y="486" width="8.5" height="8.5" fill="#ecff11"/>
<rect x="1346.5" y="494" width="8.5" height="8.5" fill="#eeff13"/>
<rect x="1346.5" y="502" width="8.5" height="8.5" fill="#f1ff14"/>
<rect x="1354.5" y="374" width="8.5" height="8.5" fill="#cfff00"/>
<rect x="1354.5" y="382" width="8.5" height="8.5" fill="#d0ff00"/>
<rect x="1354.5" y="390" width="8.5" height="8.5" fill="#d1ff01"/>
<rect x="1354.5" y="398" width="8.5" height="8.5" fill="#d3ff02"/>
<rect x="1354.5" y="406" width="8.5" height="8.5" fill="#d5ff03"/>
<rect x="1354.5" y="414" width="8.5" height="8.5" fill="#d8ff04"/>
<rect x="1354.5" y="422" width="8.5" height="8.5" fill="#daff06"/>
<rect x="1354.5" y="430" width="8.5" height="8.5" fill="#ddff07"/>
<rect x="1354.5" y="438" width="8.5" height="8.5" fill="#dfff08"/>
<rect x="1354.5" y="446" width="8.5" height="8.5" fill="#e1ff0a"/>
<rect x="1354.5" y="454" width="8.5" height="8.5" fill="#e4ff0b"/>
<rect x="1354.5" y="462" width="8.5" height="8.5" fill="#e7ff0c"/>
<rect x="1354.5" y="470" width="8.5" height="8.5" fill="#e9ff0e"/>
<rect x="1354.5" y="478" width="8.5" height="8.5" fill="#ecff0f"/>
<rect x="1354.5" y="486" width="8.5" height="8.5" fill="#efff11"/>
<rect x="1354.5" y="494" width="8.5" height="8.5" fill="#f1ff12"/>
<rect x="1354.5" y="502" width="8.5" height="8.5" fill="#f4ff14"/>
<rect x="1362.5" y="374" width="8.5" height="8.5" fill="#d3ff00"/>
<rect x="1362.5" y="382" width="8.5" height="8.5" fill="#d4ff00"/>
<rect x="1362.5" y="390" width="8.5" height="8.5" fill="#d4ff00"/>
<rect x="1362.5" y="398" width="8.5" height="8.5" fill="#d6ff01"/>
<rect x="1362.5" y="406" width="8.5" height="8.5" fill="#d8ff03"/>
<rect x="1362.5" y="414" width="8.5" height="8.5" fill="#dbff04"/>
<rect x="1362.5" y="422" width="8.5" height="8.5" fill="#ddff05"/>
<rect x="1362.5" y="430" width="8.5" height="8.5" fill="#dfff06"/>
<rect x="1362.5" y="438" width="8.5" height="8.5" fill="#e2ff08"/>
<rect x="1362.5" y="446" width="8.5" height="8.5" fill="#e5ff09"/>
<rect x="1362.5" y="454" width="8.5" height="8.5" fill="#e7ff0a"/>
<rect x="1362.5" y="462" width="8.5" height="8.5" fill="#eaff0c"/>
<rect x="1362.5" y="470" width="8.5" height="8.5" fill="#ecff0d"/>
<rect x="1362.5" y="478" width="8.5" height="8.5" fill="#efff0f"/>
<rect x="1362.5" y="486" width="8.5" height="8.5" fill="#f2ff10"/>
<rect x="1362.5" y="494" width="8.5" height="8.5" fill="#f5ff11"/>
<rect x="1362.5" y="502" width="8.5" height="8.5" fill="#f8ff13"/>
<rect x="1370.5" y="374" width="8.5" height="8.5" fill="#d8ff00"/>
<rect x="1370.5" y="382" width="8.5" height="8.5" fill="#d8ff00"/>
<rect x="1370.5" y="390" width="8.5" height="8.5" fill="#d8ff00"/>
<rect x="1370.5" y="398" width="8.5" height="8.5" fill="#d9ff01"/>
<rect x="1370.5" y="406" width="8.5" height="8.5" fill="#dbff02"/>
<rect x="1370.5" y="414" width="8.5" height="8.5" fill="#deff03"/>
<rect x="1370.5" y="422" width="8.5" height="8.5" fill="#e0ff04"/>
<rect x="1370.5" y="430" width="8.5" height="8.5" fill="#e2ff06"/>
<rect x="1370.5" y="438" width="8.5" height="8.5" fill="#e5ff07"/>
<rect x="1370.5" y="446" width="8.5" height="8.5" fill="#e8ff08"/>
<rect x="1370.5" y="454" width="8.5" height="8.5" fill="#eaff0a"/>
<rect x="1370.5" y="462" width="8.5" height="8.5" fill="#edff0b"/>
<rect x="1370.5" y="470" width="8.5" height="8.5" fill="#f0ff0c"/>
<rect x="1370.5" y="478" width="8.5" height="8.5" fill="#f2ff0e"/>
<rect x="1370.5" y="486" width="8.5" height="8.5" fill="#f5ff0f"/>
<rect x="1370.5" y="494" width="8.5" height="8.5" fill="#f8ff11"/>
<rect x="1370.5" y="502" width="8.5" height="8.5" fill="#fbff12"/>
<rect x="1378.5" y="374" width="8.5" height="8.5" fill="#dcff00"/>
<rect x="1378.5" y="382" width="8.5" height="8.5" fill="#dcff00"/>
<rect x="1378.5" y="390" width="8.5" height="8.5" fill="#ddff00"/>
<rect x="1378.5" y="398" width="8.5" height="8.5" fill="#dcff00"/>
<rect x="1378.5" y="406" width="8.5" height="8.5" fill="#deff01"/>
<rect x="1378.5" y="414" width="8.5" height="8.5" fill="#e0ff02"/>
<rect x="1378.5" y="422" width="8.5" height="8.5" fill="#e3ff04"/>
<rect x="1378.5" y="430" width="8.5" height="8.5" fill="#e5ff05"/>
<rect x="1378.5" y="438" width="8.5" height="8.5" fill="#e8ff06"/>
<rect x="1378.5" y="446" width="8.5" height="8.5" fill="#ebff07"/>
<rect x="1378.5" y="454" width="8.5" height="8.5" fill="#edff09"/>
<rect x="1378.5" y="462" width="8.5" height="8.5" fill="#f0ff0a"/>
<rect x="1378.5" y="470" width="8.5" height="8.5" fill="#f3ff0c"/>
<rect x="1378.5" y="478" width="8.5" height="8.5" fill="#f5ff0d"/>
<rect x="1378.5" y="486" width="8.5" height="8.5" fill="#f8ff0e"/>
<rect x="1378.5" y="494" width="8.5" height="8.5" fill="#fbff10"/>
<rect x="1378.5" y="502" width="8.5" height="8.5" fill="#feff11"/>
<rect x="1386.5" y="374" width="8.5" height="8.5" fill="#e1ff00"/>
<rect x="1386.5" y="382" width="8.5" height="8.5" fill="#e0ff00"/>
<rect x="1386.5" y="390" width="8.5" height="8.5" fill="#e1ff00"/>
<rect x="1386.5" y="398" width="8.5" height="8.5" fill="#e1ff00"/>
<rect x="1386.5" y="406" width="8.5" height="8.5" fill="#e1ff00"/>
<rect x="1386.5" y="414" width="8.5" height="8.5" fill="#e3ff02"/>
<rect x="1386.5" y="422" width="8.5" height="8.5" fill="#e6ff03"/>
<rect x="1386.5" y="430" width="8.5" height="8.5" fill="#e8ff04"/>
<rect x="1386.5" y="438" width="8.5" height="8.5" fill="#ebff05"/>
<rect x="1386.5" y="446" width="8.5" height="8.5" fill="#eeff07"/>
<rect x="1386.5" y="454" width="8.5" height="8.5" fill="#f0ff08"/>
<rect x="1386.5" y="462" width="8.5" height="8.5" fill="#f3ff09"/>
<rect x="1386.5" y="470" width="8.5" height="8.5" fill="#f6ff0b"/>
<rect x="1386.5" y="478" width="8.5" height="8.5" fill="#f9ff0c"/>
<rect x="1386.5" y="486" width="8.5" height="8.5" fill="#fcff0e"/>
<rect x="1386.5" y="494" width="8.5" height="8.5" fill="#ffff0f"/>
<rect x="1386.5" y="502" width="8.5" height="8.5" fill="#fffd11"/>
<rect x="1394.5" y="374" width="8.5" height="8.5" fill="#e5ff00"/>
<rect x="1394.5" y="382" width="8.5" height="8.5" fill="#e5ff00"/>
<rect x="1394.5" y="390" width="8.5" height="8.5" fill="#e5ff00"/>
<rect x="1394.5" y="398" width="8.5" height="8.5" fill="#e5ff00"/>
<rect x="1394.5" y="406" width="8.5" height="8.5" fill="#e5ff00"/>
<rect x="1394.5" y="414" width="8.5" height="8.5" fill="#e6ff01"/>
<rect x="1394.5" y="422" width="8.5" height="8.5" fill="#e9ff02"/>
<rect x="1394.5" y="430" width="8.5" height="8.5" fill="#ebff03"/>
<rect x="1394.5" y="438" width="8.5" height="8.5" fill="#eeff05"/>
<rect x="1394.5" y="446" width="8.5" height="8.5" fill="#f1ff06"/>
<rect x="1394.5" y="454" width="8.5" height="8.5" fill="#f3ff07"/>
<rect x="1394.5" y="462" width="8.5" height="8.5" fill="#f6ff09"/>
<rect x="1394.5" y="470" width="8.5" height="8.5" fill="#f9ff0a"/>
<rect x="1394.5" y="478" width="8.5" height="8.5" fill="#fcff0c"/>
<rect x="1394.5" y="486" width="8.5" height="8.5" fill="#ffff0d"/>
<rect x="1394.5" y="494" width="8.5" height="8.5" fill="#fffc0e"/>
<rect x="1394.5" y="502" width="8.5" height="8.5" fill="#fff910"/>
<rect x="1402.5" y="374" width="8.5" height="8.5" fill="#e9ff00"/>
<rect x="1402.5" y="382" width="8.5" height="8.5" fill="#eaff00"/>
<rect x="1402.5" y="390" width="8.5" height="8.5" fill="#eaff00"/>
<rect x="1402.5" y="398" width="8.5" height="8.5" fill="#e9ff00"/>
<rect x="1402.5" y="406" width="8.5" height="8.5" fill="#eaff00"/>
<rect x="1402.5" y="414" width="8.5" height="8.5" fill="#e9ff00"/>
<rect x="1402.5" y="422" width="8.5" height="8.5" fill="#ecff01"/>
<rect x="1402.5" y="430" width="8.5" height="8.5" fill="#efff03"/>
<rect x="1402.5" y="438" width="8.5" height="8.5" fill="#f1ff04"/>
<rect x="1402.5" y="446" width="8.5" height="8.5" fill="#f4ff05"/>
<rect x="1402.5" y="454" width="8.5" height="8.5" fill="#f7ff07"/>
<rect x="1402.5" y="462" width="8.5" height="8.5" fill="#f9ff08"/>
<rect x="1402.5" y="470" width="8.5" height="8.5" fill="#fcff09"/>
<rect x="1402.5" y="478" width="8.5" height="8.5" fill="#ffff0b"/>
<rect x="1402.5" y="486" width="8.5" height="8.5" fill="#fffc0c"/>
<rect x="1402.5" y="494" width="8.5" height="8.5" fill="#fff90d"/>
<rect x="1402.5" y="502" width="8.5" height="8.5" fill="#fff60f"/>
<rect x="1410.5" y="374" width="8.5" height="8.5" fill="#eeff00"/>
<rect x="1410.5" y="382" width="8.5" height="8.5" fill="#eeff00"/>
<rect x="1410.5" y="390" width="8.5" height="8.5" fill="#eeff00"/>
<rect x="1410.5" y="398" width="8.5" height="8.5" fill="#eeff00"/>
<rect x="1410.5" y="406" width="8.5" height="8.5" fill="#eeff00"/>
<rect x="1410.5" y="414" width="8.5" height="8.5" fill="#eeff00"/>
<rect x="1410.5" y="422" width="8.5" height="8.5" fill="#efff01"/>
<rect x="1410.5" y="430" width="8.5" height="8.5" fill="#f2ff02"/>
<rect x="1410.5" y="438" width="8.5" height="8.5" fill="#f4ff03"/>
<rect x="1410.5" y="446" width="8.5" height="8.5" fill="#f7ff04"/>
<rect x="1410.5" y="454" width="8.5" height="8.5" fill="#faff06"/>
<rect x="1410.5" y="462" width="8.5" height="8.5" fill="#fdff07"/>
<rect x="1410.5" y="470" width="8.5" height="8.5" fill="#fffe09"/>
<rect x="1410.5" y="478" width="8.5" height="8.5" fill="#fffc0a"/>
<rect x="1410.5" y="486" width="8.5" height="8.5" fill="#fff90b"/>
<rect x="1410.5" y="494" width="8.5" height="8.5" fill="#fff60c"/>
<rect x="1410.5" y="502" width="8.5" height="8.5" fill="#fff30e"/>
<rect x="1418.5" y="374" width="8.5" height="8.5" fill="#f2ff00"/>
<rect x="1418.5" y="382" width="8.5" height="8.5" fill="#f3ff00"/>
<rect x="1418.5" y="390" width="8.5" height="8.5" fill="#f3ff00"/>
<rect x="1418.5" y="398" width="8.5" height="8.5" fill="#f3ff00"/>
<rect x="1418.5" y="406" width="8.5" height="8.5" fill="#f3ff00"/>
<rect x="1418.5" y="414" width="8.5" height="8.5" fill="#f3ff00"/>
<rect x="1418.5" y="422" width="8.5" height="8.5" fill="#f3ff00"/>
<rect x="1418.5" y="430" width="8.5" height="8.5" fill="#f5ff01"/>
<rect x="1418.5" y="438" width="8.5" height="8.5" fill="#f7ff02"/>
<rect x="1418.5" y="446" width="8.5" height="8.5" fill="#faff04"/>
<rect x="1418.5" y="454" width="8.5" height="8.5" fill="#fdff05"/>
<rect x="1418.5" y="462" width="8.5" height="8.5" fill="#fffe06"/>
<rect x="1418.5" y="470" width="8.5" height="8.5" fill="#fffb08"/>
<rect x="1418.5" y="478" width="8.5" height="8.5" fill="#fff809"/>
<rect x="1418.5" y="486" width="8.5" height="8.5" fill="#fff60a"/>
<rect x="1418.5" y="494" width="8.5" height="8.5" fill="#fff30c"/>
<rect x="1418.5" y="502" width="8.5" height="8.5" fill="#fff00d"/>
<rect x="1426.5" y="374" width="8.5" height="8.5" fill="#f7ff00"/>
<rect x="1426.5" y="382" width="8.5" height="8.5" fill="#f7ff00"/>
<rect x="1426.5" y="390" width="8.5" height="8.5" fill="#f7ff00"/>
<rect x="1426.5" y="398" width="8.5" height="8.5" fill="#f8ff00"/>
<rect x="1426.5" y="406" width="8.5" height="8.5" fill="#f7ff00"/>
<rect x="1426.5" y="414" width="8.5" height="8.5" fill="#f8ff00"/>
<rect x="1426.5" y="422" width="8.5" height="8.5" fill="#f7ff00"/>
<rect x="1426.5" y="430" width="8.5" height="8.5" fill="#f8ff00"/>
<rect x="1426.5" y="438" width="8.5" height="8.5" fill="#faff02"/>
<rect x="1426.5" y="446" width="8.5" height="8.5" fill="#fdff03"/>
<rect x="1426.5" y="454" width="8.5" height="8.5" fill="#fffe04"/>
<rect x="1426.5" y="462" width="8.5" height="8.5" fill="#fffb06"/>
<rect x="1426.5" y="470" width="8.5" height="8.5" fill="#fff807"/>
<rect x="1426.5" y="478" width="8.5" height="8.5" fill="#fff508"/>
<rect x="1426.5" y="486" width="8.5" height="8.5" fill="#fff309"/>
<rect x="1426.5" y="494" width="8.5" height="8.5" fill="#fff00b"/>
<rect x="1426.5" y="502" width="8.5" height="8.5" fill="#ffed0c"/>
<rect x="1434.5" y="374" width="8.5" height="8.5" fill="#fcff00"/>
<rect x="1434.5" y="382" width="8.5" height="8.5" fill="#fcff00"/>
<rect x="1434.5" y="390" width="8.5" height="8.5" fill="#fdff00"/>
<rect x="1434.5" y="398" width="8.5" height="8.5" fill="#fcff00"/>
<rect x="1434.5" y="406" width="8.5" height="8.5" fill="#fcff00"/>
<rect x="1434.5" y="414" width="8.5" height="8.5" fill="#fcff00"/>
<rect x="1434.5" y="422" width="8.5" height="8.5" fill="#fcff00"/>
<rect x="1434.5" y="430" width="8.5" height="8.5" fill="#fcff00"/>
<rect x="1434.5" y="438" width="8.5" height="8.5" fill="#feff01"/>
<rect x="1434.5" y="446" width="8.5" height="8.5" fill="#fffe02"/>
<rect x="1434.5" y="454" width="8.5" height="8.5" fill="#fffb03"/>
<rect x="1434.5" y="462" width="8.5" height="8.5" fill="#fff805"/>
<rect x="1434.5" y="470" width="8.5" height="8.5" fill="#fff506"/>
<rect x="1434.5" y="478" width="8.5" height="8.5" fill="#fff207"/>
<rect x="1434.5" y="486" width="8.5" height="8.5" fill="#fff009"/>
<rect x="1434.5" y="494" width="8.5" height="8.5" fill="#ffed0a"/>
<rect x="1434.5" y="502" width="8.5" height="8.5" fill="#ffea0b"/>
<rect x="1442.5" y="374" width="8.5" height="8.5" fill="#fffd00"/>
<rect x="1442.5" y="382" width="8.5" height="8.5" fill="#fffd00"/>
<rect x="1442.5" y="390" width="8.5" height="8.5" fill="#fffd00"/>
<rect x="1442.5" y="398" width="8.5" height="8.5" fill="#fffd00"/>
<rect x="1442.5" y="406" width="8.5" height="8.5" fill="#fffd00"/>
<rect x="1442.5" y="414" width="8.5" height="8.5" fill="#fffd00"/>
<rect x="1442.5" y="422" width="8.5" height="8.5" fill="#fffd00"/>
<rect x="1442.5" y="430" width="8.5" height="8.5" fill="#fffd00"/>
<rect x="1442.5" y="438" width="8.5" height="8.5" fill="#fffd00"/>
<rect x="1442.5" y="446" width="8.5" height="8.5" fill="#fffa01"/>
<rect x="1442.5" y="454" width="8.5" height="8.5" fill="#fff803"/>
<rect x="1442.5" y="462" width="8.5" height="8.5" fill="#fff504"/>
<rect x="1442.5" y="470" width="8.5" height="8.5" fill="#fff205"/>
<rect x="1442.5" y="478" width="8.5" height="8.5" fill="#ffef06"/>
<rect x="1442.5" y="486" width="8.5" height="8.5" fill="#ffed08"/>
<rect x="1442.5" y="494" width="8.5" height="8.5" fill="#ffea09"/>
<rect x="1442.5" y="502" width="8.5" height="8.5" fill="#ffe70a"/>
<rect x="1450.5" y="374" width="8.5" height="8.5" fill="#fff800"/>
<rect x="1450.5" y="382" width="8.5" height="8.5" fill="#fff900"/>
<rect x="1450.5" y="390" width="8.5" height="8.5" fill="#fff800"/>
<rect x="1450.5" y="398" width="8.5" height="8.5" fill="#fff800"/>
<rect x="1450.5" y="406" width="8.5" height="8.5" fill="#fff800"/>
<rect x="1450.5" y="414" width="8.5" height="8.5" fill="#fff800"/>
<rect x="1450.5" y="422" width="8.5" height="8.5" fill="#fff800"/>
<rect x="1450.5" y="430" width="8.5" height="8.5" fill="#fff800"/>
<rect x="1450.5" y="438" width="8.5" height="8.5" fill="#fff900"/>
<rect x="1450.5" y="446" width="8.5" height="8.5" fill="#fff701"/>
<rect x="1450.5" y="454" width="8.5" height="8.5" fill="#fff502"/>
<rect x="1450.5" y="462" width="8.5" height="8.5" fill="#fff203"/>
<rect x="1450.5" y="470" width="8.5" height="8.5" fill="#ffef04"/>
<rect x="1450.5" y="478" width="8.5" height="8.5" fill="#ffec06"/>
<rect x="1450.5" y="486" width="8.5" height="8.5" fill="#ffea07"/>
<rect x="1450.5" y="494" width="8.5" height="8.5" fill="#ffe708"/>
<rect x="1450.5" y="502" width="8.5" height="8.5" fill="#ffe409"/>
<rect x="1458.5" y="374" width="8.5" height="8.5" fill="#fff400"/>
<rect x="1458.5" y="382" width="8.5" height="8.5" fill="#fff400"/>
<rect x="1458.5" y="390" width="8.5" height="8.5" fill="#fff400"/>
<rect x="1458.5" y="398" width="8.5" height="8.5" fill="#fff400"/>
<rect x="1458.5" y="406" width="8.5" height="8.5" fill="#fff300"/>
<rect x="1458.5" y="414" width="8.5" height="8.5" fill="#fff400"/>
<rect x="1458.5" y="422" width="8.5" height="8.5" fill="#fff300"/>
<rect x="1458.5" y="430" width="8.5" height="8.5" fill="#fff400"/>
<rect x="1458.5" y="438" width="8.5" height="8.5" fill="#fff300"/>
<rect x="1458.5" y="446" width="8.5" height="8.5" fill="#fff400"/>
<rect x="1458.5" y="454" width="8.5" height="8.5" fill="#fff201"/>
<rect x="1458.5" y="462" width="8.5" height="8.5" fill="#ffef02"/>
<rect x="1458.5" y="470" width="8.5" height="8.5" fill="#ffec04"/>
<rect x="1458.5" y="478" width="8.5" height="8.5" fill="#ffea05"/>
<rect x="1458.5" y="486" width="8.5" height="8.5" fill="#ffe706"/>
<rect x="1458.5" y="494" width="8.5" height="8.5" fill="#ffe407"/>
<rect x="1458.5" y="502" width="8.5" height="8.5" fill="#ffe208"/>
<rect x="1466.5" y="374" width="8.5" height="8.5" fill="#ffef00"/>
<rect x="1466.5" y="382" width="8.5" height="8.5" fill="#ffef00"/>
<rect x="1466.5" y="390" width="8.5" height="8.5" fill="#ffef00"/>
<rect x="1466.5" y="398" width="8.5" height="8.5" fill="#ffef00"/>
<rect x="1466.5" y="406" width="8.5" height="8.5" fill="#ffef00"/>
<rect x="1466.5" y="414" width="8.5" height="8.5" fill="#ffef00"/>
<rect x="1466.5" y="422" width="8.5" height="8.5" fill="#ffef00"/>
<rect x="1466.5" y="430" width="8.5" height="8.5" fill="#ffef00"/>
<rect x="1466.5" y="438" width="8.5" height="8.5" fill="#ffef00"/>
<rect x="1466.5" y="446" width="8.5" height="8.5" fill="#ffef00"/>
<rect x="1466.5" y="454" width="8.5" height="8.5" fill="#ffef00"/>
<rect x="1466.5" y="462" width="8.5" height="8.5" fill="#ffec02"/>
<rect x="1466.5" y="470" width="8.5" height="8.5" fill="#ffe903"/>
<rect x="1466.5" y="478" width="8.5" height="8.5" fill="#ffe704"/>
<rect x="1466.5" y="486" width="8.5" height="8.5" fill="#ffe405"/>
<rect x="1466.5" y="494" width="8.5" height="8.5" fill="#ffe106"/>
<rect x="1466.5" y="502" width="8.5" height="8.5" fill="#ffdf08"/>
<rect x="1474.5" y="374" width="8.5" height="8.5" fill="#ffeb00"/>
<rect x="1474.5" y="382" width="8.5" height="8.5" fill="#ffea00"/>
<rect x="1474.5" y="390" width="8.5" height="8.5" fill="#ffeb00"/>
<rect x="1474.5" y="398" width="8.5" height="8.5" fill="#ffea00"/>
<rect x="1474.5" y="406" width="8.5" height="8.5" fill="#ffeb00"/>
<rect x="1474.5" y="414" width="8.5" height="8.5" fill="#ffea00"/>
<rect x="1474.5" y="422" width="8.5" height="8.5" fill="#ffeb00"/>
<rect x="1474.5" y="430" width="8.5" height="8.5" fill="#ffeb00"/>
<rect x="1474.5" y="438" width="8.5" height="8.5" fill="#ffea00"/>
<rect x="1474.5" y="446" width="8.5" height="8.5" fill="#ffeb00"/>
<rect x="1474.5" y="454" width="8.5" height="8.5" fill="#ffea00"/>
<rect x="1474.5" y="462" width="8.5" height="8.5" fill="#ffe901"/>
<rect x="1474.5" y="470" width="8.5" height="8.5" fill="#ffe702"/>
<rect x="1474.5" y="478" width="8.5" height="8.5" fill="#ffe403"/>
<rect x="1474.5" y="486" width="8.5" height="8.5" fill="#ffe104"/>
<rect x="1474.5" y="494" width="8.5" height="8.5" fill="#ffdf06"/>
<rect x="1474.5" y="502" width="8.5" height="8.5" fill="#ffdc07"/>
<rect x="1482.5" y="374" width="8.5" height="8.5" fill="#ffe700"/>
<rect x="1482.5" y="382" width="8.5" height="8.5" fill="#ffe600"/>
<rect x="1482.5" y="390" width="8.5" height="8.5" fill="#ffe600"/>
<rect x="1482.5" y="398" width="8.5" height="8.5" fill="#ffe600"/>
<rect x="1482.5" y="406" width="8.5" height="8.5" fill="#ffe600"/>
<rect x="1482.5" y="414" width="8.5" height="8.5" fill="#ffe600"/>
<rect x="1482.5" y="422" width="8.5" height="8.5" fill="#ffe600"/>
<rect x="1482.5" y="430" width="8.5" height="8.5" fill="#ffe600"/>
<rect x="1482.5" y="438" width="8.5" height="8.5" fill="#ffe600"/>
<rect x="1482.5" y="446" width="8.5" height="8.5" fill="#ffe700"/>
<rect x="1482.5" y="454" width="8.5" height="8.5" fill="#ffe600"/>
<rect x="1482.5" y="462" width="8.5" height="8.5" fill="#ffe600"/>
<rect x="1482.5" y="470" width="8.5" height="8.5" fill="#ffe401"/>
<rect x="1482.5" y="478" width="8.5" height="8.5" fill="#ffe103"/>
<rect x="1482.5" y="486" width="8.5" height="8.5" fill="#ffdf04"/>
<rect x="1482.5" y="494" width="8.5" height="8.5" fill="#ffdc05"/>
<rect x="1482.5" y="502" width="8.5" height="8.5" fill="#ffda06"/>
<rect x="1490.5" y="374" width="8.5" height="8.5" fill="#998900"/>
<rect x="1490.5" y="382" width="8.5" height="8.5" fill="#ffe200"/>
<rect x="1490.5" y="390" width="8.5" height="8.5" fill="#ffe200"/>
<rect x="1490.5" y="398" width="8.5" height="8.5" fill="#ffe200"/>
<rect x="1490.5" y="406" width="8.5" height="8.5" fill="#ffe200"/>
<rect x="1490.5" y="414" width="8.5" height="8.5" fill="#ffe200"/>
<rect x="1490.5" y="422" width="8.5" height="8.5" fill="#ffe200"/>
<rect x="1490.5" y="430" width="8.5" height="8.5" fill="#ffe200"/>
<rect x="1490.5" y="438" width="8.5" height="8.5" fill="#ffe200"/>
<rect x="1490.5" y="446" width="8.5" height="8.5" fill="#ffe200"/>
<rect x="1490.5" y="454" width="8.5" height="8.5" fill="#ffe200"/>
<rect x="1490.5" y="462" width="8.5" height="8.5" fill="#ffe200"/>
<rect x="1490.5" y="470" width="8.5" height="8.5" fill="#ffe101"/>
<rect x="1490.5" y="478" width="8.5" height="8.5" fill="#ffdf02"/>
<rect x="1490.5" y="486" width="8.5" height="8.5" fill="#ffdc03"/>
<rect x="1490.5" y="494" width="8.5" height="8.5" fill="#ffd904"/>
<rect x="1490.5" y="502" width="8.5" height="8.5" fill="#ffd705"/>
<rect x="1498.5" y="374" width="8.5" height="8.5" fill="#998700"/>
<rect x="1498.5" y="382" width="8.5" height="8.5" fill="#998600"/>
<rect x="1498.5" y="390" width="8.5" height="8.5" fill="#ffdd00"/>
<rect x="1498.5" y="398" width="8.5" height="8.5" fill="#ffde00"/>
<rect x="1498.5" y="406" width="8.5" height="8.5" fill="#ffde00"/>
<rect x="1498.5" y="414" width="8.5" height="8.5" fill="#ffde00"/>
<rect x="1498.5" y="422" width="8.5" height="8.5" fill="#ffde00"/>
<rect x="1498.5" y="430" width="8.5" height="8.5" fill="#ffde00"/>
<rect x="1498.5" y="438" width="8.5" height="8.5" fill="#ffde00"/>
<rect x="1498.5" y="446" width="8.5" height="8.5" fill="#ffde00"/>
<rect x="1498.5" y="454" width="8.5" height="8.5" fill="#ffde00"/>
<rect x="1498.5" y="462" width="8.5" height="8.5" fill="#ffdd00"/>
<rect x="1498.5" y="470" width="8.5" height="8.5" fill="#ffde00"/>
<rect x="1498.5" y="478" width="8.5" height="8.5" fill="#ffdc01"/>
<rect x="1498.5" y="486" width="8.5" height="8.5" fill="#ffd902"/>
<rect x="1498.5" y="494" width="8.5" height="8.5" fill="#ffd703"/>
<rect x="1498.5" y="502" width="8.5" height="8.5" fill="#ffd405"/>
<rect x="1506.5" y="374" width="8.5" height="8.5" fill="#998600"/>
<rect x="1506.5" y="382" width="8.5" height="8.5" fill="#998400"/>
<rect x="1506.5" y="390" width="8.5" height="8.5" fill="#ffd900"/>
<rect x="1506.5" y="398" width="8.5" height="8.5" fill="#ffda00"/>
<rect x="1506.5" y="406" width="8.5" height="8.5" fill="#ffd900"/>
<rect x="1506.5" y="414" width="8.5" height="8.5" fill="#ffda00"/>
<rect x="1506.5" y="422" width="8.5" height="8.5" fill="#ffd900"/>
<rect x="1506.5" y="430" width="8.5" height="8.5" fill="#ffda00"/>
<rect x="1506.5" y="438" width="8.5" height="8.5" fill="#ffda00"/>
<rect x="1506.5" y="446" width="8.5" height="8.5" fill="#ffda00"/>
<rect x="1506.5" y="454" width="8.5" height="8.5" fill="#ffda00"/>
<rect x="1506.5" y="462" width="8.5" height="8.5" fill="#ffd900"/>
<rect x="1506.5" y="470" width="8.5" height="8.5" fill="#ffda00"/>
<rect x="1506.5" y="478" width="8.5" height="8.5" fill="#ffd900"/>
<rect x="1506.5" y="486" width="8.5" height="8.5" fill="#ffd701"/>
<rect x="1506.5" y="494" width="8.5" height="8.5" fill="#ffd403"/>
<rect x="1506.5" y="502" width="8.5" height="8.5" fill="#ffd204"/>
<rect x="1514.5" y="374" width="8.5" height="8.5" fill="#998400"/>
<rect x="1514.5" y="382" width="8.5" height="8.5" fill="#998200"/>
<rect x="1514.5" y="390" width="8.5" height="8.5" fill="#998100"/>
<rect x="1514.5" y="398" width="8.5" height="8.5" fill="#ffd600"/>
<rect x="1514.5" y="406" width="8.5" height="8.5" fill="#ffd500"/>
<rect x="1514.5" y="414" width="8.5" height="8.5" fill="#ffd600"/>
<rect x="1514.5" y="422" width="8.5" height="8.5" fill="#ffd500"/>
<rect x="1514.5" y="430" width="8.5" height="8.5" fill="#ffd600"/>
<rect x="1514.5" y="438" width="8.5" height="8.5" fill="#ffd500"/>
<rect x="1514.5" y="446" width="8.5" height="8.5" fill="#ffd600"/>
<rect x="1514.5" y="454" width="8.5" height="8.5" fill="#ffd600"/>
<rect x="1514.5" y="462" width="8.5" height="8.5" fill="#ffd600"/>
<rect x="1514.5" y="470" width="8.5" height="8.5" fill="#ffd600"/>
<rect x="1514.5" y="478" width="8.5" height="8.5" fill="#ffd500"/>
<rect x="1514.5" y="486" width="8.5" height="8.5" fill="#ffd401"/>
<rect x="1514.5" y="494" width="8.5" height="8.5" fill="#ffd202"/>
<rect x="1514.5" y="502" width="8.5" height="8.5" fill="#ffcf03"/>
<rect x="1522.5" y="374" width="8.5" height="8.5" fill="#998200"/>
<rect x="1522.5" y="382" width="8.5" height="8.5" fill="#998100"/>
<rect x="1522.5" y="390" width="8.5" height="8.5" fill="#997f00"/>
<rect x="1522.5" y="398" width="8.5" height="8.5" fill="#ffd200"/>
<rect x="1522.5" y="406" width="8.5" height="8.5" fill="#ffd200"/>
<rect x="1522.5" y="414" width="8.5" height="8.5" fill="#ffd200"/>
<rect x="1522.5" y="422" width="8.5" height="8.5" fill="#ffd200"/>
<rect x="1522.5" y="430" width="8.5" height="8.5" fill="#ffd200"/>
<rect x="1522.5" y="438" width="8.5" height="8.5" fill="#ffd100"/>
<rect x="1522.5" y="446" width="8.5" height="8.5" fill="#ffd200"/>
<rect x="1522.5" y="454" width="8.5" height="8.5" fill="#ffd100"/>
<rect x="1522.5" y="462" width="8.5" height="8.5" fill="#ffd200"/>
<rect x="1522.5" y="470" width="8.5" height="8.5" fill="#ffd200"/>
<rect x="1522.5" y="478" width="8.5" height="8.5" fill="#ffd200"/>
<rect x="1522.5" y="486" width="8.5" height="8.5" fill="#ffd200"/>
<rect x="1522.5" y="494" width="8.5" height="8.5" fill="#ffcf01"/>
<rect x="1522.5" y="502" width="8.5" height="8.5" fill="#ffcd02"/>
<rect x="1530.5" y="374" width="8.5" height="8.5" fill="#998100"/>
<rect x="1530.5" y="382" width="8.5" height="8.5" fill="#997f00"/>
<rect x="1530.5" y="390" width="8.5" height="8.5" fill="#997e00"/>
<rect x="1530.5" y="398" width="8.5" height="8.5" fill="#997d00"/>
<rect x="1530.5" y="406" width="8.5" height="8.5" fill="#ffce00"/>
<rect x="1530.5" y="414" width="8.5" height="8.5" fill="#ffce00"/>
<rect x="1530.5" y="422" width="8.5" height="8.5" fill="#ffce00"/>
<rect x="1530.5" y="430" width="8.5" height="8.5" fill="#ffce00"/>
<rect x="1530.5" y="438" width="8.5" height="8.5" fill="#ffce00"/>
<rect x="1530.5" y="446" width="8.5" height="8.5" fill="#ffce00"/>
<rect x="1530.5" y="454" width="8.5" height="8.5" fill="#ffce00"/>
<rect x="1530.5" y="462" width="8.5" height="8.5" fill="#ffce00"/>
<rect x="1530.5" y="470" width="8.5" height="8.5" fill="#ffce00"/>
<rect x="1530.5" y="478" width="8.5" height="8.5" fill="#ffce00"/>
<rect x="1530.5" y="486" width="8.5" height="8.5" fill="#ffce00"/>
<rect x="1530.5" y="494" width="8.5" height="8.5" fill="#ffcd01"/>
<rect x="1530.5" y="502" width="8.5" height="8.5" fill="#ffcb02"/>
<rect x="1538.5" y="374" width="8.5" height="8.5" fill="#997f00"/>
<rect x="1538.5" y="382" width="8.5" height="8.5" fill="#997e00"/>
<rect x="1538.5" y="390" width="8.5" height="8.5" fill="#997d00"/>
<rect x="1538.5" y="398" width="8.5" height="8.5" fill="#997b00"/>
<rect x="1538.5" y="406" width="8.5" height="8.5" fill="#997a00"/>
<rect x="1538.5" y="414" width="8.5" height="8.5" fill="#ffca00"/>
<rect x="1538.5" y="422" width="8.5" height="8.5" fill="#ffca00"/>
<rect x="1538.5" y="430" width="8.5" height="8.5" fill="#ffca00"/>
<rect x="1538.5" y="438" width="8.5" height="8.5" fill="#ffca00"/>
<rect x="1538.5" y="446" width="8.5" height="8.5" fill="#ffca00"/>
<rect x="1538.5" y="454" width="8.5" height="8.5" fill="#ffca00"/>
<rect x="1538.5" y="462" width="8.5" height="8.5" fill="#ffca00"/>
<rect x="1538.5" y="470" width="8.5" height="8.5" fill="#ffca00"/>
<rect x="1538.5" y="478" width="8.5" height="8.5" fill="#ffca00"/>
<rect x="1538.5" y="486" width="8.5" height="8.5" fill="#ffca00"/>
<rect x="1538.5" y="494" width="8.5" height="8.5" fill="#ffca00"/>
<rect x="1538.5" y="502" width="8.5" height="8.5" fill="#ffc801"/>
</g></g></g>
</svg>
<canvas id="cie" width="600" height="462" style="left:950.5px;top:53.5px;width:600px;height:462px"></canvas>
<canvas id="inset" width="198" height="133" style="left:1346.5px;top:374px;width:198px;height:133px"></canvas>
<svg width="1553" height="858" viewBox="0 0 1553 858">
<path d="M950.5 53.5 H1550.5 V515.5 H950.5 Z" fill="none" stroke="#9a9a9a" stroke-width="1.3"/>
<rect x="1042.6" y="64.19999999999999" width="12.8" height="12.8" fill="none" stroke="#ffffff" stroke-width="1.5"/>
<rect x="1055.6" y="74.6" width="12.8" height="12.8" fill="none" stroke="#ffffff" stroke-width="1.5"/>
<rect x="1069.3" y="87.3" width="12.8" height="12.8" fill="none" stroke="#ffffff" stroke-width="1.5"/>
<rect x="1088.6" y="103.39999999999999" width="12.8" height="12.8" fill="none" stroke="#ffffff" stroke-width="1.5"/>
<rect x="1111.6" y="122.29999999999998" width="12.8" height="12.8" fill="none" stroke="#ffffff" stroke-width="1.5"/>
<rect x="1148.3" y="74.19999999999999" width="12.8" height="12.8" fill="none" stroke="#ffffff" stroke-width="1.5"/>
<rect x="1147.3999999999999" y="85.6" width="12.8" height="12.8" fill="none" stroke="#ffffff" stroke-width="1.5"/>
<rect x="1145.3" y="99.19999999999999" width="12.8" height="12.8" fill="none" stroke="#ffffff" stroke-width="1.5"/>
<rect x="1144.3" y="112.6" width="12.8" height="12.8" fill="none" stroke="#ffffff" stroke-width="1.5"/>
<rect x="1143.3999999999999" y="129.29999999999998" width="12.8" height="12.8" fill="none" stroke="#ffffff" stroke-width="1.5"/>
<rect x="1064.3999999999999" y="159.29999999999998" width="12.8" height="12.8" fill="none" stroke="#ffffff" stroke-width="1.5"/>
<rect x="1079.3" y="157.2" width="12.8" height="12.8" fill="none" stroke="#ffffff" stroke-width="1.5"/>
<rect x="1094.5" y="154.1" width="12.8" height="12.8" fill="none" stroke="#ffffff" stroke-width="1.5"/>
<rect x="1110.3999999999999" y="153.2" width="12.8" height="12.8" fill="none" stroke="#ffffff" stroke-width="1.5"/>
<rect x="1125.6" y="150.2" width="12.8" height="12.8" fill="none" stroke="#ffffff" stroke-width="1.5"/>
<rect x="1439.6" y="103.39999999999999" width="12.8" height="12.8" fill="none" stroke="#ffffff" stroke-width="1.5"/>
<rect x="1373.6" y="113.5" width="12.8" height="12.8" fill="none" stroke="#ffffff" stroke-width="1.5"/>
<rect x="1311.3999999999999" y="122.5" width="12.8" height="12.8" fill="none" stroke="#ffffff" stroke-width="1.5"/>
<rect x="1248.5" y="133.5" width="12.8" height="12.8" fill="none" stroke="#ffffff" stroke-width="1.5"/>
<rect x="1193.1999999999998" y="140.5" width="12.8" height="12.8" fill="none" stroke="#ffffff" stroke-width="1.5"/>
<rect x="1268.5" y="255.4" width="12.8" height="12.8" fill="none" stroke="#ffffff" stroke-width="1.5"/>
<rect x="1232.3999999999999" y="226.7" width="12.8" height="12.8" fill="none" stroke="#ffffff" stroke-width="1.5"/>
<rect x="1204.6" y="201.79999999999998" width="12.8" height="12.8" fill="none" stroke="#ffffff" stroke-width="1.5"/>
<rect x="1179.6999999999998" y="180.29999999999998" width="12.8" height="12.8" fill="none" stroke="#ffffff" stroke-width="1.5"/>
<rect x="1158.5" y="162.6" width="12.8" height="12.8" fill="none" stroke="#ffffff" stroke-width="1.5"/>
<rect x="1119.3999999999999" y="387.5" width="12.8" height="12.8" fill="none" stroke="#ffffff" stroke-width="1.5"/>
<rect x="1125.3999999999999" y="313.3" width="12.8" height="12.8" fill="none" stroke="#ffffff" stroke-width="1.5"/>
<rect x="1131.5" y="255.1" width="12.8" height="12.8" fill="none" stroke="#ffffff" stroke-width="1.5"/>
<rect x="1135.6999999999998" y="212.1" width="12.8" height="12.8" fill="none" stroke="#ffffff" stroke-width="1.5"/>
<rect x="1138.1" y="176.29999999999998" width="12.8" height="12.8" fill="none" stroke="#ffffff" stroke-width="1.5"/>
<circle cx="1036.4" cy="68.2" r="3.8" fill="#3cb43c" stroke="#000" stroke-width="1.1"/>
<circle cx="1049" cy="78.3" r="3.8" fill="#5aaa5a" stroke="#000" stroke-width="1.1"/>
<circle cx="1064.3" cy="89.3" r="3.8" fill="#6aa86a" stroke="#000" stroke-width="1.1"/>
<circle cx="1085.7" cy="106.3" r="3.8" fill="#80aa80" stroke="#000" stroke-width="1.1"/>
<circle cx="1111.4" cy="126.4" r="3.8" fill="#a0b0a0" stroke="#000" stroke-width="1.1"/>
<circle cx="1156.1" cy="80.6" r="3.8" fill="#c8c828" stroke="#000" stroke-width="1.1"/>
<circle cx="1153.3" cy="91.4" r="3.8" fill="#c0c060" stroke="#000" stroke-width="1.1"/>
<circle cx="1152.3" cy="103.3" r="3.8" fill="#c0c080" stroke="#000" stroke-width="1.1"/>
<circle cx="1151.2" cy="117.3" r="3.8" fill="#c0c098" stroke="#000" stroke-width="1.1"/>
<circle cx="1148.3" cy="133.4" r="3.8" fill="#c0c0a8" stroke="#000" stroke-width="1.1"/>
<circle cx="1056.3" cy="163.3" r="3.8" fill="#30b0b0" stroke="#000" stroke-width="1.1"/>
<circle cx="1073.4" cy="162.2" r="3.8" fill="#60b0b0" stroke="#000" stroke-width="1.1"/>
<circle cx="1091.3" cy="159.8" r="3.8" fill="#80b4b4" stroke="#000" stroke-width="1.1"/>
<circle cx="1108.9" cy="157.2" r="3.8" fill="#98b8b8" stroke="#000" stroke-width="1.1"/>
<circle cx="1126.4" cy="154.5" r="3.8" fill="#aac0c0" stroke="#000" stroke-width="1.1"/>
<circle cx="1449.2" cy="111.2" r="3.8" fill="#cc1010" stroke="#000" stroke-width="1.1"/>
<circle cx="1392.4" cy="119.6" r="3.8" fill="#b05050" stroke="#000" stroke-width="1.1"/>
<circle cx="1334.6" cy="126.6" r="3.8" fill="#b06464" stroke="#000" stroke-width="1.1"/>
<circle cx="1267.7" cy="135.5" r="3.8" fill="#b08080" stroke="#000" stroke-width="1.1"/>
<circle cx="1205.9" cy="144.6" r="3.8" fill="#b09898" stroke="#000" stroke-width="1.1"/>
<circle cx="1282.4" cy="258.3" r="3.8" fill="#b030b0" stroke="#000" stroke-width="1.1"/>
<circle cx="1249.5" cy="231.5" r="3.8" fill="#b060b0" stroke="#000" stroke-width="1.1"/>
<circle cx="1217.3" cy="207.5" r="3.8" fill="#b080b0" stroke="#000" stroke-width="1.1"/>
<circle cx="1189.6" cy="185.3" r="3.8" fill="#b094b0" stroke="#000" stroke-width="1.1"/>
<circle cx="1166.3" cy="167.4" r="3.8" fill="#b0a0b0" stroke="#000" stroke-width="1.1"/>
<circle cx="1111.2" cy="407" r="3.8" fill="#3030b0" stroke="#000" stroke-width="1.1"/>
<circle cx="1121.2" cy="331.2" r="3.8" fill="#5050b0" stroke="#000" stroke-width="1.1"/>
<circle cx="1130.3" cy="267" r="3.8" fill="#7070b0" stroke="#000" stroke-width="1.1"/>
<circle cx="1137.3" cy="218.2" r="3.8" fill="#9090b8" stroke="#000" stroke-width="1.1"/>
<circle cx="1142.4" cy="181.2" r="3.8" fill="#a0a0b8" stroke="#000" stroke-width="1.1"/>
<rect x="1140.25" y="148.05" width="13.5" height="13.5" fill="none" stroke="#000" stroke-width="2.1"/>
<circle cx="1147.4" cy="152.3" r="4.8" fill="#ffffff" stroke="#000" stroke-width="1"/>
<circle cx="1235.5" cy="196.5" r="4.5" fill="#000"/>
<rect x="1346.5" y="374" width="198" height="133" fill="none" stroke="#8c8c8c" stroke-width="2"/>
<rect x="1436.95" y="433.15" width="13.5" height="13.5" fill="none" stroke="#ffffff" stroke-width="2"/>
<circle cx="1461.2" cy="440.4" r="3.8" fill="#c8c400" stroke="#000" stroke-width="1.2"/>
</svg>
<script>
(function(){
var L=[[0.1741,0.005],[0.17409,0.005],[0.17408,0.005],[0.17407,0.005],[0.17406,0.00501],[0.17405,0.00501],[0.17403,0.00501],[0.17402,0.005],[0.174,0.005],[0.17398,0.00499],[0.17396,0.00498],[0.17393,0.00497],[0.17391,0.00495],[0.17388,0.00493],[0.17385,0.00492],[0.17383,0.00491],[0.1738,0.0049],[0.17378,0.0049],[0.17375,0.0049],[0.17373,0.0049],[0.17371,0.0049],[0.17368,0.0049],[0.17366,0.0049],[0.17363,0.0049],[0.1736,0.0049],[0.17357,0.00489],[0.17353,0.00488],[0.17349,0.00487],[0.17346,0.00485],[0.17342,0.00483],[0.17338,0.00482],[0.17334,0.00481],[0.1733,0.0048],[0.17326,0.0048],[0.17323,0.00479],[0.17319,0.00479],[0.17316,0.00479],[0.17312,0.0048],[0.17308,0.0048],[0.17304,0.0048],[0.173,0.0048],[0.17296,0.0048],[0.17291,0.0048],[0.17286,0.0048],[0.17281,0.0048],[0.17276,0.0048],[0.17271,0.0048],[0.17266,0.0048],[0.1726,0.0048],[0.17254,0.0048],[0.17249,0.00479],[0.17243,0.00479],[0.17237,0.00478],[0.17231,0.00478],[0.17224,0.00478],[0.17217,0.00479],[0.1721,0.0048],[0.17202,0.00482],[0.17195,0.00484],[0.17187,0.00487],[0.17179,0.00491],[0.1717,0.00495],[0.17161,0.00499],[0.17151,0.00504],[0.1714,0.0051],[0.17128,0.00517],[0.17116,0.00524],[0.17103,0.00532],[0.17089,0.0054],[0.17075,0.00549],[0.17061,0.00559],[0.17045,0.00569],[0.1703,0.0058],[0.17014,0.00591],[0.16999,0.00603],[0.16982,0.00616],[0.16966,0.00629],[0.16948,0.00643],[0.1693,0.00657],[0.16911,0.00673],[0.1689,0.0069],[0.16868,0.00708],[0.16845,0.00727],[0.16822,0.00747],[0.16797,0.00767],[0.16771,0.00789],[0.16745,0.00812],[0.16718,0.00835],[0.1669,0.0086],[0.16662,0.00885],[0.16633,0.00912],[0.16603,0.00939],[0.16573,0.00968],[0.16542,0.00997],[0.16509,0.01027],[0.16475,0.01058],[0.1644,0.0109],[0.16403,0.01123],[0.16366,0.01156],[0.16327,0.0119],[0.16287,0.01225],[0.16246,0.01261],[0.16203,0.01299],[0.16158,0.01339],[0.1611,0.0138],[0.1606,0.01423],[0.16009,0.01468],[0.15955,0.01514],[0.15899,0.01562],[0.15842,0.01611],[0.15783,0.01662],[0.15722,0.01715],[0.1566,0.0177],[0.15596,0.01826],[0.15531,0.01883],[0.15464,0.01941],[0.15396,0.02001],[0.15325,0.02063],[0.15252,0.02128],[0.15177,0.02197],[0.151,0.0227],[0.1502,0.02346],[0.14938,0.02423],[0.14854,0.02504],[0.14768,0.02588],[0.1468,0.02675],[0.14589,0.02768],[0.14496,0.02866],[0.144,0.0297],[0.14303,0.03077],[0.14205,0.03184],[0.14105,0.03295],[0.14002,0.03412],[0.13897,0.03537],[0.13786,0.03673],[0.13671,0.03823],[0.1355,0.0399],[0.13423,0.04169],[0.13293,0.04357],[0.13157,0.04556],[0.13018,0.04767],[0.12873,0.04994],[0.12724,0.05236],[0.12569,0.05498],[0.1241,0.0578],[0.12246,0.06078],[0.12078,0.06387],[0.11906,0.06712],[0.11728,0.07055],[0.11545,0.0742],[0.11356,0.0781],[0.11162,0.08229],[0.1096,0.0868],[0.10752,0.09158],[0.10539,0.09657],[0.1032,0.1018],[0.10096,0.10731],[0.09864,0.11313],[0.09627,0.11928],[0.09382,0.12579],[0.0913,0.1327],[0.08869,0.13996],[0.08597,0.14753],[0.08317,0.15543],[0.08031,0.16367],[0.07742,0.1723],[0.0745,0.18133],[0.07159,0.19079],[0.0687,0.2007],[0.06581,0.21107],[0.06289,0.22188],[0.05995,0.23311],[0.05701,0.24474],[0.05407,0.25677],[0.05114,0.26916],[0.04825,0.28191],[0.0454,0.295],[0.04255,0.30854],[0.03967,0.32259],[0.03679,0.33707],[0.03395,0.35189],[0.03117,0.36695],[0.02848,0.38216],[0.02591,0.39744],[0.0235,0.4127],[0.0212,0.42809],[0.01895,0.44378],[0.0168,0.45966],[0.01475,0.47563],[0.01284,0.49159],[0.0111,0.50744],[0.00954,0.52308],[0.0082,0.5384],[0.00704,0.55354],[0.00602,0.56865],[0.00515,0.58365],[0.00447,0.59849],[0.00398,0.6131],[0.00371,0.62739],[0.00368,0.64132],[0.0039,0.6548],[0.00436,0.66796],[0.00504,0.68091],[0.00594,0.69359],[0.00707,0.70591],[0.00842,0.71781],[0.01001,0.7292],[0.01183,0.74003],[0.0139,0.7502],[0.01624,0.75981],[0.01885,0.76895],[0.02172,0.77759],[0.02481,0.7857],[0.0281,0.79323],[0.03157,0.80015],[0.03517,0.80642],[0.0389,0.812],[0.0428,0.81684],[0.04691,0.82095],[0.05122,0.8244],[0.05567,0.82724],[0.06024,0.82954],[0.06489,0.83135],[0.06959,0.83276],[0.0743,0.8338],[0.07907,0.83434],[0.08394,0.83426],[0.08891,0.83366],[0.09393,0.83263],[0.099,0.83127],[0.10408,0.82968],[0.10915,0.82796],[0.1142,0.8262],[0.11925,0.8243],[0.12434,0.82211],[0.12944,0.81969],[0.13456,0.81709],[0.13965,0.81436],[0.14472,0.81155],[0.14974,0.80872],[0.1547,0.8059],[0.1596,0.80307],[0.16445,0.80018],[0.16926,0.79721],[0.17404,0.79419],[0.17879,0.79111],[0.18351,0.78798],[0.18821,0.78481],[0.1929,0.7816],[0.19756,0.77835],[0.20219,0.77505],[0.20679,0.7717],[0.21137,0.76831],[0.21594,0.76487],[0.2205,0.76139],[0.22505,0.75786],[0.2296,0.7543],[0.23415,0.75069],[0.23869,0.74704],[0.24323,0.74334],[0.24776,0.73959],[0.25228,0.73582],[0.25679,0.732],[0.2613,0.72816],[0.2658,0.7243],[0.27029,0.72041],[0.27478,0.71647],[0.27926,0.71251],[0.28373,0.70851],[0.2882,0.70449],[0.29267,0.70045],[0.29713,0.69638],[0.3016,0.6923],[0.30607,0.6882],[0.31053,0.68407],[0.31499,0.67992],[0.31945,0.67575],[0.32391,0.67156],[0.32837,0.66735],[0.33283,0.66313],[0.3373,0.6589],[0.34177,0.65465],[0.34625,0.65038],[0.35073,0.6461],[0.35521,0.64179],[0.35969,0.63748],[0.36416,0.63316],[0.36863,0.62883],[0.3731,0.6245],[0.37756,0.62016],[0.38202,0.61581],[0.38647,0.61145],[0.39093,0.60708],[0.39537,0.60271],[0.39982,0.59834],[0.40426,0.59397],[0.4087,0.5896],[0.41314,0.58523],[0.41758,0.58087],[0.42202,0.57649],[0.42646,0.57212],[0.43089,0.56776],[0.4353,0.5634],[0.43971,0.55904],[0.4441,0.5547],[0.44848,0.55036],[0.45285,0.54603],[0.45721,0.54169],[0.46156,0.53737],[0.46589,0.53305],[0.47021,0.52875],[0.47452,0.52447],[0.4788,0.5202],[0.48307,0.51595],[0.48733,0.5117],[0.49157,0.50747],[0.4958,0.50326],[0.50001,0.49906],[0.5042,0.49488],[0.50836,0.49073],[0.5125,0.4866],[0.51662,0.48249],[0.52072,0.4784],[0.5248,0.47433],[0.52886,0.47029],[0.53289,0.46627],[0.53689,0.46228],[0.54086,0.45832],[0.5448,0.4544],[0.54871,0.45051],[0.5526,0.44665],[0.55646,0.44282],[0.56029,0.43902],[0.56408,0.43525],[0.56783,0.43153],[0.57154,0.42784],[0.5752,0.4242],[0.57882,0.42059],[0.5824,0.41701],[0.58594,0.41347],[0.58944,0.40996],[0.59289,0.40651],[0.59629,0.40311],[0.59963,0.39977],[0.6029,0.3965],[0.6061,0.3933],[0.60925,0.39017],[0.61233,0.3871],[0.61536,0.38409],[0.61833,0.38112],[0.62126,0.37821],[0.62415,0.37534],[0.627,0.3725],[0.62981,0.3697],[0.63259,0.36693],[0.63532,0.36421],[0.63801,0.36154],[0.64064,0.35891],[0.64322,0.35635],[0.64574,0.35384],[0.6482,0.3514],[0.65059,0.34903],[0.65293,0.34672],[0.65521,0.34447],[0.65743,0.34227],[0.6596,0.34014],[0.66172,0.33805],[0.66378,0.336],[0.6658,0.334],[0.66777,0.33204],[0.66968,0.33014],[0.67153,0.32828],[0.67334,0.32648],[0.67509,0.32471],[0.67681,0.323],[0.67847,0.32133],[0.6801,0.3197],[0.68168,0.31812],[0.68321,0.31659],[0.68469,0.31511],[0.68613,0.31367],[0.68752,0.31227],[0.68888,0.31091],[0.6902,0.30959],[0.6915,0.3083],[0.69276,0.30705],[0.69398,0.30584],[0.69516,0.30467],[0.69631,0.30354],[0.69742,0.30245],[0.69851,0.30137],[0.69956,0.30033],[0.7006,0.2993],[0.70161,0.2983],[0.70258,0.29733],[0.70352,0.29639],[0.70444,0.29547],[0.70533,0.29457],[0.7062,0.2937],[0.70706,0.29284],[0.7079,0.292],[0.70873,0.29117],[0.70954,0.29036],[0.71032,0.28958],[0.71109,0.28881],[0.71185,0.28805],[0.71258,0.28732],[0.7133,0.2866],[0.714,0.2859],[0.71468,0.28521],[0.71535,0.28455],[0.716,0.2839],[0.71663,0.28326],[0.71725,0.28265],[0.71785,0.28205],[0.71843,0.28146],[0.719,0.2809],[0.71955,0.28035],[0.72009,0.27983],[0.72062,0.27932],[0.72113,0.27882],[0.72162,0.27835],[0.72209,0.27789],[0.72255,0.27744],[0.723,0.277],[0.72343,0.27658],[0.72384,0.27617],[0.72423,0.27578],[0.72461,0.2754],[0.72497,0.27503],[0.72532,0.27468],[0.72567,0.27434],[0.726,0.274],[0.72633,0.27367],[0.72664,0.27336],[0.72694,0.27306],[0.72723,0.27277],[0.72751,0.27249],[0.72778,0.27222],[0.72805,0.27195],[0.7283,0.2717],[0.72854,0.27146],[0.72876,0.27124],[0.72897,0.27103],[0.72917,0.27083],[0.72937,0.27063],[0.72957,0.27043],[0.72978,0.27022],[0.73,0.27],[0.73024,0.26976],[0.73049,0.26951],[0.73075,0.26925],[0.73102,0.26898],[0.73128,0.26872],[0.73154,0.26846],[0.73178,0.26822],[0.732,0.268],[0.7322,0.2678],[0.73239,0.26761],[0.73257,0.26743],[0.73274,0.26726],[0.73291,0.26709],[0.73307,0.26693],[0.73323,0.26677],[0.7334,0.2666],[0.73358,0.26642],[0.73376,0.26624],[0.73395,0.26605],[0.73414,0.26586],[0.73431,0.26569],[0.73447,0.26553],[0.7346,0.2654],[0.7347,0.2653]];
function toUV(p){var d=-2*p[0]+12*p[1]+3;return [4*p[0]/d,9*p[1]/d];}
var M=[[2.4934969,-0.9313836,-0.4027108],[-0.8294890,1.7626641,0.0236247],[0.0358458,-0.0761724,0.9568845]];
function col(x,y,out){
  var X=x/y, Y=1, Z=(1-x-y)/y;
  var r=M[0][0]*X+M[0][1]*Y+M[0][2]*Z, g=M[1][0]*X+M[1][1]*Y+M[1][2]*Z, b=M[2][0]*X+M[2][1]*Y+M[2][2]*Z;
  var inside = (r>=0&&g>=0&&b>=0);
  if(r<0)r=0; if(g<0)g=0; if(b<0)b=0;
  var m=Math.max(r,g,b); if(m<=0)m=1;
  r/=m; g/=m; b/=m;
  var gm=1.0;
  r=Math.pow(r,gm); g=Math.pow(g,gm); b=Math.pow(b,gm);
  var f = inside?1.0:0.6;
  out[0]=r*255*f; out[1]=g*255*f; out[2]=b*255*f;
}
function drawMain(cv){
  var ctx=cv.getContext('2d'); var w=cv.width,h=cv.height;
  // locus path in pixel coords
  ctx.fillStyle='#fff';
  ctx.beginPath();
  for(var i=0;i<L.length;i++){var uv=toUV(L[i]); var px=uv[0]*1000, py=h-uv[1]*768; if(i==0)ctx.moveTo(px,py); else ctx.lineTo(px,py);}
  ctx.closePath(); ctx.fill();
  var img=ctx.getImageData(0,0,w,h), d=img.data, o=[0,0,0];
  for(var j=0;j<h;j++){
    var v=(h-j-0.5)/768;
    for(var i=0;i<w;i++){
      var k=(j*w+i)*4; var a=d[k+3]; if(a==0)continue;
      var sr=0,sg=0,sb=0;
      for(var sj=0;sj<2;sj++){ var vv=(h-j-0.25-0.5*sj)/768;
      for(var si=0;si<2;si++){
        var u=(i+0.25+0.5*si)/1000;
        var den=6*u-16*vv+12; var x=9*u/den, y=4*vv/den;
        col(x,y,o); sr+=o[0]; sg+=o[1]; sb+=o[2];
      }}
      d[k]=sr/4; d[k+1]=sg/4; d[k+2]=sb/4;
    }
  }
  ctx.putImageData(img,0,0);
}
function drawInset(cv){
  var ctx=cv.getContext('2d'); var w=cv.width,h=cv.height;
  var cx0=0.4378, cy0=0.5359, sx=4167, sy=2806, ox=97.20000000000005, oy=65.89999999999998;
  ctx.fillStyle='#fff';
  ctx.beginPath();
  for(var i=0;i<L.length;i++){var px=ox+(L[i][0]-cx0)*sx, py=oy-(L[i][1]+-0.0017-cy0)*sy; if(i==0)ctx.moveTo(px,py); else ctx.lineTo(px,py);}
  ctx.closePath(); ctx.fill();
  var img=ctx.getImageData(0,0,w,h), d=img.data, o=[0,0,0];
  for(var j=0;j<h;j++){
    var y=cy0-((j+0.5)-oy)/sy;
    for(var i=0;i<w;i++){
      var k=(j*w+i)*4; var a=d[k+3]; if(a==0)continue;
      var sr=0,sg=0,sb=0;
      for(var sj=0;sj<2;sj++){ var yy=cy0-((j+0.25+0.5*sj)-oy)/sy;
      for(var si=0;si<2;si++){
        var x=cx0+((i+0.25+0.5*si)-ox)/sx;
        col(x,yy,o); sr+=o[0]; sg+=o[1]; sb+=o[2];
      }}
      d[k]=sr/4; d[k+1]=sg/4; d[k+2]=sb/4;
    }
  }
  ctx.putImageData(img,0,0);
}
drawMain(document.getElementById('cie'));
drawInset(document.getElementById('inset'));
})();
</script>
</body></html>
